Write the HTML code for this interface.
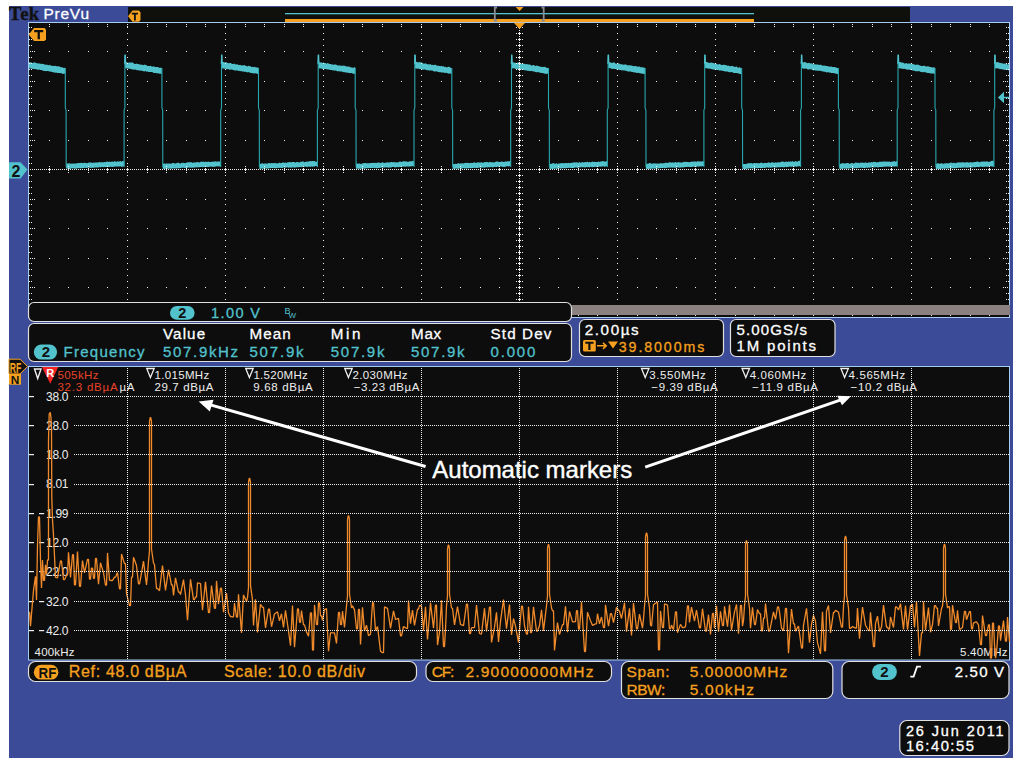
<!DOCTYPE html>
<html><head><meta charset="utf-8"><style>
html,body{margin:0;padding:0;background:#fff;width:1018px;height:763px;overflow:hidden}
svg{display:block}
text{font-family:"Liberation Sans",sans-serif}
</style></head><body>
<svg width="1018" height="763" viewBox="0 0 1018 763">
<rect x="0" y="0" width="1018" height="763" fill="#fff"/>
<rect x="9" y="6" width="1004" height="752" fill="#3c4b98"/>
<rect x="128" y="7" width="782" height="15" fill="#0f0f0b"/>
<rect x="285" y="13" width="469" height="1.3" fill="#52c3cd"/>
<rect x="285" y="19" width="469" height="3" fill="#f5a01e"/>
<path d="M497 7.5 h-2.2 v13 h2.2" fill="none" stroke="#8a8a90" stroke-width="1.8"/>
<path d="M541.5 7.5 h2.2 v13 h-2.2" fill="none" stroke="#8a8a90" stroke-width="1.8"/>
<path d="M515.7 7 L523.5 7 L519.6 11 Z" fill="#f5a01e"/>
<path d="M128 16.2 L132.5 10.6 L139 10.6 L140.5 12.5 L140.5 20 L139 21.8 L132.5 21.8 Z" fill="#f5a01e"/>
<path d="M131.8 12.8 h6.2 v1.8 h-2.2 v6 h-1.8 v-6 h-2.2 Z" fill="#111"/>
<text x="9.10" y="19.90" font-size="18.5" fill="#111" style="font-family:Liberation Serif" textLength="30.00" lengthAdjust="spacing" font-weight="bold" stroke="#111" stroke-width="0.4">Tek</text>
<text x="43.50" y="19.30" font-size="15.5" fill="#fff" textLength="45.50" lengthAdjust="spacing" stroke="#fff" stroke-width="0.3">PreVu</text>
<rect x="28.5" y="22.5" width="981" height="295" fill="#0d0d0d" stroke="#a6cdf0" stroke-width="1"/>
<path d="M29.0 62.3L30.0 62.3L31.0 62.2L32.0 63.0L33.0 62.9L34.0 62.3L35.0 62.6L36.1 63.0L37.1 63.2L38.1 63.4L39.1 63.4L40.1 63.5L41.1 64.1L42.1 63.7L43.1 64.0L44.1 64.2L45.1 64.7L46.1 64.8L47.1 64.5L48.1 65.4L49.1 64.8L50.2 65.3L51.2 65.5L52.2 65.9L53.2 65.8L54.2 65.9L55.2 65.8L56.2 66.2L57.2 66.2L58.2 66.3L59.2 66.6L60.2 66.7L61.2 67.4L62.2 67.0L63.2 67.9L64.3 67.7L65.3 68.0L65.3 74.2L64.3 73.6L63.2 73.9L62.2 73.8L61.2 73.1L60.2 73.2L59.2 72.9L58.2 72.9L57.2 73.0L56.2 72.4L55.2 72.7L54.2 72.5L53.2 72.3L52.2 72.0L51.2 71.7L50.2 71.5L49.1 71.4L48.1 71.1L47.1 70.9L46.1 71.2L45.1 71.0L44.1 70.9L43.1 70.7L42.1 70.3L41.1 69.9L40.1 70.0L39.1 69.6L38.1 69.8L37.1 69.7L36.1 69.1L35.0 69.2L34.0 69.0L33.0 68.7L32.0 68.9L31.0 68.3L30.0 68.4L29.0 68.2ZM66.1 163.4L67.1 163.6L68.1 163.5L69.1 163.3L70.1 163.6L71.1 163.7L72.1 163.4L73.1 163.8L74.1 163.3L75.1 163.8L76.1 163.5L77.1 162.9L78.1 163.3L79.1 163.0L80.1 163.1L81.1 162.7L82.1 163.1L83.1 163.3L84.1 162.5L85.1 162.9L86.1 163.0L87.1 163.3L88.2 162.7L89.2 162.6L90.2 162.5L91.2 162.5L92.2 163.1L93.2 162.4L94.2 162.8L95.2 162.4L96.2 162.6L97.2 162.5L98.2 162.5L99.2 162.0L100.2 162.2L101.2 162.4L102.2 161.9L103.2 162.4L104.2 161.9L105.2 162.2L106.2 161.7L107.2 161.6L108.2 162.1L109.2 161.5L110.2 162.1L111.2 161.7L112.3 161.4L113.3 162.0L114.3 161.3L115.3 161.3L116.3 161.9L117.3 161.2L118.3 161.6L119.3 161.5L120.3 161.0L121.3 161.8L122.3 160.9L123.3 161.3L124.3 160.8L124.3 166.1L123.3 166.6L122.3 166.7L121.3 166.7L120.3 166.3L119.3 166.5L118.3 166.5L117.3 166.5L116.3 166.5L115.3 166.6L114.3 166.8L113.3 166.7L112.3 167.0L111.2 166.7L110.2 166.7L109.2 166.9L108.2 167.1L107.2 166.9L106.2 167.1L105.2 167.0L104.2 166.9L103.2 167.2L102.2 167.1L101.2 167.1L100.2 167.5L99.2 167.1L98.2 167.4L97.2 167.6L96.2 167.4L95.2 167.5L94.2 167.6L93.2 167.9L92.2 167.5L91.2 167.9L90.2 167.7L89.2 167.8L88.2 167.6L87.1 168.0L86.1 168.0L85.1 167.7L84.1 168.1L83.1 168.0L82.1 168.3L81.1 168.2L80.1 168.3L79.1 168.3L78.1 168.3L77.1 168.3L76.1 168.7L75.1 168.7L74.1 168.3L73.1 168.5L72.1 168.3L71.1 168.4L70.1 169.0L69.1 169.0L68.1 168.7L67.1 168.5L66.1 168.6ZM125.1 61.7L126.1 61.9L127.1 62.5L128.2 62.7L129.2 62.5L130.2 62.4L131.2 62.5L132.3 62.6L133.3 62.8L134.3 63.9L135.3 63.9L136.3 63.6L137.4 64.0L138.4 63.9L139.4 64.5L140.4 64.4L141.5 64.7L142.5 64.7L143.5 65.2L144.5 64.6L145.5 64.9L146.6 65.2L147.6 66.0L148.6 65.9L149.6 65.9L150.7 65.7L151.7 66.6L152.7 66.7L153.7 66.0L154.7 67.1L155.8 67.0L156.8 67.1L157.8 67.1L158.8 67.6L159.9 67.9L160.9 67.4L161.9 68.2L161.9 73.8L160.9 73.8L159.9 73.7L158.8 73.4L157.8 73.3L156.8 73.3L155.8 72.9L154.7 72.9L153.7 72.9L152.7 72.3L151.7 72.1L150.7 71.9L149.6 72.0L148.6 71.9L147.6 71.6L146.6 71.8L145.5 71.1L144.5 71.4L143.5 71.2L142.5 71.1L141.5 70.6L140.4 70.7L139.4 70.6L138.4 70.2L137.4 70.3L136.3 69.9L135.3 69.6L134.3 69.7L133.3 69.5L132.3 69.5L131.2 69.2L130.2 68.7L129.2 68.7L128.2 68.4L127.1 68.4L126.1 68.3L125.1 68.3ZM162.7 163.9L163.7 163.4L164.7 163.4L165.7 163.7L166.7 163.6L167.7 163.6L168.7 163.5L169.7 163.4L170.7 163.8L171.7 163.4L172.7 162.9L173.7 162.9L174.7 163.5L175.8 163.6L176.8 163.0L177.8 162.8L178.8 162.8L179.8 163.4L180.8 163.5L181.8 162.6L182.8 163.3L183.8 162.5L184.8 163.3L185.8 163.1L186.8 162.5L187.8 162.2L188.8 162.3L189.8 162.3L190.8 162.3L191.8 162.2L192.8 162.9L193.8 162.3L194.8 162.6L195.8 162.6L196.8 162.0L197.8 162.3L198.8 162.3L199.9 162.5L200.9 161.6L201.9 161.8L202.9 161.8L203.9 161.8L204.9 161.9L205.9 161.5L206.9 162.2L207.9 161.4L208.9 161.8L209.9 162.0L210.9 161.9L211.9 161.8L212.9 161.4L213.9 161.7L214.9 161.6L215.9 161.3L216.9 161.7L217.9 161.4L218.9 161.6L219.9 161.4L220.9 161.6L220.9 166.6L219.9 166.5L218.9 166.3L217.9 166.4L216.9 166.2L215.9 166.4L214.9 166.8L213.9 166.7L212.9 166.9L211.9 166.5L210.9 166.8L209.9 166.6L208.9 167.0L207.9 166.9L206.9 167.1L205.9 166.8L204.9 167.1L203.9 167.1L202.9 167.2L201.9 166.9L200.9 167.1L199.9 167.2L198.8 167.2L197.8 167.3L196.8 167.3L195.8 167.5L194.8 167.3L193.8 167.7L192.8 167.4L191.8 167.8L190.8 167.4L189.8 167.7L188.8 167.4L187.8 167.8L186.8 168.0L185.8 168.1L184.8 168.1L183.8 167.7L182.8 167.7L181.8 167.8L180.8 167.9L179.8 168.2L178.8 168.2L177.8 168.3L176.8 168.5L175.8 168.5L174.7 168.3L173.7 168.6L172.7 168.3L171.7 168.7L170.7 168.5L169.7 168.7L168.7 168.4L167.7 168.8L166.7 168.8L165.7 168.7L164.7 168.9L163.7 168.7L162.7 168.9ZM221.7 61.9L222.8 62.1L223.8 61.9L224.8 62.4L225.8 62.2L226.9 62.5L227.9 62.9L228.9 63.3L229.9 63.1L230.9 63.0L232.0 63.9L233.0 64.0L234.0 63.5L235.0 64.3L236.1 64.4L237.1 64.1L238.1 64.9L239.1 64.9L240.1 64.8L241.2 65.5L242.2 65.3L243.2 65.6L244.2 65.1L245.3 65.6L246.3 66.1L247.3 66.4L248.3 65.8L249.3 65.9L250.4 66.2L251.4 66.9L252.4 66.7L253.4 67.2L254.5 66.7L255.5 67.3L256.5 67.5L257.5 67.4L258.5 67.7L258.5 73.8L257.5 73.9L256.5 73.6L255.5 73.3L254.5 73.5L253.4 73.3L252.4 73.2L251.4 73.0L250.4 72.8L249.3 72.5L248.3 72.1L247.3 72.4L246.3 72.1L245.3 71.7L244.2 71.7L243.2 71.6L242.2 71.4L241.2 71.1L240.1 71.2L239.1 70.8L238.1 70.9L237.1 70.3L236.1 70.4L235.0 70.5L234.0 70.3L233.0 70.0L232.0 69.6L230.9 69.4L229.9 69.7L228.9 69.4L227.9 68.9L226.9 69.2L225.8 68.7L224.8 68.7L223.8 68.5L222.8 68.5L221.7 68.2ZM259.3 163.6L260.3 164.0L261.3 163.5L262.4 163.2L263.4 163.8L264.4 163.4L265.4 163.4L266.4 163.6L267.4 163.8L268.4 163.1L269.4 163.1L270.4 163.5L271.4 162.9L272.4 163.2L273.4 162.9L274.4 163.3L275.4 163.0L276.4 163.2L277.4 163.4L278.4 163.3L279.4 162.6L280.4 163.2L281.4 162.9L282.4 162.4L283.4 162.6L284.4 162.8L285.4 162.6L286.5 162.9L287.5 162.2L288.5 162.2L289.5 162.0L290.5 162.3L291.5 162.2L292.5 162.1L293.5 161.9L294.5 162.1L295.5 162.7L296.5 162.0L297.5 162.1L298.5 162.3L299.5 162.5L300.5 161.8L301.5 161.8L302.5 161.5L303.5 161.5L304.5 162.2L305.5 162.0L306.5 161.6L307.5 161.8L308.5 161.4L309.5 161.2L310.6 161.1L311.6 161.2L312.6 161.1L313.6 161.0L314.6 161.1L315.6 161.7L316.6 161.7L317.6 161.5L317.6 166.3L316.6 166.2L315.6 166.1L314.6 166.4L313.6 166.4L312.6 166.8L311.6 166.5L310.6 166.7L309.5 166.7L308.5 166.5L307.5 167.0L306.5 167.0L305.5 166.6L304.5 166.8L303.5 167.0L302.5 166.7L301.5 167.3L300.5 167.0L299.5 167.1L298.5 167.2L297.5 167.2L296.5 167.2L295.5 167.4L294.5 167.5L293.5 167.4L292.5 167.3L291.5 167.7L290.5 167.5L289.5 167.5L288.5 167.8L287.5 167.3L286.5 167.5L285.4 167.8L284.4 167.6L283.4 167.6L282.4 168.0L281.4 168.0L280.4 167.7L279.4 168.1L278.4 167.8L277.4 167.9L276.4 168.3L275.4 168.3L274.4 168.1L273.4 168.2L272.4 168.1L271.4 168.1L270.4 168.3L269.4 168.3L268.4 168.5L267.4 168.6L266.4 168.4L265.4 168.6L264.4 168.7L263.4 168.8L262.4 168.5L261.3 168.6L260.3 169.1L259.3 168.9ZM318.4 61.7L319.4 62.2L320.4 62.4L321.4 62.2L322.5 62.9L323.5 62.5L324.5 63.0L325.5 63.0L326.6 63.7L327.6 63.1L328.6 63.6L329.6 64.0L330.6 64.0L331.7 64.5L332.7 64.5L333.7 64.8L334.7 64.6L335.8 64.5L336.8 65.0L337.8 65.5L338.8 65.5L339.8 65.4L340.9 65.4L341.9 66.1L342.9 65.6L343.9 65.7L345.0 65.7L346.0 66.6L347.0 66.2L348.0 66.8L349.0 66.6L350.1 66.9L351.1 67.6L352.1 67.6L353.1 67.9L354.2 67.2L355.2 67.3L355.2 74.0L354.2 73.7L353.1 73.8L352.1 73.2L351.1 73.1L350.1 72.9L349.0 73.3L348.0 72.6L347.0 72.8L346.0 72.4L345.0 72.2L343.9 72.2L342.9 71.9L341.9 71.6L340.9 71.6L339.8 71.4L338.8 71.1L337.8 71.5L336.8 71.0L335.8 70.6L334.7 70.7L333.7 70.3L332.7 70.4L331.7 70.0L330.6 69.9L329.6 69.7L328.6 69.6L327.6 69.4L326.6 69.3L325.5 69.1L324.5 69.1L323.5 68.9L322.5 69.0L321.4 68.6L320.4 68.4L319.4 68.4L318.4 68.2ZM356.0 163.5L357.0 163.3L358.0 163.9L359.0 163.2L360.0 163.8L361.0 163.9L362.0 163.7L363.0 163.0L364.0 163.2L365.0 163.0L366.0 162.9L367.0 163.4L368.0 163.0L369.0 163.4L370.0 162.9L371.0 162.9L372.0 163.1L373.1 162.8L374.1 163.0L375.1 162.7L376.1 163.1L377.1 162.7L378.1 162.4L379.1 162.4L380.1 162.9L381.1 163.1L382.1 162.2L383.1 162.5L384.1 162.9L385.1 162.7L386.1 162.8L387.1 162.3L388.1 162.6L389.1 162.6L390.1 162.3L391.1 162.1L392.1 162.1L393.1 162.4L394.1 161.8L395.1 162.5L396.1 162.3L397.1 162.4L398.2 162.2L399.2 161.7L400.2 161.6L401.2 161.9L402.2 161.8L403.2 161.3L404.2 161.3L405.2 161.6L406.2 161.3L407.2 161.7L408.2 161.9L409.2 161.2L410.2 161.2L411.2 161.6L412.2 160.8L413.2 161.3L414.2 161.5L414.2 166.1L413.2 166.1L412.2 166.3L411.2 166.3L410.2 166.5L409.2 166.5L408.2 166.6L407.2 166.6L406.2 166.4L405.2 166.7L404.2 166.6L403.2 166.8L402.2 166.6L401.2 166.9L400.2 167.1L399.2 167.0L398.2 167.2L397.1 167.0L396.1 167.3L395.1 167.4L394.1 167.0L393.1 167.0L392.1 167.1L391.1 167.5L390.1 167.5L389.1 167.4L388.1 167.7L387.1 167.2L386.1 167.6L385.1 167.3L384.1 167.7L383.1 167.4L382.1 167.5L381.1 167.7L380.1 167.7L379.1 168.0L378.1 167.9L377.1 168.2L376.1 168.2L375.1 167.8L374.1 168.2L373.1 167.8L372.0 167.9L371.0 168.1L370.0 168.3L369.0 168.1L368.0 168.3L367.0 168.2L366.0 168.3L365.0 168.5L364.0 168.7L363.0 168.4L362.0 168.7L361.0 168.6L360.0 168.9L359.0 168.5L358.0 168.8L357.0 168.5L356.0 169.1ZM415.0 61.5L416.0 61.7L417.1 62.1L418.1 62.4L419.1 62.1L420.1 62.3L421.2 62.6L422.2 62.6L423.2 63.4L424.2 63.7L425.2 63.3L426.3 63.7L427.3 64.3L428.3 64.3L429.3 64.4L430.4 64.1L431.4 64.9L432.4 64.8L433.4 65.2L434.4 64.8L435.5 64.7L436.5 65.5L437.5 65.7L438.5 65.7L439.6 66.0L440.6 66.2L441.6 65.8L442.6 66.5L443.6 66.2L444.7 67.0L445.7 66.8L446.7 67.4L447.7 66.9L448.8 66.8L449.8 67.0L450.8 68.0L451.8 67.9L451.8 73.9L450.8 73.5L449.8 73.4L448.8 73.7L447.7 73.3L446.7 73.0L445.7 72.8L444.7 72.9L443.6 72.4L442.6 72.4L441.6 72.6L440.6 72.2L439.6 72.3L438.5 71.9L437.5 71.7L436.5 71.3L435.5 71.6L434.4 71.5L433.4 71.2L432.4 70.6L431.4 70.6L430.4 70.4L429.3 70.6L428.3 70.2L427.3 70.2L426.3 70.0L425.2 69.6L424.2 69.4L423.2 69.7L422.2 69.5L421.2 69.1L420.1 68.9L419.1 69.0L418.1 68.6L417.1 68.7L416.0 68.6L415.0 68.3ZM452.6 164.2L453.6 164.1L454.6 163.9L455.6 163.7L456.6 164.0L457.6 163.4L458.6 163.1L459.6 163.7L460.7 163.2L461.7 163.4L462.7 163.3L463.7 163.6L464.7 163.1L465.7 162.8L466.7 163.0L467.7 162.8L468.7 163.1L469.7 163.3L470.7 162.8L471.7 162.9L472.7 163.0L473.7 162.5L474.7 162.3L475.7 162.9L476.7 162.8L477.7 162.3L478.7 162.5L479.7 162.5L480.7 162.5L481.7 162.3L482.7 162.8L483.7 162.5L484.8 162.0L485.8 162.2L486.8 161.8L487.8 162.3L488.8 162.4L489.8 161.7L490.8 162.3L491.8 162.3L492.8 162.2L493.8 162.4L494.8 162.2L495.8 161.8L496.8 161.5L497.8 161.5L498.8 161.9L499.8 162.1L500.8 161.7L501.8 161.6L502.8 161.8L503.8 161.9L504.8 161.8L505.8 161.2L506.8 161.7L507.8 161.1L508.9 161.6L509.9 160.9L510.9 160.7L510.9 166.3L509.9 166.1L508.9 166.6L507.8 166.2L506.8 166.2L505.8 166.6L504.8 166.9L503.8 166.9L502.8 166.9L501.8 166.4L500.8 166.6L499.8 166.6L498.8 167.1L497.8 166.6L496.8 167.0L495.8 167.1L494.8 166.8L493.8 166.9L492.8 167.4L491.8 166.9L490.8 167.1L489.8 167.5L488.8 167.1L487.8 167.5L486.8 167.2L485.8 167.2L484.8 167.7L483.7 167.5L482.7 167.6L481.7 167.8L480.7 167.5L479.7 167.7L478.7 167.4L477.7 168.0L476.7 168.0L475.7 167.9L474.7 167.7L473.7 167.9L472.7 168.0L471.7 168.0L470.7 168.4L469.7 167.9L468.7 168.2L467.7 168.3L466.7 168.5L465.7 168.3L464.7 168.6L463.7 168.1L462.7 168.3L461.7 168.7L460.7 168.7L459.6 168.3L458.6 168.8L457.6 168.7L456.6 168.6L455.6 168.6L454.6 169.0L453.6 168.7L452.6 168.9ZM511.7 62.0L512.7 62.2L513.7 62.5L514.7 62.8L515.7 62.7L516.8 63.2L517.8 62.5L518.8 62.6L519.8 63.4L520.9 63.4L521.9 63.7L522.9 63.9L523.9 63.6L524.9 64.1L526.0 64.3L527.0 64.0L528.0 64.4L529.0 64.4L530.1 64.4L531.1 65.4L532.1 65.5L533.1 64.9L534.1 65.1L535.2 66.2L536.2 65.5L537.2 65.8L538.2 65.9L539.3 66.3L540.3 66.8L541.3 66.8L542.3 66.9L543.3 67.1L544.4 66.7L545.4 66.9L546.4 67.7L547.4 67.9L548.5 67.8L548.5 74.1L547.4 73.6L546.4 74.0L545.4 73.7L544.4 73.6L543.3 73.2L542.3 72.9L541.3 72.9L540.3 72.8L539.3 72.5L538.2 72.1L537.2 72.2L536.2 72.3L535.2 72.1L534.1 71.5L533.1 71.5L532.1 71.1L531.1 71.1L530.1 71.3L529.0 70.7L528.0 71.0L527.0 70.4L526.0 70.4L524.9 70.3L523.9 70.1L522.9 70.1L521.9 69.5L520.9 69.7L519.8 69.7L518.8 69.1L517.8 69.4L516.8 68.8L515.7 69.0L514.7 68.4L513.7 68.2L512.7 68.6L511.7 67.9ZM549.3 163.9L550.3 163.9L551.3 163.7L552.3 163.6L553.3 163.1L554.3 163.6L555.3 163.9L556.3 163.1L557.3 163.9L558.3 163.5L559.3 163.5L560.3 163.2L561.3 163.3L562.3 163.0L563.3 163.3L564.3 163.2L565.3 162.9L566.3 162.9L567.3 163.2L568.3 162.8L569.3 163.3L570.3 163.1L571.4 162.8L572.4 162.7L573.4 162.4L574.4 162.2L575.4 162.4L576.4 162.2L577.4 162.6L578.4 162.7L579.4 162.1L580.4 162.8L581.4 162.5L582.4 162.0L583.4 162.5L584.4 162.2L585.4 162.0L586.4 162.2L587.4 161.6L588.4 162.5L589.4 161.7L590.4 162.4L591.4 161.9L592.4 161.5L593.4 162.0L594.4 161.7L595.5 162.0L596.5 162.1L597.5 162.1L598.5 161.6L599.5 162.0L600.5 161.5L601.5 161.4L602.5 160.9L603.5 161.3L604.5 161.5L605.5 161.7L606.5 161.1L607.5 160.9L607.5 166.5L606.5 166.3L605.5 166.4L604.5 166.7L603.5 166.3L602.5 166.6L601.5 166.4L600.5 166.8L599.5 166.5L598.5 166.7L597.5 167.0L596.5 166.9L595.5 166.8L594.4 167.1L593.4 166.9L592.4 167.2L591.4 167.0L590.4 166.8L589.4 167.4L588.4 167.1L587.4 167.3L586.4 167.0L585.4 167.4L584.4 167.3L583.4 167.3L582.4 167.2L581.4 167.2L580.4 167.2L579.4 167.6L578.4 167.4L577.4 167.9L576.4 167.6L575.4 167.5L574.4 167.7L573.4 168.0L572.4 168.0L571.4 168.1L570.3 167.7L569.3 167.9L568.3 167.8L567.3 168.0L566.3 167.9L565.3 168.4L564.3 168.1L563.3 168.2L562.3 168.2L561.3 168.6L560.3 168.6L559.3 168.3L558.3 168.8L557.3 168.7L556.3 168.7L555.3 168.6L554.3 168.7L553.3 168.7L552.3 169.0L551.3 168.8L550.3 169.1L549.3 169.0ZM608.3 61.6L609.3 62.4L610.3 62.3L611.4 62.7L612.4 62.9L613.4 62.3L614.4 62.5L615.5 63.4L616.5 63.7L617.5 63.5L618.5 63.2L619.5 63.8L620.6 64.2L621.6 64.3L622.6 64.4L623.6 64.7L624.7 64.5L625.7 64.5L626.7 64.7L627.7 65.4L628.7 65.3L629.8 65.3L630.8 65.6L631.8 65.4L632.8 65.9L633.9 66.2L634.9 66.0L635.9 66.0L636.9 66.6L637.9 66.7L639.0 66.6L640.0 66.8L641.0 67.5L642.0 67.0L643.1 67.4L644.1 67.7L645.1 67.7L645.1 74.2L644.1 73.8L643.1 73.9L642.0 73.5L641.0 73.4L640.0 73.2L639.0 72.9L637.9 72.7L636.9 73.0L635.9 72.8L634.9 72.2L633.9 72.4L632.8 72.1L631.8 72.1L630.8 71.4L629.8 71.6L628.7 71.4L627.7 71.4L626.7 71.1L625.7 70.7L624.7 70.6L623.6 70.5L622.6 70.2L621.6 70.4L620.6 69.9L619.5 69.9L618.5 69.5L617.5 69.8L616.5 69.4L615.5 69.1L614.4 69.0L613.4 68.7L612.4 69.0L611.4 68.8L610.3 68.3L609.3 68.0L608.3 68.3ZM645.9 164.1L646.9 163.5L647.9 163.9L648.9 163.2L649.9 163.1L650.9 163.3L651.9 164.0L652.9 163.2L653.9 163.4L654.9 163.6L655.9 163.3L656.9 163.7L657.9 163.4L659.0 163.5L660.0 163.4L661.0 163.0L662.0 163.5L663.0 163.3L664.0 163.3L665.0 162.9L666.0 162.5L667.0 162.9L668.0 163.0L669.0 162.3L670.0 162.3L671.0 162.7L672.0 162.2L673.0 162.5L674.0 162.8L675.0 162.0L676.0 162.2L677.0 162.8L678.0 162.1L679.0 162.3L680.0 162.4L681.0 162.6L682.0 162.4L683.1 162.3L684.1 161.8L685.1 161.9L686.1 161.7L687.1 161.9L688.1 162.0L689.1 162.2L690.1 162.1L691.1 161.8L692.1 161.4L693.1 161.8L694.1 161.6L695.1 161.2L696.1 161.9L697.1 161.3L698.1 161.2L699.1 161.4L700.1 161.3L701.1 161.7L702.1 160.9L703.1 161.7L704.1 160.9L704.1 166.2L703.1 166.1L702.1 166.2L701.1 166.5L700.1 166.3L699.1 166.6L698.1 166.4L697.1 166.6L696.1 166.9L695.1 166.5L694.1 166.9L693.1 166.5L692.1 167.0L691.1 167.1L690.1 167.1L689.1 167.0L688.1 166.7L687.1 167.1L686.1 166.9L685.1 167.1L684.1 167.2L683.1 167.4L682.0 167.3L681.0 167.4L680.0 167.5L679.0 167.7L678.0 167.3L677.0 167.6L676.0 167.8L675.0 167.8L674.0 167.5L673.0 167.7L672.0 167.5L671.0 167.6L670.0 167.8L669.0 167.6L668.0 167.8L667.0 167.7L666.0 168.0L665.0 168.3L664.0 167.8L663.0 168.1L662.0 168.1L661.0 168.0L660.0 168.2L659.0 168.2L657.9 168.5L656.9 168.4L655.9 168.4L654.9 168.6L653.9 168.6L652.9 168.5L651.9 168.7L650.9 168.5L649.9 168.9L648.9 168.8L647.9 169.0L646.9 168.9L645.9 168.6ZM704.9 62.0L706.0 62.0L707.0 62.1L708.0 62.6L709.0 62.9L710.1 62.7L711.1 62.4L712.1 62.8L713.1 62.9L714.1 63.2L715.2 63.8L716.2 63.4L717.2 64.2L718.2 64.5L719.3 64.1L720.3 64.3L721.3 65.0L722.3 64.9L723.3 64.8L724.4 64.8L725.4 65.0L726.4 65.3L727.4 65.7L728.5 65.4L729.5 66.2L730.5 65.9L731.5 66.2L732.5 65.8L733.6 66.6L734.6 67.0L735.6 66.8L736.6 66.6L737.7 67.6L738.7 67.8L739.7 67.1L740.7 68.1L741.7 68.0L741.7 74.0L740.7 73.9L739.7 73.9L738.7 73.6L737.7 73.3L736.6 73.1L735.6 72.9L734.6 72.9L733.6 73.0L732.5 72.3L731.5 72.1L730.5 72.3L729.5 72.3L728.5 71.9L727.4 71.5L726.4 71.5L725.4 71.5L724.4 71.3L723.3 70.9L722.3 70.7L721.3 70.5L720.3 70.4L719.3 70.4L718.2 70.1L717.2 70.0L716.2 69.8L715.2 69.7L714.1 69.5L713.1 69.4L712.1 69.2L711.1 68.9L710.1 68.8L709.0 68.5L708.0 68.7L707.0 68.2L706.0 68.1L704.9 68.4ZM742.5 164.0L743.5 164.1L744.5 164.1L745.6 164.1L746.6 163.9L747.6 163.3L748.6 163.2L749.6 163.3L750.6 163.2L751.6 162.9L752.6 163.8L753.6 162.9L754.6 163.0L755.6 163.3L756.6 163.0L757.6 163.3L758.6 163.3L759.6 163.3L760.6 162.8L761.6 162.5L762.6 163.2L763.6 163.3L764.6 162.7L765.6 163.0L766.6 163.1L767.6 162.7L768.6 162.2L769.7 162.7L770.7 163.0L771.7 162.2L772.7 162.2L773.7 162.7L774.7 162.7L775.7 162.2L776.7 162.7L777.7 162.2L778.7 162.2L779.7 162.4L780.7 161.9L781.7 161.6L782.7 161.6L783.7 161.7L784.7 162.3L785.7 161.5L786.7 161.7L787.7 162.0L788.7 161.3L789.7 162.0L790.7 161.3L791.7 161.8L792.7 161.1L793.8 162.0L794.8 161.6L795.8 160.9L796.8 161.8L797.8 161.6L798.8 160.8L799.8 160.8L800.8 161.4L800.8 166.1L799.8 166.2L798.8 166.2L797.8 166.3L796.8 166.7L795.8 166.4L794.8 166.5L793.8 166.9L792.7 166.5L791.7 166.7L790.7 166.7L789.7 166.6L788.7 166.8L787.7 167.1L786.7 167.2L785.7 166.7L784.7 167.2L783.7 167.3L782.7 167.3L781.7 167.0L780.7 167.3L779.7 167.2L778.7 167.2L777.7 167.2L776.7 167.5L775.7 167.5L774.7 167.5L773.7 167.3L772.7 167.4L771.7 167.5L770.7 167.8L769.7 167.6L768.6 167.8L767.6 167.6L766.6 167.6L765.6 167.7L764.6 168.0L763.6 167.8L762.6 167.9L761.6 168.0L760.6 168.2L759.6 168.0L758.6 168.1L757.6 168.3L756.6 168.0L755.6 168.3L754.6 168.4L753.6 168.3L752.6 168.5L751.6 168.2L750.6 168.5L749.6 168.3L748.6 168.6L747.6 168.7L746.6 168.4L745.6 169.0L744.5 169.1L743.5 168.9L742.5 168.7ZM801.6 61.9L802.6 62.2L803.6 62.5L804.6 62.0L805.7 62.3L806.7 63.0L807.7 63.3L808.7 62.7L809.8 63.2L810.8 63.5L811.8 63.2L812.8 63.9L813.8 64.2L814.9 64.2L815.9 64.6L816.9 64.5L817.9 64.4L819.0 64.9L820.0 64.8L821.0 64.7L822.0 65.5L823.0 65.7L824.1 65.5L825.1 65.8L826.1 65.9L827.1 66.1L828.2 66.2L829.2 66.7L830.2 66.5L831.2 66.6L832.2 66.9L833.3 67.1L834.3 67.1L835.3 67.3L836.3 67.5L837.4 68.0L838.4 68.2L838.4 74.2L837.4 74.1L836.3 73.8L835.3 73.5L834.3 73.3L833.3 72.9L832.2 72.9L831.2 73.1L830.2 72.6L829.2 72.7L828.2 72.1L827.1 72.4L826.1 72.2L825.1 71.8L824.1 71.7L823.0 71.4L822.0 71.3L821.0 71.1L820.0 70.8L819.0 70.7L817.9 70.8L816.9 70.5L815.9 70.7L814.9 70.3L813.8 70.3L812.8 70.2L811.8 69.6L810.8 69.3L809.8 69.2L808.7 69.5L807.7 69.4L806.7 68.8L805.7 68.5L804.6 68.8L803.6 68.7L802.6 68.3L801.6 68.2ZM839.2 164.1L840.2 164.0L841.2 163.6L842.2 163.3L843.2 163.1L844.2 163.7L845.2 163.2L846.2 163.2L847.2 162.9L848.2 163.0L849.2 163.7L850.2 163.7L851.2 162.9L852.2 163.0L853.2 163.4L854.2 163.6L855.2 162.6L856.3 162.8L857.3 162.8L858.3 162.7L859.3 163.2L860.3 162.4L861.3 162.7L862.3 162.4L863.3 162.7L864.3 163.0L865.3 162.3L866.3 162.8L867.3 162.9L868.3 162.5L869.3 162.4L870.3 162.6L871.3 162.1L872.3 162.5L873.3 161.8L874.3 162.1L875.3 161.7L876.3 162.4L877.3 162.2L878.3 162.2L879.3 161.8L880.3 161.8L881.4 161.8L882.4 161.8L883.4 161.5L884.4 161.5L885.4 161.4L886.4 161.7L887.4 161.4L888.4 161.8L889.4 161.5L890.4 162.0L891.4 161.8L892.4 161.5L893.4 161.6L894.4 161.0L895.4 161.8L896.4 161.3L897.4 160.9L897.4 166.2L896.4 166.1L895.4 166.4L894.4 166.5L893.4 166.6L892.4 166.6L891.4 166.8L890.4 166.4L889.4 166.7L888.4 166.5L887.4 166.6L886.4 166.8L885.4 166.6L884.4 166.8L883.4 166.7L882.4 167.0L881.4 167.0L880.3 167.1L879.3 167.1L878.3 167.4L877.3 167.2L876.3 167.0L875.3 167.2L874.3 167.3L873.3 167.5L872.3 167.1L871.3 167.6L870.3 167.4L869.3 167.7L868.3 167.5L867.3 167.9L866.3 167.5L865.3 167.9L864.3 167.9L863.3 167.9L862.3 167.8L861.3 167.7L860.3 167.8L859.3 168.0L858.3 167.7L857.3 168.2L856.3 168.3L855.2 168.0L854.2 168.2L853.2 168.4L852.2 168.0L851.2 168.2L850.2 168.1L849.2 168.7L848.2 168.5L847.2 168.6L846.2 168.7L845.2 168.6L844.2 168.4L843.2 168.4L842.2 169.0L841.2 169.0L840.2 168.6L839.2 169.0ZM898.2 62.1L899.2 62.0L900.3 61.9L901.3 62.6L902.3 62.5L903.3 62.7L904.4 63.4L905.4 63.4L906.4 62.9L907.4 63.7L908.4 63.4L909.5 63.5L910.5 63.4L911.5 64.3L912.5 63.8L913.6 64.3L914.6 64.6L915.6 65.1L916.6 64.5L917.6 64.8L918.7 64.7L919.7 65.5L920.7 65.8L921.7 66.1L922.8 65.9L923.8 65.7L924.8 65.8L925.8 66.6L926.8 66.6L927.9 66.3L928.9 66.4L929.9 67.1L930.9 66.9L932.0 67.4L933.0 67.4L934.0 67.3L935.0 67.7L935.0 74.0L934.0 73.5L933.0 73.5L932.0 73.4L930.9 73.5L929.9 73.2L928.9 73.1L927.9 73.0L926.8 72.8L925.8 72.5L924.8 72.1L923.8 72.3L922.8 72.3L921.7 72.0L920.7 71.9L919.7 71.3L918.7 71.3L917.6 71.3L916.6 71.3L915.6 71.2L914.6 70.9L913.6 70.4L912.5 70.6L911.5 70.1L910.5 69.9L909.5 69.8L908.4 69.5L907.4 69.7L906.4 69.5L905.4 69.0L904.4 68.8L903.3 68.9L902.3 68.7L901.3 68.4L900.3 68.5L899.2 68.3L898.2 68.2ZM935.8 164.1L936.8 163.7L937.8 163.3L938.8 163.3L939.8 163.9L940.8 163.2L941.8 163.2L942.8 163.7L943.9 163.7L944.9 163.3L945.9 163.5L946.9 162.9L947.9 163.4L948.9 163.3L949.9 163.1L950.9 162.6L951.9 162.8L952.9 163.3L953.9 162.6L954.9 163.2L955.9 162.9L956.9 162.7L957.9 162.6L958.9 162.3L959.9 162.6L960.9 162.5L961.9 162.3L962.9 162.3L963.9 162.4L964.9 162.4L965.9 162.4L966.9 162.0L968.0 162.4L969.0 162.4L970.0 162.6L971.0 162.0L972.0 162.6L973.0 162.6L974.0 162.1L975.0 162.1L976.0 161.9L977.0 161.6L978.0 161.5L979.0 162.3L980.0 162.2L981.0 161.5L982.0 161.7L983.0 161.6L984.0 161.4L985.0 161.5L986.0 161.7L987.0 161.0L988.0 162.0L989.0 161.7L990.0 161.7L991.0 161.1L992.1 160.8L993.1 160.8L994.1 161.5L994.1 166.5L993.1 166.5L992.1 166.4L991.0 166.2L990.0 166.3L989.0 166.7L988.0 166.4L987.0 166.9L986.0 166.6L985.0 166.8L984.0 166.9L983.0 166.7L982.0 167.0L981.0 166.6L980.0 166.8L979.0 167.2L978.0 166.9L977.0 167.0L976.0 167.0L975.0 167.4L974.0 166.9L973.0 167.3L972.0 167.5L971.0 167.5L970.0 167.6L969.0 167.4L968.0 167.6L966.9 167.7L965.9 167.4L964.9 167.4L963.9 167.5L962.9 167.7L961.9 167.4L960.9 167.8L959.9 168.1L958.9 167.6L957.9 168.0L956.9 167.9L955.9 167.9L954.9 168.2L953.9 168.2L952.9 168.3L951.9 168.0L950.9 168.4L949.9 168.1L948.9 168.4L947.9 168.4L946.9 168.5L945.9 168.3L944.9 168.7L943.9 168.7L942.8 168.6L941.8 168.5L940.8 168.9L939.8 168.9L938.8 169.0L937.8 168.8L936.8 169.1L935.8 168.9ZM994.9 62.0L995.9 62.5L996.9 62.2L997.9 62.1L998.9 62.6L999.9 62.9L1000.9 62.9L1001.9 63.3L1002.9 63.4L1003.9 63.8L1005.0 63.4L1006.0 63.8L1007.0 64.2L1008.0 64.5L1009.0 63.9L1009.0 70.6L1008.0 70.0L1007.0 70.1L1006.0 69.6L1005.0 69.9L1003.9 69.8L1002.9 69.6L1001.9 69.3L1000.9 68.9L999.9 69.2L998.9 68.5L997.9 68.4L996.9 68.3L995.9 68.4L994.9 68.0Z" fill="#52c3cd"/>
<path d="M65.3 68 L65.3 108 L66.1 110 L66.2 167 M124.1 167 L124.1 110 L124.9 108 L124.9 55 M161.9 68 L161.9 108 L162.7 110 L162.8 167 M220.7 167 L220.7 110 L221.5 108 L221.5 55 M258.5 68 L258.5 108 L259.3 110 L259.4 167 M317.4 167 L317.4 110 L318.2 108 L318.2 55 M355.2 68 L355.2 108 L356.0 110 L356.1 167 M414.0 167 L414.0 110 L414.8 108 L414.8 55 M451.8 68 L451.8 108 L452.6 110 L452.7 167 M510.7 167 L510.7 110 L511.5 108 L511.5 55 M548.5 68 L548.5 108 L549.3 110 L549.4 167 M607.3 167 L607.3 110 L608.1 108 L608.1 55 M645.1 68 L645.1 108 L645.9 110 L646.0 167 M703.9 167 L703.9 110 L704.7 108 L704.7 55 M741.7 68 L741.7 108 L742.5 110 L742.6 167 M800.6 167 L800.6 110 L801.4 108 L801.4 55 M838.4 68 L838.4 108 L839.2 110 L839.3 167 M897.2 167 L897.2 110 L898.0 108 L898.0 55 M935.0 68 L935.0 108 L935.8 110 L935.9 167 M993.9 167 L993.9 110 L994.7 108 L994.7 55" fill="none" stroke="#2aa6ae" stroke-width="1.1"/>
<path d="M124.1 64 L124.6 54.3 L125.9 54.8 L126.2 63 Z M220.7 64 L221.2 54.3 L222.5 54.8 L222.8 63 Z M317.4 64 L317.9 54.3 L319.2 54.8 L319.5 63 Z M414.0 64 L414.5 54.3 L415.8 54.8 L416.1 63 Z M510.7 64 L511.2 54.3 L512.5 54.8 L512.8 63 Z M607.3 64 L607.8 54.3 L609.1 54.8 L609.4 63 Z M703.9 64 L704.4 54.3 L705.7 54.8 L706.0 63 Z M800.6 64 L801.1 54.3 L802.4 54.8 L802.7 63 Z M897.2 64 L897.7 54.3 L899.0 54.8 L899.3 63 Z M993.9 64 L994.4 54.3 L995.7 54.8 L996.0 63 Z" fill="#52c3cd"/>
<path shape-rendering="crispEdges" d="M29 27h1v1h-1zM29 33h1v1h-1zM29 39h1v1h-1zM29 45h1v1h-1zM29 57h1v1h-1zM29 63h1v1h-1zM29 69h1v1h-1zM29 75h1v1h-1zM29 86h1v1h-1zM29 92h1v1h-1zM29 98h1v1h-1zM29 104h1v1h-1zM29 116h1v1h-1zM29 122h1v1h-1zM29 128h1v1h-1zM29 134h1v1h-1zM29 145h1v1h-1zM29 151h1v1h-1zM29 157h1v1h-1zM29 163h1v1h-1zM29 175h1v1h-1zM29 181h1v1h-1zM29 187h1v1h-1zM29 193h1v1h-1zM29 204h1v1h-1zM29 210h1v1h-1zM29 216h1v1h-1zM29 222h1v1h-1zM29 234h1v1h-1zM29 240h1v1h-1zM29 246h1v1h-1zM29 252h1v1h-1zM29 263h1v1h-1zM29 269h1v1h-1zM29 275h1v1h-1zM29 281h1v1h-1zM29 293h1v1h-1zM29 299h1v1h-1zM29 305h1v1h-1zM29 311h1v1h-1zM30 51h1v1h-1zM30 81h1v1h-1zM30 110h1v1h-1zM30 140h1v1h-1zM30 169h1v1h-1zM30 199h1v1h-1zM30 228h1v1h-1zM30 258h1v1h-1zM30 287h1v1h-1zM31 27h1v1h-1zM31 33h1v1h-1zM31 39h1v1h-1zM31 45h1v1h-1zM31 57h1v1h-1zM31 63h1v1h-1zM31 69h1v1h-1zM31 75h1v1h-1zM31 86h1v1h-1zM31 92h1v1h-1zM31 98h1v1h-1zM31 104h1v1h-1zM31 116h1v1h-1zM31 122h1v1h-1zM31 128h1v1h-1zM31 134h1v1h-1zM31 145h1v1h-1zM31 151h1v1h-1zM31 157h1v1h-1zM31 163h1v1h-1zM31 175h1v1h-1zM31 181h1v1h-1zM31 187h1v1h-1zM31 193h1v1h-1zM31 204h1v1h-1zM31 210h1v1h-1zM31 216h1v1h-1zM31 222h1v1h-1zM31 234h1v1h-1zM31 240h1v1h-1zM31 246h1v1h-1zM31 252h1v1h-1zM31 263h1v1h-1zM31 269h1v1h-1zM31 275h1v1h-1zM31 281h1v1h-1zM31 293h1v1h-1zM31 299h1v1h-1zM31 305h1v1h-1zM31 311h1v1h-1zM32 51h1v1h-1zM32 81h1v1h-1zM32 110h1v1h-1zM32 140h1v1h-1zM32 169h1v1h-1zM32 199h1v1h-1zM32 228h1v1h-1zM32 258h1v1h-1zM32 287h1v1h-1zM34 51h1v1h-1zM34 81h1v1h-1zM34 110h1v1h-1zM34 140h1v1h-1zM34 169h1v1h-1zM34 199h1v1h-1zM34 228h1v1h-1zM34 258h1v1h-1zM34 287h1v1h-1zM36 169h1v1h-1zM38 169h1v1h-1zM40 169h1v1h-1zM42 169h1v1h-1zM44 169h1v1h-1zM46 169h1v1h-1zM48 169h1v1h-1zM49 24h1v1h-1zM49 26h1v1h-1zM49 51h1v1h-1zM49 81h1v1h-1zM49 110h1v1h-1zM49 140h1v1h-1zM49 166h1v1h-1zM49 168h1v1h-1zM49 169h1v1h-1zM49 170h1v1h-1zM49 172h1v1h-1zM49 199h1v1h-1zM49 228h1v1h-1zM49 258h1v1h-1zM49 287h1v1h-1zM49 315h1v1h-1zM50 169h1v1h-1zM52 169h1v1h-1zM54 169h1v1h-1zM56 169h1v1h-1zM58 169h1v1h-1zM60 169h1v1h-1zM62 169h1v1h-1zM64 169h1v1h-1zM66 169h1v1h-1zM68 24h1v1h-1zM68 26h1v1h-1zM68 51h1v1h-1zM68 81h1v1h-1zM68 110h1v1h-1zM68 140h1v1h-1zM68 166h1v1h-1zM68 168h1v1h-1zM68 169h1v1h-1zM68 170h1v1h-1zM68 172h1v1h-1zM68 199h1v1h-1zM68 228h1v1h-1zM68 258h1v1h-1zM68 287h1v1h-1zM68 315h1v1h-1zM70 169h1v1h-1zM72 169h1v1h-1zM74 169h1v1h-1zM76 169h1v1h-1zM78 169h1v1h-1zM80 169h1v1h-1zM82 169h1v1h-1zM84 169h1v1h-1zM86 169h1v1h-1zM88 24h1v1h-1zM88 26h1v1h-1zM88 51h1v1h-1zM88 81h1v1h-1zM88 110h1v1h-1zM88 140h1v1h-1zM88 166h1v1h-1zM88 168h1v1h-1zM88 169h1v1h-1zM88 170h1v1h-1zM88 172h1v1h-1zM88 199h1v1h-1zM88 228h1v1h-1zM88 258h1v1h-1zM88 287h1v1h-1zM88 315h1v1h-1zM90 169h1v1h-1zM92 169h1v1h-1zM94 169h1v1h-1zM96 169h1v1h-1zM98 169h1v1h-1zM100 169h1v1h-1zM102 169h1v1h-1zM104 169h1v1h-1zM106 169h1v1h-1zM107 24h1v1h-1zM107 26h1v1h-1zM107 51h1v1h-1zM107 81h1v1h-1zM107 110h1v1h-1zM107 140h1v1h-1zM107 166h1v1h-1zM107 168h1v1h-1zM107 169h1v1h-1zM107 170h1v1h-1zM107 172h1v1h-1zM107 199h1v1h-1zM107 228h1v1h-1zM107 258h1v1h-1zM107 287h1v1h-1zM107 315h1v1h-1zM108 169h1v1h-1zM110 169h1v1h-1zM112 169h1v1h-1zM114 169h1v1h-1zM116 169h1v1h-1zM118 169h1v1h-1zM120 169h1v1h-1zM122 169h1v1h-1zM124 169h1v1h-1zM126 169h1v1h-1zM127 24h1v1h-1zM127 26h1v1h-1zM127 27h1v1h-1zM127 33h1v1h-1zM127 39h1v1h-1zM127 45h1v1h-1zM127 51h1v1h-1zM127 57h1v1h-1zM127 63h1v1h-1zM127 69h1v1h-1zM127 75h1v1h-1zM127 81h1v1h-1zM127 86h1v1h-1zM127 92h1v1h-1zM127 98h1v1h-1zM127 104h1v1h-1zM127 110h1v1h-1zM127 116h1v1h-1zM127 122h1v1h-1zM127 128h1v1h-1zM127 134h1v1h-1zM127 140h1v1h-1zM127 145h1v1h-1zM127 151h1v1h-1zM127 157h1v1h-1zM127 163h1v1h-1zM127 166h1v1h-1zM127 168h1v1h-1zM127 169h1v1h-1zM127 170h1v1h-1zM127 172h1v1h-1zM127 175h1v1h-1zM127 181h1v1h-1zM127 187h1v1h-1zM127 193h1v1h-1zM127 199h1v1h-1zM127 204h1v1h-1zM127 210h1v1h-1zM127 216h1v1h-1zM127 222h1v1h-1zM127 228h1v1h-1zM127 234h1v1h-1zM127 240h1v1h-1zM127 246h1v1h-1zM127 252h1v1h-1zM127 258h1v1h-1zM127 263h1v1h-1zM127 269h1v1h-1zM127 275h1v1h-1zM127 281h1v1h-1zM127 287h1v1h-1zM127 293h1v1h-1zM127 299h1v1h-1zM127 305h1v1h-1zM127 311h1v1h-1zM127 315h1v1h-1zM128 169h1v1h-1zM130 169h1v1h-1zM132 169h1v1h-1zM134 169h1v1h-1zM136 169h1v1h-1zM138 169h1v1h-1zM140 169h1v1h-1zM142 169h1v1h-1zM144 169h1v1h-1zM146 169h1v1h-1zM147 24h1v1h-1zM147 26h1v1h-1zM147 51h1v1h-1zM147 81h1v1h-1zM147 110h1v1h-1zM147 140h1v1h-1zM147 166h1v1h-1zM147 168h1v1h-1zM147 169h1v1h-1zM147 170h1v1h-1zM147 172h1v1h-1zM147 199h1v1h-1zM147 228h1v1h-1zM147 258h1v1h-1zM147 287h1v1h-1zM147 315h1v1h-1zM148 169h1v1h-1zM150 169h1v1h-1zM152 169h1v1h-1zM154 169h1v1h-1zM156 169h1v1h-1zM158 169h1v1h-1zM160 169h1v1h-1zM162 169h1v1h-1zM164 169h1v1h-1zM166 24h1v1h-1zM166 26h1v1h-1zM166 51h1v1h-1zM166 81h1v1h-1zM166 110h1v1h-1zM166 140h1v1h-1zM166 166h1v1h-1zM166 168h1v1h-1zM166 169h1v1h-1zM166 170h1v1h-1zM166 172h1v1h-1zM166 199h1v1h-1zM166 228h1v1h-1zM166 258h1v1h-1zM166 287h1v1h-1zM166 315h1v1h-1zM168 169h1v1h-1zM170 169h1v1h-1zM172 169h1v1h-1zM174 169h1v1h-1zM176 169h1v1h-1zM178 169h1v1h-1zM180 169h1v1h-1zM182 169h1v1h-1zM184 169h1v1h-1zM186 24h1v1h-1zM186 26h1v1h-1zM186 51h1v1h-1zM186 81h1v1h-1zM186 110h1v1h-1zM186 140h1v1h-1zM186 166h1v1h-1zM186 168h1v1h-1zM186 169h1v1h-1zM186 170h1v1h-1zM186 172h1v1h-1zM186 199h1v1h-1zM186 228h1v1h-1zM186 258h1v1h-1zM186 287h1v1h-1zM186 315h1v1h-1zM188 169h1v1h-1zM190 169h1v1h-1zM192 169h1v1h-1zM194 169h1v1h-1zM196 169h1v1h-1zM198 169h1v1h-1zM200 169h1v1h-1zM202 169h1v1h-1zM204 169h1v1h-1zM205 24h1v1h-1zM205 26h1v1h-1zM205 51h1v1h-1zM205 81h1v1h-1zM205 110h1v1h-1zM205 140h1v1h-1zM205 166h1v1h-1zM205 168h1v1h-1zM205 169h1v1h-1zM205 170h1v1h-1zM205 172h1v1h-1zM205 199h1v1h-1zM205 228h1v1h-1zM205 258h1v1h-1zM205 287h1v1h-1zM205 315h1v1h-1zM206 169h1v1h-1zM208 169h1v1h-1zM210 169h1v1h-1zM212 169h1v1h-1zM214 169h1v1h-1zM216 169h1v1h-1zM218 169h1v1h-1zM220 169h1v1h-1zM222 169h1v1h-1zM224 169h1v1h-1zM225 24h1v1h-1zM225 26h1v1h-1zM225 27h1v1h-1zM225 33h1v1h-1zM225 39h1v1h-1zM225 45h1v1h-1zM225 51h1v1h-1zM225 57h1v1h-1zM225 63h1v1h-1zM225 69h1v1h-1zM225 75h1v1h-1zM225 81h1v1h-1zM225 86h1v1h-1zM225 92h1v1h-1zM225 98h1v1h-1zM225 104h1v1h-1zM225 110h1v1h-1zM225 116h1v1h-1zM225 122h1v1h-1zM225 128h1v1h-1zM225 134h1v1h-1zM225 140h1v1h-1zM225 145h1v1h-1zM225 151h1v1h-1zM225 157h1v1h-1zM225 163h1v1h-1zM225 166h1v1h-1zM225 168h1v1h-1zM225 169h1v1h-1zM225 170h1v1h-1zM225 172h1v1h-1zM225 175h1v1h-1zM225 181h1v1h-1zM225 187h1v1h-1zM225 193h1v1h-1zM225 199h1v1h-1zM225 204h1v1h-1zM225 210h1v1h-1zM225 216h1v1h-1zM225 222h1v1h-1zM225 228h1v1h-1zM225 234h1v1h-1zM225 240h1v1h-1zM225 246h1v1h-1zM225 252h1v1h-1zM225 258h1v1h-1zM225 263h1v1h-1zM225 269h1v1h-1zM225 275h1v1h-1zM225 281h1v1h-1zM225 287h1v1h-1zM225 293h1v1h-1zM225 299h1v1h-1zM225 305h1v1h-1zM225 311h1v1h-1zM225 315h1v1h-1zM226 169h1v1h-1zM228 169h1v1h-1zM230 169h1v1h-1zM232 169h1v1h-1zM234 169h1v1h-1zM236 169h1v1h-1zM238 169h1v1h-1zM240 169h1v1h-1zM242 169h1v1h-1zM244 169h1v1h-1zM245 24h1v1h-1zM245 26h1v1h-1zM245 51h1v1h-1zM245 81h1v1h-1zM245 110h1v1h-1zM245 140h1v1h-1zM245 166h1v1h-1zM245 168h1v1h-1zM245 169h1v1h-1zM245 170h1v1h-1zM245 172h1v1h-1zM245 199h1v1h-1zM245 228h1v1h-1zM245 258h1v1h-1zM245 287h1v1h-1zM245 315h1v1h-1zM246 169h1v1h-1zM248 169h1v1h-1zM250 169h1v1h-1zM252 169h1v1h-1zM254 169h1v1h-1zM256 169h1v1h-1zM258 169h1v1h-1zM260 169h1v1h-1zM262 169h1v1h-1zM264 24h1v1h-1zM264 26h1v1h-1zM264 51h1v1h-1zM264 81h1v1h-1zM264 110h1v1h-1zM264 140h1v1h-1zM264 166h1v1h-1zM264 168h1v1h-1zM264 169h1v1h-1zM264 170h1v1h-1zM264 172h1v1h-1zM264 199h1v1h-1zM264 228h1v1h-1zM264 258h1v1h-1zM264 287h1v1h-1zM264 315h1v1h-1zM266 169h1v1h-1zM268 169h1v1h-1zM270 169h1v1h-1zM272 169h1v1h-1zM274 169h1v1h-1zM276 169h1v1h-1zM278 169h1v1h-1zM280 169h1v1h-1zM282 169h1v1h-1zM284 24h1v1h-1zM284 26h1v1h-1zM284 51h1v1h-1zM284 81h1v1h-1zM284 110h1v1h-1zM284 140h1v1h-1zM284 166h1v1h-1zM284 168h1v1h-1zM284 169h1v1h-1zM284 170h1v1h-1zM284 172h1v1h-1zM284 199h1v1h-1zM284 228h1v1h-1zM284 258h1v1h-1zM284 287h1v1h-1zM284 315h1v1h-1zM286 169h1v1h-1zM288 169h1v1h-1zM290 169h1v1h-1zM292 169h1v1h-1zM294 169h1v1h-1zM296 169h1v1h-1zM298 169h1v1h-1zM300 169h1v1h-1zM302 169h1v1h-1zM303 24h1v1h-1zM303 26h1v1h-1zM303 51h1v1h-1zM303 81h1v1h-1zM303 110h1v1h-1zM303 140h1v1h-1zM303 166h1v1h-1zM303 168h1v1h-1zM303 169h1v1h-1zM303 170h1v1h-1zM303 172h1v1h-1zM303 199h1v1h-1zM303 228h1v1h-1zM303 258h1v1h-1zM303 287h1v1h-1zM303 315h1v1h-1zM304 169h1v1h-1zM306 169h1v1h-1zM308 169h1v1h-1zM310 169h1v1h-1zM312 169h1v1h-1zM314 169h1v1h-1zM316 169h1v1h-1zM318 169h1v1h-1zM320 169h1v1h-1zM322 169h1v1h-1zM323 24h1v1h-1zM323 26h1v1h-1zM323 27h1v1h-1zM323 33h1v1h-1zM323 39h1v1h-1zM323 45h1v1h-1zM323 51h1v1h-1zM323 57h1v1h-1zM323 63h1v1h-1zM323 69h1v1h-1zM323 75h1v1h-1zM323 81h1v1h-1zM323 86h1v1h-1zM323 92h1v1h-1zM323 98h1v1h-1zM323 104h1v1h-1zM323 110h1v1h-1zM323 116h1v1h-1zM323 122h1v1h-1zM323 128h1v1h-1zM323 134h1v1h-1zM323 140h1v1h-1zM323 145h1v1h-1zM323 151h1v1h-1zM323 157h1v1h-1zM323 163h1v1h-1zM323 166h1v1h-1zM323 168h1v1h-1zM323 169h1v1h-1zM323 170h1v1h-1zM323 172h1v1h-1zM323 175h1v1h-1zM323 181h1v1h-1zM323 187h1v1h-1zM323 193h1v1h-1zM323 199h1v1h-1zM323 204h1v1h-1zM323 210h1v1h-1zM323 216h1v1h-1zM323 222h1v1h-1zM323 228h1v1h-1zM323 234h1v1h-1zM323 240h1v1h-1zM323 246h1v1h-1zM323 252h1v1h-1zM323 258h1v1h-1zM323 263h1v1h-1zM323 269h1v1h-1zM323 275h1v1h-1zM323 281h1v1h-1zM323 287h1v1h-1zM323 293h1v1h-1zM323 299h1v1h-1zM323 305h1v1h-1zM323 311h1v1h-1zM323 315h1v1h-1zM324 169h1v1h-1zM326 169h1v1h-1zM328 169h1v1h-1zM330 169h1v1h-1zM332 169h1v1h-1zM334 169h1v1h-1zM336 169h1v1h-1zM338 169h1v1h-1zM340 169h1v1h-1zM342 169h1v1h-1zM343 24h1v1h-1zM343 26h1v1h-1zM343 51h1v1h-1zM343 81h1v1h-1zM343 110h1v1h-1zM343 140h1v1h-1zM343 166h1v1h-1zM343 168h1v1h-1zM343 169h1v1h-1zM343 170h1v1h-1zM343 172h1v1h-1zM343 199h1v1h-1zM343 228h1v1h-1zM343 258h1v1h-1zM343 287h1v1h-1zM343 315h1v1h-1zM344 169h1v1h-1zM346 169h1v1h-1zM348 169h1v1h-1zM350 169h1v1h-1zM352 169h1v1h-1zM354 169h1v1h-1zM356 169h1v1h-1zM358 169h1v1h-1zM360 169h1v1h-1zM362 24h1v1h-1zM362 26h1v1h-1zM362 51h1v1h-1zM362 81h1v1h-1zM362 110h1v1h-1zM362 140h1v1h-1zM362 166h1v1h-1zM362 168h1v1h-1zM362 169h1v1h-1zM362 170h1v1h-1zM362 172h1v1h-1zM362 199h1v1h-1zM362 228h1v1h-1zM362 258h1v1h-1zM362 287h1v1h-1zM362 315h1v1h-1zM364 169h1v1h-1zM366 169h1v1h-1zM368 169h1v1h-1zM370 169h1v1h-1zM372 169h1v1h-1zM374 169h1v1h-1zM376 169h1v1h-1zM378 169h1v1h-1zM380 169h1v1h-1zM382 24h1v1h-1zM382 26h1v1h-1zM382 51h1v1h-1zM382 81h1v1h-1zM382 110h1v1h-1zM382 140h1v1h-1zM382 166h1v1h-1zM382 168h1v1h-1zM382 169h1v1h-1zM382 170h1v1h-1zM382 172h1v1h-1zM382 199h1v1h-1zM382 228h1v1h-1zM382 258h1v1h-1zM382 287h1v1h-1zM382 315h1v1h-1zM384 169h1v1h-1zM386 169h1v1h-1zM388 169h1v1h-1zM390 169h1v1h-1zM392 169h1v1h-1zM394 169h1v1h-1zM396 169h1v1h-1zM398 169h1v1h-1zM400 169h1v1h-1zM401 24h1v1h-1zM401 26h1v1h-1zM401 51h1v1h-1zM401 81h1v1h-1zM401 110h1v1h-1zM401 140h1v1h-1zM401 166h1v1h-1zM401 168h1v1h-1zM401 169h1v1h-1zM401 170h1v1h-1zM401 172h1v1h-1zM401 199h1v1h-1zM401 228h1v1h-1zM401 258h1v1h-1zM401 287h1v1h-1zM401 315h1v1h-1zM402 169h1v1h-1zM404 169h1v1h-1zM406 169h1v1h-1zM408 169h1v1h-1zM410 169h1v1h-1zM412 169h1v1h-1zM414 169h1v1h-1zM416 169h1v1h-1zM418 169h1v1h-1zM420 169h1v1h-1zM421 24h1v1h-1zM421 26h1v1h-1zM421 27h1v1h-1zM421 33h1v1h-1zM421 39h1v1h-1zM421 45h1v1h-1zM421 51h1v1h-1zM421 57h1v1h-1zM421 63h1v1h-1zM421 69h1v1h-1zM421 75h1v1h-1zM421 81h1v1h-1zM421 86h1v1h-1zM421 92h1v1h-1zM421 98h1v1h-1zM421 104h1v1h-1zM421 110h1v1h-1zM421 116h1v1h-1zM421 122h1v1h-1zM421 128h1v1h-1zM421 134h1v1h-1zM421 140h1v1h-1zM421 145h1v1h-1zM421 151h1v1h-1zM421 157h1v1h-1zM421 163h1v1h-1zM421 166h1v1h-1zM421 168h1v1h-1zM421 169h1v1h-1zM421 170h1v1h-1zM421 172h1v1h-1zM421 175h1v1h-1zM421 181h1v1h-1zM421 187h1v1h-1zM421 193h1v1h-1zM421 199h1v1h-1zM421 204h1v1h-1zM421 210h1v1h-1zM421 216h1v1h-1zM421 222h1v1h-1zM421 228h1v1h-1zM421 234h1v1h-1zM421 240h1v1h-1zM421 246h1v1h-1zM421 252h1v1h-1zM421 258h1v1h-1zM421 263h1v1h-1zM421 269h1v1h-1zM421 275h1v1h-1zM421 281h1v1h-1zM421 287h1v1h-1zM421 293h1v1h-1zM421 299h1v1h-1zM421 305h1v1h-1zM421 311h1v1h-1zM421 315h1v1h-1zM422 169h1v1h-1zM424 169h1v1h-1zM426 169h1v1h-1zM428 169h1v1h-1zM430 169h1v1h-1zM432 169h1v1h-1zM434 169h1v1h-1zM436 169h1v1h-1zM438 169h1v1h-1zM440 169h1v1h-1zM441 24h1v1h-1zM441 26h1v1h-1zM441 51h1v1h-1zM441 81h1v1h-1zM441 110h1v1h-1zM441 140h1v1h-1zM441 166h1v1h-1zM441 168h1v1h-1zM441 169h1v1h-1zM441 170h1v1h-1zM441 172h1v1h-1zM441 199h1v1h-1zM441 228h1v1h-1zM441 258h1v1h-1zM441 287h1v1h-1zM441 315h1v1h-1zM442 169h1v1h-1zM444 169h1v1h-1zM446 169h1v1h-1zM448 169h1v1h-1zM450 169h1v1h-1zM452 169h1v1h-1zM454 169h1v1h-1zM456 169h1v1h-1zM458 169h1v1h-1zM460 24h1v1h-1zM460 26h1v1h-1zM460 51h1v1h-1zM460 81h1v1h-1zM460 110h1v1h-1zM460 140h1v1h-1zM460 166h1v1h-1zM460 168h1v1h-1zM460 169h1v1h-1zM460 170h1v1h-1zM460 172h1v1h-1zM460 199h1v1h-1zM460 228h1v1h-1zM460 258h1v1h-1zM460 287h1v1h-1zM460 315h1v1h-1zM462 169h1v1h-1zM464 169h1v1h-1zM466 169h1v1h-1zM468 169h1v1h-1zM470 169h1v1h-1zM472 169h1v1h-1zM474 169h1v1h-1zM476 169h1v1h-1zM478 169h1v1h-1zM480 24h1v1h-1zM480 26h1v1h-1zM480 51h1v1h-1zM480 81h1v1h-1zM480 110h1v1h-1zM480 140h1v1h-1zM480 166h1v1h-1zM480 168h1v1h-1zM480 169h1v1h-1zM480 170h1v1h-1zM480 172h1v1h-1zM480 199h1v1h-1zM480 228h1v1h-1zM480 258h1v1h-1zM480 287h1v1h-1zM480 315h1v1h-1zM482 169h1v1h-1zM484 169h1v1h-1zM486 169h1v1h-1zM488 169h1v1h-1zM490 169h1v1h-1zM492 169h1v1h-1zM494 169h1v1h-1zM496 169h1v1h-1zM498 169h1v1h-1zM499 24h1v1h-1zM499 26h1v1h-1zM499 51h1v1h-1zM499 81h1v1h-1zM499 110h1v1h-1zM499 140h1v1h-1zM499 166h1v1h-1zM499 168h1v1h-1zM499 169h1v1h-1zM499 170h1v1h-1zM499 172h1v1h-1zM499 199h1v1h-1zM499 228h1v1h-1zM499 258h1v1h-1zM499 287h1v1h-1zM499 315h1v1h-1zM500 169h1v1h-1zM502 169h1v1h-1zM504 169h1v1h-1zM506 169h1v1h-1zM508 169h1v1h-1zM510 169h1v1h-1zM512 169h1v1h-1zM514 169h1v1h-1zM516 27h1v1h-1zM516 33h1v1h-1zM516 39h1v1h-1zM516 45h1v1h-1zM516 51h1v1h-1zM516 57h1v1h-1zM516 63h1v1h-1zM516 69h1v1h-1zM516 75h1v1h-1zM516 81h1v1h-1zM516 86h1v1h-1zM516 92h1v1h-1zM516 98h1v1h-1zM516 104h1v1h-1zM516 110h1v1h-1zM516 116h1v1h-1zM516 122h1v1h-1zM516 128h1v1h-1zM516 134h1v1h-1zM516 140h1v1h-1zM516 145h1v1h-1zM516 151h1v1h-1zM516 157h1v1h-1zM516 163h1v1h-1zM516 169h1v1h-1zM516 175h1v1h-1zM516 181h1v1h-1zM516 187h1v1h-1zM516 193h1v1h-1zM516 199h1v1h-1zM516 204h1v1h-1zM516 210h1v1h-1zM516 216h1v1h-1zM516 222h1v1h-1zM516 228h1v1h-1zM516 234h1v1h-1zM516 240h1v1h-1zM516 246h1v1h-1zM516 252h1v1h-1zM516 258h1v1h-1zM516 263h1v1h-1zM516 269h1v1h-1zM516 275h1v1h-1zM516 281h1v1h-1zM516 287h1v1h-1zM516 293h1v1h-1zM516 299h1v1h-1zM516 305h1v1h-1zM516 311h1v1h-1zM518 27h1v1h-1zM518 33h1v1h-1zM518 39h1v1h-1zM518 45h1v1h-1zM518 51h1v1h-1zM518 57h1v1h-1zM518 63h1v1h-1zM518 69h1v1h-1zM518 75h1v1h-1zM518 81h1v1h-1zM518 86h1v1h-1zM518 92h1v1h-1zM518 98h1v1h-1zM518 104h1v1h-1zM518 110h1v1h-1zM518 116h1v1h-1zM518 122h1v1h-1zM518 128h1v1h-1zM518 134h1v1h-1zM518 140h1v1h-1zM518 145h1v1h-1zM518 151h1v1h-1zM518 157h1v1h-1zM518 163h1v1h-1zM518 169h1v1h-1zM518 175h1v1h-1zM518 181h1v1h-1zM518 187h1v1h-1zM518 193h1v1h-1zM518 199h1v1h-1zM518 204h1v1h-1zM518 210h1v1h-1zM518 216h1v1h-1zM518 222h1v1h-1zM518 228h1v1h-1zM518 234h1v1h-1zM518 240h1v1h-1zM518 246h1v1h-1zM518 252h1v1h-1zM518 258h1v1h-1zM518 263h1v1h-1zM518 269h1v1h-1zM518 275h1v1h-1zM518 281h1v1h-1zM518 287h1v1h-1zM518 293h1v1h-1zM518 299h1v1h-1zM518 305h1v1h-1zM518 311h1v1h-1zM519 24h1v1h-1zM519 26h1v1h-1zM519 27h1v1h-1zM519 28h1v1h-1zM519 30h1v1h-1zM519 32h1v1h-1zM519 33h1v1h-1zM519 34h1v1h-1zM519 36h1v1h-1zM519 38h1v1h-1zM519 39h1v1h-1zM519 40h1v1h-1zM519 42h1v1h-1zM519 44h1v1h-1zM519 45h1v1h-1zM519 46h1v1h-1zM519 48h1v1h-1zM519 50h1v1h-1zM519 51h1v1h-1zM519 52h1v1h-1zM519 54h1v1h-1zM519 56h1v1h-1zM519 57h1v1h-1zM519 58h1v1h-1zM519 60h1v1h-1zM519 62h1v1h-1zM519 63h1v1h-1zM519 64h1v1h-1zM519 66h1v1h-1zM519 68h1v1h-1zM519 69h1v1h-1zM519 70h1v1h-1zM519 72h1v1h-1zM519 74h1v1h-1zM519 75h1v1h-1zM519 76h1v1h-1zM519 78h1v1h-1zM519 80h1v1h-1zM519 81h1v1h-1zM519 82h1v1h-1zM519 84h1v1h-1zM519 85h1v1h-1zM519 86h1v1h-1zM519 87h1v1h-1zM519 88h1v1h-1zM519 90h1v1h-1zM519 91h1v1h-1zM519 92h1v1h-1zM519 93h1v1h-1zM519 94h1v1h-1zM519 96h1v1h-1zM519 97h1v1h-1zM519 98h1v1h-1zM519 99h1v1h-1zM519 100h1v1h-1zM519 102h1v1h-1zM519 103h1v1h-1zM519 104h1v1h-1zM519 105h1v1h-1zM519 106h1v1h-1zM519 108h1v1h-1zM519 109h1v1h-1zM519 110h1v1h-1zM519 111h1v1h-1zM519 112h1v1h-1zM519 114h1v1h-1zM519 115h1v1h-1zM519 116h1v1h-1zM519 117h1v1h-1zM519 118h1v1h-1zM519 120h1v1h-1zM519 121h1v1h-1zM519 122h1v1h-1zM519 123h1v1h-1zM519 124h1v1h-1zM519 126h1v1h-1zM519 127h1v1h-1zM519 128h1v1h-1zM519 129h1v1h-1zM519 130h1v1h-1zM519 132h1v1h-1zM519 133h1v1h-1zM519 134h1v1h-1zM519 135h1v1h-1zM519 136h1v1h-1zM519 138h1v1h-1zM519 139h1v1h-1zM519 140h1v1h-1zM519 141h1v1h-1zM519 142h1v1h-1zM519 144h1v1h-1zM519 145h1v1h-1zM519 146h1v1h-1zM519 148h1v1h-1zM519 150h1v1h-1zM519 151h1v1h-1zM519 152h1v1h-1zM519 154h1v1h-1zM519 156h1v1h-1zM519 157h1v1h-1zM519 158h1v1h-1zM519 160h1v1h-1zM519 162h1v1h-1zM519 163h1v1h-1zM519 164h1v1h-1zM519 166h1v1h-1zM519 168h1v1h-1zM519 169h1v1h-1zM519 170h1v1h-1zM519 172h1v1h-1zM519 174h1v1h-1zM519 175h1v1h-1zM519 176h1v1h-1zM519 178h1v1h-1zM519 180h1v1h-1zM519 181h1v1h-1zM519 182h1v1h-1zM519 184h1v1h-1zM519 186h1v1h-1zM519 187h1v1h-1zM519 188h1v1h-1zM519 190h1v1h-1zM519 192h1v1h-1zM519 193h1v1h-1zM519 194h1v1h-1zM519 196h1v1h-1zM519 198h1v1h-1zM519 199h1v1h-1zM519 200h1v1h-1zM519 202h1v1h-1zM519 203h1v1h-1zM519 204h1v1h-1zM519 205h1v1h-1zM519 206h1v1h-1zM519 208h1v1h-1zM519 209h1v1h-1zM519 210h1v1h-1zM519 211h1v1h-1zM519 212h1v1h-1zM519 214h1v1h-1zM519 215h1v1h-1zM519 216h1v1h-1zM519 217h1v1h-1zM519 218h1v1h-1zM519 220h1v1h-1zM519 221h1v1h-1zM519 222h1v1h-1zM519 223h1v1h-1zM519 224h1v1h-1zM519 226h1v1h-1zM519 227h1v1h-1zM519 228h1v1h-1zM519 229h1v1h-1zM519 230h1v1h-1zM519 232h1v1h-1zM519 233h1v1h-1zM519 234h1v1h-1zM519 235h1v1h-1zM519 236h1v1h-1zM519 238h1v1h-1zM519 239h1v1h-1zM519 240h1v1h-1zM519 241h1v1h-1zM519 242h1v1h-1zM519 244h1v1h-1zM519 245h1v1h-1zM519 246h1v1h-1zM519 247h1v1h-1zM519 248h1v1h-1zM519 250h1v1h-1zM519 251h1v1h-1zM519 252h1v1h-1zM519 253h1v1h-1zM519 254h1v1h-1zM519 256h1v1h-1zM519 257h1v1h-1zM519 258h1v1h-1zM519 259h1v1h-1zM519 260h1v1h-1zM519 262h1v1h-1zM519 263h1v1h-1zM519 264h1v1h-1zM519 266h1v1h-1zM519 268h1v1h-1zM519 269h1v1h-1zM519 270h1v1h-1zM519 272h1v1h-1zM519 274h1v1h-1zM519 275h1v1h-1zM519 276h1v1h-1zM519 278h1v1h-1zM519 280h1v1h-1zM519 281h1v1h-1zM519 282h1v1h-1zM519 284h1v1h-1zM519 286h1v1h-1zM519 287h1v1h-1zM519 288h1v1h-1zM519 290h1v1h-1zM519 292h1v1h-1zM519 293h1v1h-1zM519 294h1v1h-1zM519 296h1v1h-1zM519 298h1v1h-1zM519 299h1v1h-1zM519 300h1v1h-1zM519 302h1v1h-1zM519 304h1v1h-1zM519 305h1v1h-1zM519 306h1v1h-1zM519 308h1v1h-1zM519 310h1v1h-1zM519 311h1v1h-1zM519 312h1v1h-1zM519 314h1v1h-1zM519 316h1v1h-1zM520 27h1v1h-1zM520 33h1v1h-1zM520 39h1v1h-1zM520 45h1v1h-1zM520 51h1v1h-1zM520 57h1v1h-1zM520 63h1v1h-1zM520 69h1v1h-1zM520 75h1v1h-1zM520 81h1v1h-1zM520 86h1v1h-1zM520 92h1v1h-1zM520 98h1v1h-1zM520 104h1v1h-1zM520 110h1v1h-1zM520 116h1v1h-1zM520 122h1v1h-1zM520 128h1v1h-1zM520 134h1v1h-1zM520 140h1v1h-1zM520 145h1v1h-1zM520 151h1v1h-1zM520 157h1v1h-1zM520 163h1v1h-1zM520 169h1v1h-1zM520 175h1v1h-1zM520 181h1v1h-1zM520 187h1v1h-1zM520 193h1v1h-1zM520 199h1v1h-1zM520 204h1v1h-1zM520 210h1v1h-1zM520 216h1v1h-1zM520 222h1v1h-1zM520 228h1v1h-1zM520 234h1v1h-1zM520 240h1v1h-1zM520 246h1v1h-1zM520 252h1v1h-1zM520 258h1v1h-1zM520 263h1v1h-1zM520 269h1v1h-1zM520 275h1v1h-1zM520 281h1v1h-1zM520 287h1v1h-1zM520 293h1v1h-1zM520 299h1v1h-1zM520 305h1v1h-1zM520 311h1v1h-1zM522 27h1v1h-1zM522 33h1v1h-1zM522 39h1v1h-1zM522 45h1v1h-1zM522 51h1v1h-1zM522 57h1v1h-1zM522 63h1v1h-1zM522 69h1v1h-1zM522 75h1v1h-1zM522 81h1v1h-1zM522 86h1v1h-1zM522 92h1v1h-1zM522 98h1v1h-1zM522 104h1v1h-1zM522 110h1v1h-1zM522 116h1v1h-1zM522 122h1v1h-1zM522 128h1v1h-1zM522 134h1v1h-1zM522 140h1v1h-1zM522 145h1v1h-1zM522 151h1v1h-1zM522 157h1v1h-1zM522 163h1v1h-1zM522 169h1v1h-1zM522 175h1v1h-1zM522 181h1v1h-1zM522 187h1v1h-1zM522 193h1v1h-1zM522 199h1v1h-1zM522 204h1v1h-1zM522 210h1v1h-1zM522 216h1v1h-1zM522 222h1v1h-1zM522 228h1v1h-1zM522 234h1v1h-1zM522 240h1v1h-1zM522 246h1v1h-1zM522 252h1v1h-1zM522 258h1v1h-1zM522 263h1v1h-1zM522 269h1v1h-1zM522 275h1v1h-1zM522 281h1v1h-1zM522 287h1v1h-1zM522 293h1v1h-1zM522 299h1v1h-1zM522 305h1v1h-1zM522 311h1v1h-1zM524 169h1v1h-1zM526 169h1v1h-1zM528 169h1v1h-1zM530 169h1v1h-1zM532 169h1v1h-1zM534 169h1v1h-1zM536 169h1v1h-1zM538 169h1v1h-1zM539 24h1v1h-1zM539 26h1v1h-1zM539 51h1v1h-1zM539 81h1v1h-1zM539 110h1v1h-1zM539 140h1v1h-1zM539 166h1v1h-1zM539 168h1v1h-1zM539 169h1v1h-1zM539 170h1v1h-1zM539 172h1v1h-1zM539 199h1v1h-1zM539 228h1v1h-1zM539 258h1v1h-1zM539 287h1v1h-1zM539 315h1v1h-1zM540 169h1v1h-1zM542 169h1v1h-1zM544 169h1v1h-1zM546 169h1v1h-1zM548 169h1v1h-1zM550 169h1v1h-1zM552 169h1v1h-1zM554 169h1v1h-1zM556 169h1v1h-1zM558 24h1v1h-1zM558 26h1v1h-1zM558 51h1v1h-1zM558 81h1v1h-1zM558 110h1v1h-1zM558 140h1v1h-1zM558 166h1v1h-1zM558 168h1v1h-1zM558 169h1v1h-1zM558 170h1v1h-1zM558 172h1v1h-1zM558 199h1v1h-1zM558 228h1v1h-1zM558 258h1v1h-1zM558 287h1v1h-1zM558 315h1v1h-1zM560 169h1v1h-1zM562 169h1v1h-1zM564 169h1v1h-1zM566 169h1v1h-1zM568 169h1v1h-1zM570 169h1v1h-1zM572 169h1v1h-1zM574 169h1v1h-1zM576 169h1v1h-1zM578 24h1v1h-1zM578 26h1v1h-1zM578 51h1v1h-1zM578 81h1v1h-1zM578 110h1v1h-1zM578 140h1v1h-1zM578 166h1v1h-1zM578 168h1v1h-1zM578 169h1v1h-1zM578 170h1v1h-1zM578 172h1v1h-1zM578 199h1v1h-1zM578 228h1v1h-1zM578 258h1v1h-1zM578 287h1v1h-1zM578 315h1v1h-1zM580 169h1v1h-1zM582 169h1v1h-1zM584 169h1v1h-1zM586 169h1v1h-1zM588 169h1v1h-1zM590 169h1v1h-1zM592 169h1v1h-1zM594 169h1v1h-1zM596 169h1v1h-1zM597 24h1v1h-1zM597 26h1v1h-1zM597 51h1v1h-1zM597 81h1v1h-1zM597 110h1v1h-1zM597 140h1v1h-1zM597 166h1v1h-1zM597 168h1v1h-1zM597 169h1v1h-1zM597 170h1v1h-1zM597 172h1v1h-1zM597 199h1v1h-1zM597 228h1v1h-1zM597 258h1v1h-1zM597 287h1v1h-1zM597 315h1v1h-1zM598 169h1v1h-1zM600 169h1v1h-1zM602 169h1v1h-1zM604 169h1v1h-1zM606 169h1v1h-1zM608 169h1v1h-1zM610 169h1v1h-1zM612 169h1v1h-1zM614 169h1v1h-1zM616 169h1v1h-1zM617 24h1v1h-1zM617 26h1v1h-1zM617 27h1v1h-1zM617 33h1v1h-1zM617 39h1v1h-1zM617 45h1v1h-1zM617 51h1v1h-1zM617 57h1v1h-1zM617 63h1v1h-1zM617 69h1v1h-1zM617 75h1v1h-1zM617 81h1v1h-1zM617 86h1v1h-1zM617 92h1v1h-1zM617 98h1v1h-1zM617 104h1v1h-1zM617 110h1v1h-1zM617 116h1v1h-1zM617 122h1v1h-1zM617 128h1v1h-1zM617 134h1v1h-1zM617 140h1v1h-1zM617 145h1v1h-1zM617 151h1v1h-1zM617 157h1v1h-1zM617 163h1v1h-1zM617 166h1v1h-1zM617 168h1v1h-1zM617 169h1v1h-1zM617 170h1v1h-1zM617 172h1v1h-1zM617 175h1v1h-1zM617 181h1v1h-1zM617 187h1v1h-1zM617 193h1v1h-1zM617 199h1v1h-1zM617 204h1v1h-1zM617 210h1v1h-1zM617 216h1v1h-1zM617 222h1v1h-1zM617 228h1v1h-1zM617 234h1v1h-1zM617 240h1v1h-1zM617 246h1v1h-1zM617 252h1v1h-1zM617 258h1v1h-1zM617 263h1v1h-1zM617 269h1v1h-1zM617 275h1v1h-1zM617 281h1v1h-1zM617 287h1v1h-1zM617 293h1v1h-1zM617 299h1v1h-1zM617 305h1v1h-1zM617 311h1v1h-1zM617 315h1v1h-1zM618 169h1v1h-1zM620 169h1v1h-1zM622 169h1v1h-1zM624 169h1v1h-1zM626 169h1v1h-1zM628 169h1v1h-1zM630 169h1v1h-1zM632 169h1v1h-1zM634 169h1v1h-1zM636 169h1v1h-1zM637 24h1v1h-1zM637 26h1v1h-1zM637 51h1v1h-1zM637 81h1v1h-1zM637 110h1v1h-1zM637 140h1v1h-1zM637 166h1v1h-1zM637 168h1v1h-1zM637 169h1v1h-1zM637 170h1v1h-1zM637 172h1v1h-1zM637 199h1v1h-1zM637 228h1v1h-1zM637 258h1v1h-1zM637 287h1v1h-1zM637 315h1v1h-1zM638 169h1v1h-1zM640 169h1v1h-1zM642 169h1v1h-1zM644 169h1v1h-1zM646 169h1v1h-1zM648 169h1v1h-1zM650 169h1v1h-1zM652 169h1v1h-1zM654 169h1v1h-1zM656 24h1v1h-1zM656 26h1v1h-1zM656 51h1v1h-1zM656 81h1v1h-1zM656 110h1v1h-1zM656 140h1v1h-1zM656 166h1v1h-1zM656 168h1v1h-1zM656 169h1v1h-1zM656 170h1v1h-1zM656 172h1v1h-1zM656 199h1v1h-1zM656 228h1v1h-1zM656 258h1v1h-1zM656 287h1v1h-1zM656 315h1v1h-1zM658 169h1v1h-1zM660 169h1v1h-1zM662 169h1v1h-1zM664 169h1v1h-1zM666 169h1v1h-1zM668 169h1v1h-1zM670 169h1v1h-1zM672 169h1v1h-1zM674 169h1v1h-1zM676 24h1v1h-1zM676 26h1v1h-1zM676 51h1v1h-1zM676 81h1v1h-1zM676 110h1v1h-1zM676 140h1v1h-1zM676 166h1v1h-1zM676 168h1v1h-1zM676 169h1v1h-1zM676 170h1v1h-1zM676 172h1v1h-1zM676 199h1v1h-1zM676 228h1v1h-1zM676 258h1v1h-1zM676 287h1v1h-1zM676 315h1v1h-1zM678 169h1v1h-1zM680 169h1v1h-1zM682 169h1v1h-1zM684 169h1v1h-1zM686 169h1v1h-1zM688 169h1v1h-1zM690 169h1v1h-1zM692 169h1v1h-1zM694 169h1v1h-1zM695 24h1v1h-1zM695 26h1v1h-1zM695 51h1v1h-1zM695 81h1v1h-1zM695 110h1v1h-1zM695 140h1v1h-1zM695 166h1v1h-1zM695 168h1v1h-1zM695 169h1v1h-1zM695 170h1v1h-1zM695 172h1v1h-1zM695 199h1v1h-1zM695 228h1v1h-1zM695 258h1v1h-1zM695 287h1v1h-1zM695 315h1v1h-1zM696 169h1v1h-1zM698 169h1v1h-1zM700 169h1v1h-1zM702 169h1v1h-1zM704 169h1v1h-1zM706 169h1v1h-1zM708 169h1v1h-1zM710 169h1v1h-1zM712 169h1v1h-1zM714 169h1v1h-1zM715 24h1v1h-1zM715 26h1v1h-1zM715 27h1v1h-1zM715 33h1v1h-1zM715 39h1v1h-1zM715 45h1v1h-1zM715 51h1v1h-1zM715 57h1v1h-1zM715 63h1v1h-1zM715 69h1v1h-1zM715 75h1v1h-1zM715 81h1v1h-1zM715 86h1v1h-1zM715 92h1v1h-1zM715 98h1v1h-1zM715 104h1v1h-1zM715 110h1v1h-1zM715 116h1v1h-1zM715 122h1v1h-1zM715 128h1v1h-1zM715 134h1v1h-1zM715 140h1v1h-1zM715 145h1v1h-1zM715 151h1v1h-1zM715 157h1v1h-1zM715 163h1v1h-1zM715 166h1v1h-1zM715 168h1v1h-1zM715 169h1v1h-1zM715 170h1v1h-1zM715 172h1v1h-1zM715 175h1v1h-1zM715 181h1v1h-1zM715 187h1v1h-1zM715 193h1v1h-1zM715 199h1v1h-1zM715 204h1v1h-1zM715 210h1v1h-1zM715 216h1v1h-1zM715 222h1v1h-1zM715 228h1v1h-1zM715 234h1v1h-1zM715 240h1v1h-1zM715 246h1v1h-1zM715 252h1v1h-1zM715 258h1v1h-1zM715 263h1v1h-1zM715 269h1v1h-1zM715 275h1v1h-1zM715 281h1v1h-1zM715 287h1v1h-1zM715 293h1v1h-1zM715 299h1v1h-1zM715 305h1v1h-1zM715 311h1v1h-1zM715 315h1v1h-1zM716 169h1v1h-1zM718 169h1v1h-1zM720 169h1v1h-1zM722 169h1v1h-1zM724 169h1v1h-1zM726 169h1v1h-1zM728 169h1v1h-1zM730 169h1v1h-1zM732 169h1v1h-1zM734 169h1v1h-1zM735 24h1v1h-1zM735 26h1v1h-1zM735 51h1v1h-1zM735 81h1v1h-1zM735 110h1v1h-1zM735 140h1v1h-1zM735 166h1v1h-1zM735 168h1v1h-1zM735 169h1v1h-1zM735 170h1v1h-1zM735 172h1v1h-1zM735 199h1v1h-1zM735 228h1v1h-1zM735 258h1v1h-1zM735 287h1v1h-1zM735 315h1v1h-1zM736 169h1v1h-1zM738 169h1v1h-1zM740 169h1v1h-1zM742 169h1v1h-1zM744 169h1v1h-1zM746 169h1v1h-1zM748 169h1v1h-1zM750 169h1v1h-1zM752 169h1v1h-1zM754 24h1v1h-1zM754 26h1v1h-1zM754 51h1v1h-1zM754 81h1v1h-1zM754 110h1v1h-1zM754 140h1v1h-1zM754 166h1v1h-1zM754 168h1v1h-1zM754 169h1v1h-1zM754 170h1v1h-1zM754 172h1v1h-1zM754 199h1v1h-1zM754 228h1v1h-1zM754 258h1v1h-1zM754 287h1v1h-1zM754 315h1v1h-1zM756 169h1v1h-1zM758 169h1v1h-1zM760 169h1v1h-1zM762 169h1v1h-1zM764 169h1v1h-1zM766 169h1v1h-1zM768 169h1v1h-1zM770 169h1v1h-1zM772 169h1v1h-1zM774 24h1v1h-1zM774 26h1v1h-1zM774 51h1v1h-1zM774 81h1v1h-1zM774 110h1v1h-1zM774 140h1v1h-1zM774 166h1v1h-1zM774 168h1v1h-1zM774 169h1v1h-1zM774 170h1v1h-1zM774 172h1v1h-1zM774 199h1v1h-1zM774 228h1v1h-1zM774 258h1v1h-1zM774 287h1v1h-1zM774 315h1v1h-1zM776 169h1v1h-1zM778 169h1v1h-1zM780 169h1v1h-1zM782 169h1v1h-1zM784 169h1v1h-1zM786 169h1v1h-1zM788 169h1v1h-1zM790 169h1v1h-1zM792 169h1v1h-1zM793 24h1v1h-1zM793 26h1v1h-1zM793 51h1v1h-1zM793 81h1v1h-1zM793 110h1v1h-1zM793 140h1v1h-1zM793 166h1v1h-1zM793 168h1v1h-1zM793 169h1v1h-1zM793 170h1v1h-1zM793 172h1v1h-1zM793 199h1v1h-1zM793 228h1v1h-1zM793 258h1v1h-1zM793 287h1v1h-1zM793 315h1v1h-1zM794 169h1v1h-1zM796 169h1v1h-1zM798 169h1v1h-1zM800 169h1v1h-1zM802 169h1v1h-1zM804 169h1v1h-1zM806 169h1v1h-1zM808 169h1v1h-1zM810 169h1v1h-1zM812 169h1v1h-1zM813 24h1v1h-1zM813 26h1v1h-1zM813 27h1v1h-1zM813 33h1v1h-1zM813 39h1v1h-1zM813 45h1v1h-1zM813 51h1v1h-1zM813 57h1v1h-1zM813 63h1v1h-1zM813 69h1v1h-1zM813 75h1v1h-1zM813 81h1v1h-1zM813 86h1v1h-1zM813 92h1v1h-1zM813 98h1v1h-1zM813 104h1v1h-1zM813 110h1v1h-1zM813 116h1v1h-1zM813 122h1v1h-1zM813 128h1v1h-1zM813 134h1v1h-1zM813 140h1v1h-1zM813 145h1v1h-1zM813 151h1v1h-1zM813 157h1v1h-1zM813 163h1v1h-1zM813 166h1v1h-1zM813 168h1v1h-1zM813 169h1v1h-1zM813 170h1v1h-1zM813 172h1v1h-1zM813 175h1v1h-1zM813 181h1v1h-1zM813 187h1v1h-1zM813 193h1v1h-1zM813 199h1v1h-1zM813 204h1v1h-1zM813 210h1v1h-1zM813 216h1v1h-1zM813 222h1v1h-1zM813 228h1v1h-1zM813 234h1v1h-1zM813 240h1v1h-1zM813 246h1v1h-1zM813 252h1v1h-1zM813 258h1v1h-1zM813 263h1v1h-1zM813 269h1v1h-1zM813 275h1v1h-1zM813 281h1v1h-1zM813 287h1v1h-1zM813 293h1v1h-1zM813 299h1v1h-1zM813 305h1v1h-1zM813 311h1v1h-1zM813 315h1v1h-1zM814 169h1v1h-1zM816 169h1v1h-1zM818 169h1v1h-1zM820 169h1v1h-1zM822 169h1v1h-1zM824 169h1v1h-1zM826 169h1v1h-1zM828 169h1v1h-1zM830 169h1v1h-1zM832 169h1v1h-1zM833 24h1v1h-1zM833 26h1v1h-1zM833 51h1v1h-1zM833 81h1v1h-1zM833 110h1v1h-1zM833 140h1v1h-1zM833 166h1v1h-1zM833 168h1v1h-1zM833 169h1v1h-1zM833 170h1v1h-1zM833 172h1v1h-1zM833 199h1v1h-1zM833 228h1v1h-1zM833 258h1v1h-1zM833 287h1v1h-1zM833 315h1v1h-1zM834 169h1v1h-1zM836 169h1v1h-1zM838 169h1v1h-1zM840 169h1v1h-1zM842 169h1v1h-1zM844 169h1v1h-1zM846 169h1v1h-1zM848 169h1v1h-1zM850 169h1v1h-1zM852 24h1v1h-1zM852 26h1v1h-1zM852 51h1v1h-1zM852 81h1v1h-1zM852 110h1v1h-1zM852 140h1v1h-1zM852 166h1v1h-1zM852 168h1v1h-1zM852 169h1v1h-1zM852 170h1v1h-1zM852 172h1v1h-1zM852 199h1v1h-1zM852 228h1v1h-1zM852 258h1v1h-1zM852 287h1v1h-1zM852 315h1v1h-1zM854 169h1v1h-1zM856 169h1v1h-1zM858 169h1v1h-1zM860 169h1v1h-1zM862 169h1v1h-1zM864 169h1v1h-1zM866 169h1v1h-1zM868 169h1v1h-1zM870 169h1v1h-1zM872 24h1v1h-1zM872 26h1v1h-1zM872 51h1v1h-1zM872 81h1v1h-1zM872 110h1v1h-1zM872 140h1v1h-1zM872 166h1v1h-1zM872 168h1v1h-1zM872 169h1v1h-1zM872 170h1v1h-1zM872 172h1v1h-1zM872 199h1v1h-1zM872 228h1v1h-1zM872 258h1v1h-1zM872 287h1v1h-1zM872 315h1v1h-1zM874 169h1v1h-1zM876 169h1v1h-1zM878 169h1v1h-1zM880 169h1v1h-1zM882 169h1v1h-1zM884 169h1v1h-1zM886 169h1v1h-1zM888 169h1v1h-1zM890 169h1v1h-1zM891 24h1v1h-1zM891 26h1v1h-1zM891 51h1v1h-1zM891 81h1v1h-1zM891 110h1v1h-1zM891 140h1v1h-1zM891 166h1v1h-1zM891 168h1v1h-1zM891 169h1v1h-1zM891 170h1v1h-1zM891 172h1v1h-1zM891 199h1v1h-1zM891 228h1v1h-1zM891 258h1v1h-1zM891 287h1v1h-1zM891 315h1v1h-1zM892 169h1v1h-1zM894 169h1v1h-1zM896 169h1v1h-1zM898 169h1v1h-1zM900 169h1v1h-1zM902 169h1v1h-1zM904 169h1v1h-1zM906 169h1v1h-1zM908 169h1v1h-1zM910 169h1v1h-1zM911 24h1v1h-1zM911 26h1v1h-1zM911 27h1v1h-1zM911 33h1v1h-1zM911 39h1v1h-1zM911 45h1v1h-1zM911 51h1v1h-1zM911 57h1v1h-1zM911 63h1v1h-1zM911 69h1v1h-1zM911 75h1v1h-1zM911 81h1v1h-1zM911 86h1v1h-1zM911 92h1v1h-1zM911 98h1v1h-1zM911 104h1v1h-1zM911 110h1v1h-1zM911 116h1v1h-1zM911 122h1v1h-1zM911 128h1v1h-1zM911 134h1v1h-1zM911 140h1v1h-1zM911 145h1v1h-1zM911 151h1v1h-1zM911 157h1v1h-1zM911 163h1v1h-1zM911 166h1v1h-1zM911 168h1v1h-1zM911 169h1v1h-1zM911 170h1v1h-1zM911 172h1v1h-1zM911 175h1v1h-1zM911 181h1v1h-1zM911 187h1v1h-1zM911 193h1v1h-1zM911 199h1v1h-1zM911 204h1v1h-1zM911 210h1v1h-1zM911 216h1v1h-1zM911 222h1v1h-1zM911 228h1v1h-1zM911 234h1v1h-1zM911 240h1v1h-1zM911 246h1v1h-1zM911 252h1v1h-1zM911 258h1v1h-1zM911 263h1v1h-1zM911 269h1v1h-1zM911 275h1v1h-1zM911 281h1v1h-1zM911 287h1v1h-1zM911 293h1v1h-1zM911 299h1v1h-1zM911 305h1v1h-1zM911 311h1v1h-1zM911 315h1v1h-1zM912 169h1v1h-1zM914 169h1v1h-1zM916 169h1v1h-1zM918 169h1v1h-1zM920 169h1v1h-1zM922 169h1v1h-1zM924 169h1v1h-1zM926 169h1v1h-1zM928 169h1v1h-1zM930 169h1v1h-1zM931 24h1v1h-1zM931 26h1v1h-1zM931 51h1v1h-1zM931 81h1v1h-1zM931 110h1v1h-1zM931 140h1v1h-1zM931 166h1v1h-1zM931 168h1v1h-1zM931 169h1v1h-1zM931 170h1v1h-1zM931 172h1v1h-1zM931 199h1v1h-1zM931 228h1v1h-1zM931 258h1v1h-1zM931 287h1v1h-1zM931 315h1v1h-1zM932 169h1v1h-1zM934 169h1v1h-1zM936 169h1v1h-1zM938 169h1v1h-1zM940 169h1v1h-1zM942 169h1v1h-1zM944 169h1v1h-1zM946 169h1v1h-1zM948 169h1v1h-1zM950 24h1v1h-1zM950 26h1v1h-1zM950 51h1v1h-1zM950 81h1v1h-1zM950 110h1v1h-1zM950 140h1v1h-1zM950 166h1v1h-1zM950 168h1v1h-1zM950 169h1v1h-1zM950 170h1v1h-1zM950 172h1v1h-1zM950 199h1v1h-1zM950 228h1v1h-1zM950 258h1v1h-1zM950 287h1v1h-1zM950 315h1v1h-1zM952 169h1v1h-1zM954 169h1v1h-1zM956 169h1v1h-1zM958 169h1v1h-1zM960 169h1v1h-1zM962 169h1v1h-1zM964 169h1v1h-1zM966 169h1v1h-1zM968 169h1v1h-1zM970 24h1v1h-1zM970 26h1v1h-1zM970 51h1v1h-1zM970 81h1v1h-1zM970 110h1v1h-1zM970 140h1v1h-1zM970 166h1v1h-1zM970 168h1v1h-1zM970 169h1v1h-1zM970 170h1v1h-1zM970 172h1v1h-1zM970 199h1v1h-1zM970 228h1v1h-1zM970 258h1v1h-1zM970 287h1v1h-1zM970 315h1v1h-1zM972 169h1v1h-1zM974 169h1v1h-1zM976 169h1v1h-1zM978 169h1v1h-1zM980 169h1v1h-1zM982 169h1v1h-1zM984 169h1v1h-1zM986 169h1v1h-1zM988 169h1v1h-1zM989 24h1v1h-1zM989 26h1v1h-1zM989 51h1v1h-1zM989 81h1v1h-1zM989 110h1v1h-1zM989 140h1v1h-1zM989 166h1v1h-1zM989 168h1v1h-1zM989 169h1v1h-1zM989 170h1v1h-1zM989 172h1v1h-1zM989 199h1v1h-1zM989 228h1v1h-1zM989 258h1v1h-1zM989 287h1v1h-1zM989 315h1v1h-1zM990 169h1v1h-1zM992 169h1v1h-1zM994 169h1v1h-1zM996 169h1v1h-1zM998 169h1v1h-1zM1000 169h1v1h-1zM1002 169h1v1h-1zM1003 51h1v1h-1zM1003 81h1v1h-1zM1003 110h1v1h-1zM1003 140h1v1h-1zM1003 199h1v1h-1zM1003 228h1v1h-1zM1003 258h1v1h-1zM1003 287h1v1h-1zM1004 169h1v1h-1zM1005 51h1v1h-1zM1005 81h1v1h-1zM1005 110h1v1h-1zM1005 140h1v1h-1zM1005 199h1v1h-1zM1005 228h1v1h-1zM1005 258h1v1h-1zM1005 287h1v1h-1zM1006 27h1v1h-1zM1006 33h1v1h-1zM1006 39h1v1h-1zM1006 45h1v1h-1zM1006 57h1v1h-1zM1006 63h1v1h-1zM1006 69h1v1h-1zM1006 75h1v1h-1zM1006 86h1v1h-1zM1006 92h1v1h-1zM1006 98h1v1h-1zM1006 104h1v1h-1zM1006 116h1v1h-1zM1006 122h1v1h-1zM1006 128h1v1h-1zM1006 134h1v1h-1zM1006 145h1v1h-1zM1006 151h1v1h-1zM1006 157h1v1h-1zM1006 163h1v1h-1zM1006 169h1v1h-1zM1006 175h1v1h-1zM1006 181h1v1h-1zM1006 187h1v1h-1zM1006 193h1v1h-1zM1006 204h1v1h-1zM1006 210h1v1h-1zM1006 216h1v1h-1zM1006 222h1v1h-1zM1006 234h1v1h-1zM1006 240h1v1h-1zM1006 246h1v1h-1zM1006 252h1v1h-1zM1006 263h1v1h-1zM1006 269h1v1h-1zM1006 275h1v1h-1zM1006 281h1v1h-1zM1006 293h1v1h-1zM1006 299h1v1h-1zM1006 305h1v1h-1zM1006 311h1v1h-1zM1007 51h1v1h-1zM1007 81h1v1h-1zM1007 110h1v1h-1zM1007 140h1v1h-1zM1007 199h1v1h-1zM1007 228h1v1h-1zM1007 258h1v1h-1zM1007 287h1v1h-1zM1008 27h1v1h-1zM1008 33h1v1h-1zM1008 39h1v1h-1zM1008 45h1v1h-1zM1008 57h1v1h-1zM1008 63h1v1h-1zM1008 69h1v1h-1zM1008 75h1v1h-1zM1008 86h1v1h-1zM1008 92h1v1h-1zM1008 98h1v1h-1zM1008 104h1v1h-1zM1008 116h1v1h-1zM1008 122h1v1h-1zM1008 128h1v1h-1zM1008 134h1v1h-1zM1008 145h1v1h-1zM1008 151h1v1h-1zM1008 157h1v1h-1zM1008 163h1v1h-1zM1008 169h1v1h-1zM1008 175h1v1h-1zM1008 181h1v1h-1zM1008 187h1v1h-1zM1008 193h1v1h-1zM1008 204h1v1h-1zM1008 210h1v1h-1zM1008 216h1v1h-1zM1008 222h1v1h-1zM1008 234h1v1h-1zM1008 240h1v1h-1zM1008 246h1v1h-1zM1008 252h1v1h-1zM1008 263h1v1h-1zM1008 269h1v1h-1zM1008 275h1v1h-1zM1008 281h1v1h-1zM1008 293h1v1h-1zM1008 299h1v1h-1zM1008 305h1v1h-1zM1008 311h1v1h-1z" fill="#f0f0f0"/>
<path d="M28.7 34.4 L34 27.9 L44.5 27.9 L46 29.5 L46 39.3 L44.5 40.9 L34 40.9 Z" fill="#f5a01e"/>
<path d="M34.2 30 h9 v2.2 h-3.3 v7 h-2.3 v-7 h-3.4 Z" fill="#111"/>
<path d="M513.7 22.8 L525.3 22.8 L519.5 28.8 Z" fill="#f5a01e"/>
<path d="M997.9 97.5 L1004 91.8 L1004 103.2 Z" fill="#52c3cd"/><rect x="1003" y="96.8" width="6" height="1.4" fill="#52c3cd"/>
<path d="M9 162.3 L20.5 162.3 L27.5 169.4 L20.5 178.5 L9 178.5 Z" fill="#52c3cd"/>
<text x="11.50" y="176.50" font-size="16" fill="#111" font-weight="bold">2</text>
<rect x="571.5" y="305" width="438.5" height="10" fill="#8b8181"/>
<rect x="28.50" y="302.50" width="543.00" height="19.00" rx="5.5" ry="5.5" fill="#0d0d0d" stroke="#e0e0e0" stroke-width="1.2"/>
<rect x="170" y="306" width="24.6" height="13.8" rx="6.9" fill="#52c3cd"/>
<text x="182.30" y="318.00" font-size="14.5" fill="#111" text-anchor="middle" font-weight="bold">2</text>
<text x="211.00" y="317.50" font-size="14.5" fill="#52c3cd" textLength="49.00" lengthAdjust="spacing" stroke="#52c3cd" stroke-width="0.3">1.00 V</text>
<text x="284.50" y="314.00" font-size="9" fill="#52c3cd">B</text>
<text x="288.50" y="318.30" font-size="8" fill="#52c3cd">W</text>
<rect x="28.50" y="323.50" width="543.00" height="38.00" rx="5.5" ry="5.5" fill="#0d0d0d" stroke="#e0e0e0" stroke-width="1.2"/>
<text x="163.00" y="338.90" font-size="15.2" fill="#fff" textLength="42.10" lengthAdjust="spacing" stroke="#fff" stroke-width="0.3">Value</text>
<text x="249.40" y="338.90" font-size="15.2" fill="#fff" textLength="41.40" lengthAdjust="spacing" stroke="#fff" stroke-width="0.3">Mean</text>
<text x="330.80" y="338.90" font-size="15.2" fill="#fff" textLength="29.60" lengthAdjust="spacing" stroke="#fff" stroke-width="0.3">Min</text>
<text x="411.00" y="338.90" font-size="15.2" fill="#fff" textLength="30.20" lengthAdjust="spacing" stroke="#fff" stroke-width="0.3">Max</text>
<text x="490.50" y="338.90" font-size="15.2" fill="#fff" textLength="60.90" lengthAdjust="spacing" stroke="#fff" stroke-width="0.3">Std Dev</text>
<rect x="33.8" y="344.5" width="23.3" height="15.1" rx="7.5" fill="#52c3cd"/>
<text x="45.90" y="357.20" font-size="15" fill="#111" text-anchor="middle" font-weight="bold">2</text>
<text x="63.50" y="356.50" font-size="15" fill="#52c3cd" textLength="81.10" lengthAdjust="spacing" stroke="#52c3cd" stroke-width="0.3">Frequency</text>
<text x="163.00" y="356.50" font-size="15" fill="#52c3cd" textLength="75.10" lengthAdjust="spacing" stroke="#52c3cd" stroke-width="0.3">507.9kHz</text>
<text x="249.40" y="356.50" font-size="15" fill="#52c3cd" textLength="54.20" lengthAdjust="spacing" stroke="#52c3cd" stroke-width="0.3">507.9k</text>
<text x="330.80" y="356.50" font-size="15" fill="#52c3cd" textLength="53.60" lengthAdjust="spacing" stroke="#52c3cd" stroke-width="0.3">507.9k</text>
<text x="411.00" y="356.50" font-size="15" fill="#52c3cd" textLength="53.60" lengthAdjust="spacing" stroke="#52c3cd" stroke-width="0.3">507.9k</text>
<text x="490.50" y="356.50" font-size="15" fill="#52c3cd" textLength="44.90" lengthAdjust="spacing" stroke="#52c3cd" stroke-width="0.3">0.000</text>
<rect x="579.50" y="319.50" width="144.00" height="37.00" rx="5.5" ry="5.5" fill="#0d0d0d" stroke="#e0e0e0" stroke-width="1.2"/>
<text x="584.70" y="334.80" font-size="15.2" fill="#fff" textLength="54.00" lengthAdjust="spacing" stroke="#fff" stroke-width="0.3">2.00µs</text>
<rect x="583" y="340" width="12.8" height="11.5" rx="1.5" fill="#f5a01e"/>
<path d="M585.3 341.8 h8.2 v2 h-3 v6.2 h-2.2 v-6.2 h-3 Z" fill="#111"/>
<path d="M597 345.8 h9 M603 342.8 l3.2 3 l-3.2 3" fill="none" stroke="#f5a01e" stroke-width="1.6"/>
<path d="M608 341.5 h10 l-5 7 Z" fill="#f5a01e"/>
<text x="618.80" y="351.90" font-size="14.2" fill="#f5a01e" textLength="85.50" lengthAdjust="spacing" stroke="#f5a01e" stroke-width="0.3">39.8000ms</text>
<rect x="730.50" y="319.50" width="104.50" height="37.00" rx="5.5" ry="5.5" fill="#0d0d0d" stroke="#e0e0e0" stroke-width="1.2"/>
<text x="736.50" y="334.60" font-size="15" fill="#fff" textLength="70.50" lengthAdjust="spacing" stroke="#fff" stroke-width="0.3">5.00GS/s</text>
<text x="736.50" y="351.30" font-size="15" fill="#fff" textLength="79.60" lengthAdjust="spacing" stroke="#fff" stroke-width="0.3">1M points</text>
<rect x="28.5" y="366.5" width="981" height="293.5" fill="#0d0d0d" stroke="#a6cdf0" stroke-width="1"/>
<rect x="29" y="396" width="5" height="1.2" fill="#f0f0f0"/>
<text x="68.40" y="400.57" font-size="12" fill="#eee" textLength="22.30" lengthAdjust="spacing" text-anchor="end">38.0</text>
<rect x="29" y="425" width="5" height="1.2" fill="#f0f0f0"/>
<text x="68.40" y="429.85" font-size="12" fill="#eee" textLength="22.30" lengthAdjust="spacing" text-anchor="end">28.0</text>
<rect x="29" y="454" width="5" height="1.2" fill="#f0f0f0"/>
<text x="68.40" y="459.12" font-size="12" fill="#eee" textLength="22.30" lengthAdjust="spacing" text-anchor="end">18.0</text>
<rect x="29" y="484" width="5" height="1.2" fill="#f0f0f0"/>
<text x="68.40" y="488.40" font-size="12" fill="#eee" textLength="22.30" lengthAdjust="spacing" text-anchor="end">8.01</text>
<rect x="29" y="513" width="5" height="1.2" fill="#f0f0f0"/>
<text x="68.40" y="517.67" font-size="12" fill="#eee" textLength="22.30" lengthAdjust="spacing" text-anchor="end">1.99</text>
<rect x="39" y="513" width="5.2" height="1.2" fill="#eee"/>
<rect x="29" y="542" width="5" height="1.2" fill="#f0f0f0"/>
<text x="68.40" y="546.95" font-size="12" fill="#eee" textLength="22.30" lengthAdjust="spacing" text-anchor="end">12.0</text>
<rect x="39" y="542" width="5.2" height="1.2" fill="#eee"/>
<rect x="29" y="571" width="5" height="1.2" fill="#f0f0f0"/>
<text x="68.40" y="576.22" font-size="12" fill="#eee" textLength="22.30" lengthAdjust="spacing" text-anchor="end">22.0</text>
<rect x="39" y="571" width="5.2" height="1.2" fill="#eee"/>
<rect x="29" y="601" width="5" height="1.2" fill="#f0f0f0"/>
<text x="68.40" y="605.50" font-size="12" fill="#eee" textLength="22.30" lengthAdjust="spacing" text-anchor="end">32.0</text>
<rect x="39" y="601" width="5.2" height="1.2" fill="#eee"/>
<rect x="29" y="630" width="5" height="1.2" fill="#f0f0f0"/>
<text x="68.40" y="634.77" font-size="12" fill="#eee" textLength="22.30" lengthAdjust="spacing" text-anchor="end">42.0</text>
<rect x="39" y="630" width="5.2" height="1.2" fill="#eee"/>
<text x="34.60" y="656.00" font-size="11.5" fill="#eee" textLength="39.80" lengthAdjust="spacing">400kHz</text>
<text x="960.00" y="656.00" font-size="11.5" fill="#eee" textLength="47.50" lengthAdjust="spacing">5.40MHz</text>
<path d="M29.5 611.7L30.5 626.1L31.5 614.2L32.5 602.3L33.5 590.4L34.5 583.4L35.5 576.3L36.5 600.0L37.5 545.0L38.5 517.0L39.5 517.0L40.5 560.0L41.5 588.0L42.5 560.0L43.5 580.4L44.5 580.4L45.5 564.7L46.5 575.0L47.5 560.0L48.5 560.0L48.5 440.0L49.2 414.0L50.3 412.4L51.0 418.0L51.5 430.0L51.8 497.0L52.5 520.0L53.5 535.0L54.5 556.0L55.5 577.4L56.5 577.6L57.5 577.8L58.5 572.2L59.5 566.6L60.5 561.0L61.5 561.0L62.5 570.4L63.5 579.7L64.5 579.7L65.5 577.5L66.5 575.2L67.5 575.2L68.5 552.3L69.5 564.9L70.5 577.5L71.5 566.1L72.5 554.7L73.5 554.7L74.5 584.9L75.5 584.9L76.5 568.3L77.5 551.6L78.5 569.0L79.5 586.4L80.5 586.4L81.5 573.5L82.5 560.6L83.5 566.7L84.5 572.8L85.5 568.3L86.5 563.8L87.5 559.3L88.5 559.3L89.5 579.2L90.5 579.2L91.5 568.1L92.5 568.1L93.5 578.3L94.5 578.3L95.5 558.5L96.5 558.5L97.5 571.4L98.5 584.3L99.5 573.5L100.5 562.8L101.5 566.1L102.5 569.4L103.5 572.7L104.5 579.0L105.5 585.2L106.5 585.2L107.5 552.9L108.5 566.6L109.5 580.3L110.5 580.4L111.5 580.5L112.5 580.5L113.5 578.8L114.5 577.2L115.5 577.2L116.5 574.8L117.5 572.4L118.5 580.7L119.5 588.9L120.5 588.9L121.5 553.9L122.5 557.2L123.5 560.5L124.5 563.7L125.5 563.7L126.5 593.6L127.5 597.6L128.5 601.6L129.5 605.7L130.5 605.7L131.5 577.1L132.5 577.1L133.5 557.3L134.5 560.0L135.5 562.7L136.5 565.5L137.5 574.7L138.5 583.9L139.5 583.9L140.5 578.6L141.5 572.8L142.5 567.0L143.5 561.2L144.5 569.1L145.5 577.1L146.5 585.0L147.5 573.9L148.5 561.0L149.5 551.0L149.5 421.7L150.2 417.7L150.8 417.7L151.5 421.7L151.5 549.0L153.5 563.0L154.5 564.6L155.5 576.6L156.5 588.5L157.5 588.5L158.5 589.6L159.5 590.7L160.5 582.3L161.5 574.0L162.5 565.6L163.5 573.9L164.5 582.2L165.5 590.5L166.5 583.6L167.5 576.7L168.5 569.8L169.5 574.9L170.5 579.9L171.5 585.0L172.5 585.0L173.5 595.4L174.5 586.6L175.5 577.9L176.5 582.6L177.5 587.3L178.5 592.1L179.5 592.1L180.5 594.5L181.5 589.6L182.5 584.7L183.5 579.7L184.5 587.3L185.5 594.9L186.5 607.6L187.5 620.3L188.5 606.6L189.5 593.0L190.5 579.3L191.5 586.1L192.5 592.8L193.5 599.6L194.5 599.6L195.5 597.1L196.5 597.1L197.5 583.0L198.5 583.0L199.5 583.3L200.5 583.6L201.5 596.9L202.5 610.3L203.5 600.8L204.5 591.3L205.5 581.9L206.5 592.1L207.5 602.4L208.5 612.7L209.5 612.7L210.5 599.1L211.5 585.6L212.5 593.2L213.5 600.8L214.5 608.3L215.5 608.3L216.5 580.9L217.5 592.5L218.5 604.2L219.5 596.2L220.5 588.2L221.5 588.2L222.5 600.3L223.5 612.3L224.5 605.9L225.5 599.5L226.5 593.1L227.5 603.0L228.5 612.9L229.5 614.8L230.5 616.6L231.5 616.6L232.5 616.9L233.5 616.9L234.5 603.1L235.5 610.1L236.5 617.1L237.5 617.1L238.5 594.2L239.5 607.1L240.5 620.0L241.5 632.9L242.5 613.9L243.5 594.9L244.5 597.1L245.5 599.2L246.5 601.4L247.5 597.6L248.5 587.6L248.5 482.3L249.2 478.3L249.8 478.3L250.5 482.3L250.5 585.6L252.5 599.6L253.5 625.4L254.5 612.3L255.5 599.2L256.5 615.8L257.5 632.5L258.5 623.1L259.5 613.8L260.5 604.4L261.5 605.9L262.5 607.4L263.5 607.4L264.5 617.6L265.5 627.9L266.5 621.6L267.5 615.3L268.5 609.1L269.5 609.1L270.5 617.9L271.5 626.8L272.5 622.6L273.5 618.3L274.5 614.0L275.5 613.3L276.5 612.5L277.5 611.8L278.5 616.3L279.5 620.8L280.5 617.3L281.5 613.8L282.5 620.7L283.5 627.5L284.5 618.9L285.5 610.4L286.5 617.2L287.5 624.0L288.5 630.8L289.5 638.2L290.5 645.7L291.5 625.6L292.5 605.6L293.5 626.4L294.5 647.3L295.5 634.5L296.5 621.8L297.5 609.0L298.5 609.0L299.5 622.3L300.5 622.3L301.5 610.6L302.5 617.7L303.5 624.9L304.5 624.9L305.5 628.4L306.5 632.0L307.5 634.1L308.5 636.3L309.5 624.6L310.5 612.9L311.5 612.9L312.5 650.1L313.5 650.1L314.5 604.9L315.5 614.8L316.5 624.7L317.5 624.7L318.5 602.8L319.5 602.8L320.5 615.9L321.5 615.9L322.5 620.4L323.5 614.9L324.5 609.3L325.5 609.3L326.5 608.5L327.5 629.9L328.5 651.3L329.5 642.0L330.5 632.7L331.5 632.8L332.5 632.8L333.5 632.9L334.5 632.9L335.5 638.2L336.5 643.5L337.5 628.0L338.5 612.5L339.5 612.5L340.5 624.6L341.5 624.6L342.5 611.2L343.5 619.3L344.5 627.4L345.5 616.8L346.5 606.0L347.5 596.0L347.5 519.8L348.2 515.8L348.8 515.8L349.5 519.8L349.5 594.0L351.5 608.0L352.5 605.9L353.5 607.9L354.5 609.9L355.5 619.3L356.5 628.8L357.5 628.8L358.5 609.4L359.5 609.4L360.5 644.4L361.5 625.8L362.5 607.2L363.5 619.1L364.5 631.0L365.5 628.0L366.5 625.1L367.5 630.4L368.5 635.7L369.5 635.0L370.5 634.3L371.5 618.5L372.5 602.7L373.5 602.7L374.5 616.5L375.5 630.4L376.5 628.4L377.5 626.5L378.5 634.7L379.5 643.0L380.5 651.2L381.5 651.9L382.5 652.7L383.5 652.7L384.5 606.7L385.5 607.3L386.5 607.8L387.5 608.3L388.5 615.0L389.5 621.7L390.5 628.4L391.5 622.6L392.5 616.7L393.5 610.8L394.5 615.2L395.5 619.5L396.5 619.1L397.5 618.7L398.5 618.3L399.5 627.1L400.5 635.9L401.5 635.9L402.5 631.2L403.5 626.5L404.5 627.1L405.5 627.8L406.5 628.4L407.5 628.4L408.5 600.6L409.5 612.1L410.5 623.7L411.5 616.8L412.5 610.0L413.5 617.8L414.5 625.5L415.5 620.0L416.5 614.6L417.5 609.1L418.5 609.1L419.5 605.3L420.5 605.7L421.5 606.1L422.5 618.5L423.5 630.8L424.5 618.9L425.5 606.9L426.5 623.2L427.5 639.5L428.5 627.3L429.5 615.1L430.5 602.9L431.5 611.4L432.5 619.8L433.5 628.2L434.5 616.7L435.5 605.1L436.5 605.1L437.5 645.1L438.5 638.7L439.5 632.3L440.5 616.3L441.5 600.3L442.5 623.4L443.5 646.5L444.5 646.5L445.5 628.9L446.5 606.0L447.5 596.0L447.5 549.1L448.2 545.1L448.8 545.1L449.5 549.1L449.5 594.0L451.5 608.0L452.5 608.4L453.5 616.6L454.5 624.8L455.5 618.8L456.5 612.7L457.5 606.6L458.5 612.5L459.5 618.5L460.5 624.4L461.5 624.8L462.5 625.2L463.5 625.6L464.5 618.5L465.5 611.3L466.5 604.2L467.5 604.2L468.5 618.8L469.5 633.5L470.5 633.5L471.5 627.8L472.5 627.7L473.5 627.6L474.5 627.5L475.5 616.3L476.5 605.1L477.5 614.6L478.5 624.0L479.5 633.5L480.5 633.8L481.5 634.0L482.5 625.4L483.5 616.8L484.5 608.2L485.5 619.8L486.5 631.4L487.5 623.3L488.5 615.2L489.5 607.1L490.5 607.1L491.5 642.4L492.5 637.4L493.5 632.4L494.5 627.4L495.5 619.9L496.5 612.4L497.5 627.2L498.5 642.0L499.5 631.7L500.5 621.4L501.5 614.1L502.5 606.9L503.5 599.6L504.5 609.3L505.5 619.0L506.5 628.6L507.5 620.6L508.5 612.6L509.5 604.5L510.5 619.8L511.5 635.0L512.5 626.8L513.5 618.6L514.5 622.4L515.5 626.1L516.5 631.6L517.5 637.0L518.5 642.4L519.5 630.4L520.5 618.3L521.5 606.2L522.5 606.2L523.5 616.0L524.5 625.7L525.5 629.8L526.5 634.0L527.5 634.0L528.5 606.7L529.5 619.7L530.5 632.7L531.5 632.7L532.5 619.8L533.5 606.9L534.5 615.0L535.5 623.0L536.5 631.0L537.5 631.1L538.5 628.3L539.5 625.6L540.5 617.8L541.5 609.9L542.5 620.4L543.5 631.0L544.5 622.6L545.5 614.1L546.5 606.0L547.5 596.0L547.5 548.7L548.2 544.7L548.8 544.7L549.5 548.7L549.5 594.0L551.5 608.0L552.5 610.8L553.5 610.8L554.5 650.5L555.5 641.1L556.5 631.8L557.5 622.5L558.5 628.5L559.5 634.6L560.5 631.2L561.5 627.9L562.5 624.6L563.5 624.6L564.5 615.5L565.5 606.4L566.5 619.4L567.5 632.3L568.5 621.9L569.5 611.5L570.5 614.9L571.5 618.4L572.5 621.9L573.5 621.9L574.5 621.6L575.5 621.6L576.5 610.6L577.5 610.6L578.5 629.2L579.5 629.2L580.5 615.6L581.5 602.1L582.5 618.6L583.5 635.1L584.5 651.5L585.5 651.5L586.5 631.9L587.5 612.2L588.5 615.1L589.5 617.9L590.5 620.8L591.5 623.1L592.5 625.5L593.5 624.9L594.5 624.4L595.5 623.8L596.5 623.8L597.5 613.7L598.5 618.8L599.5 623.9L600.5 620.5L601.5 617.0L602.5 622.4L603.5 627.7L604.5 627.7L605.5 604.8L606.5 611.9L607.5 619.1L608.5 626.2L609.5 619.9L610.5 613.6L611.5 613.6L612.5 618.0L613.5 622.5L614.5 617.5L615.5 612.5L616.5 607.5L617.5 608.8L618.5 610.1L619.5 611.4L620.5 615.0L621.5 618.5L622.5 613.3L623.5 608.0L624.5 602.7L625.5 617.2L626.5 631.7L627.5 623.9L628.5 616.1L629.5 608.3L630.5 621.9L631.5 635.4L632.5 619.2L633.5 603.0L634.5 611.6L635.5 620.2L636.5 628.8L637.5 628.8L638.5 621.5L639.5 614.2L640.5 618.9L641.5 623.5L642.5 628.1L643.5 618.9L644.5 606.0L645.5 596.0L645.5 537.2L646.2 533.2L646.8 533.2L647.5 537.2L647.5 594.0L649.5 608.0L650.5 625.0L651.5 626.1L652.5 615.5L653.5 604.8L654.5 604.0L655.5 603.2L656.5 602.4L657.5 602.4L658.5 649.9L659.5 649.9L660.5 610.9L661.5 619.3L662.5 627.6L663.5 627.6L664.5 604.2L665.5 604.1L666.5 604.6L667.5 605.0L668.5 616.9L669.5 628.8L670.5 628.8L671.5 625.1L672.5 627.4L673.5 629.7L674.5 620.8L675.5 611.8L676.5 611.8L677.5 632.7L678.5 629.9L679.5 627.1L680.5 624.4L681.5 626.0L682.5 627.6L683.5 627.6L684.5 627.1L685.5 626.6L686.5 616.2L687.5 605.8L688.5 605.8L689.5 622.4L690.5 614.7L691.5 607.1L692.5 611.7L693.5 616.4L694.5 621.0L695.5 615.6L696.5 610.2L697.5 616.1L698.5 621.9L699.5 627.8L700.5 627.8L701.5 618.2L702.5 608.7L703.5 616.1L704.5 623.6L705.5 631.0L706.5 631.0L707.5 622.8L708.5 614.7L709.5 624.6L710.5 634.5L711.5 623.9L712.5 613.3L713.5 613.3L714.5 628.1L715.5 617.0L716.5 605.9L717.5 618.8L718.5 631.8L719.5 621.5L720.5 611.3L721.5 618.4L722.5 625.6L723.5 625.6L724.5 606.3L725.5 613.0L726.5 619.8L727.5 626.6L728.5 615.6L729.5 604.5L730.5 617.4L731.5 630.2L732.5 624.1L733.5 618.0L734.5 611.9L735.5 608.2L736.5 604.5L737.5 619.1L738.5 633.8L739.5 619.6L740.5 605.4L741.5 605.4L742.5 626.2L743.5 620.7L744.5 606.0L745.5 596.0L745.5 544.9L746.2 540.9L746.8 540.9L747.5 544.9L747.5 594.0L749.5 608.0L750.5 628.3L751.5 617.9L752.5 607.4L753.5 616.0L754.5 624.5L755.5 624.5L756.5 617.0L757.5 609.5L758.5 611.6L759.5 613.7L760.5 613.7L761.5 630.8L762.5 630.8L763.5 618.2L764.5 618.2L765.5 603.6L766.5 612.7L767.5 621.9L768.5 631.0L769.5 631.0L770.5 626.8L771.5 621.8L772.5 616.9L773.5 612.0L774.5 615.6L775.5 619.3L776.5 613.2L777.5 607.0L778.5 607.0L779.5 611.9L780.5 619.9L781.5 628.0L782.5 629.4L783.5 630.8L784.5 619.6L785.5 608.4L786.5 608.4L787.5 630.8L788.5 653.2L789.5 638.5L790.5 623.8L791.5 609.1L792.5 616.5L793.5 623.9L794.5 623.9L795.5 631.2L796.5 629.4L797.5 627.7L798.5 626.0L799.5 633.3L800.5 640.7L801.5 648.0L802.5 648.0L803.5 625.3L804.5 619.6L805.5 614.0L806.5 608.4L807.5 619.8L808.5 631.2L809.5 642.6L810.5 633.4L811.5 624.3L812.5 619.8L813.5 615.4L814.5 618.2L815.5 621.1L816.5 631.9L817.5 642.6L818.5 646.4L819.5 650.1L820.5 653.9L821.5 632.8L822.5 611.8L823.5 631.3L824.5 650.8L825.5 650.8L826.5 610.9L827.5 608.3L828.5 605.6L829.5 619.3L830.5 633.0L831.5 626.1L832.5 619.2L833.5 612.3L834.5 612.3L835.5 610.2L836.5 610.9L837.5 611.5L838.5 612.2L839.5 617.1L840.5 622.1L841.5 627.1L842.5 627.1L843.5 606.0L844.5 596.0L844.5 540.5L845.2 536.5L845.8 536.5L846.5 540.5L846.5 594.0L848.5 608.0L849.5 628.3L850.5 628.3L851.5 627.4L852.5 626.5L853.5 627.1L854.5 627.6L855.5 628.1L856.5 628.1L857.5 608.0L858.5 623.4L859.5 638.8L860.5 628.2L861.5 617.6L862.5 607.0L863.5 613.0L864.5 619.1L865.5 625.2L866.5 627.0L867.5 628.8L868.5 630.6L869.5 630.6L870.5 612.3L871.5 623.7L872.5 635.2L873.5 646.6L874.5 646.6L875.5 623.6L876.5 619.9L877.5 616.1L878.5 623.8L879.5 631.5L880.5 629.3L881.5 627.1L882.5 616.1L883.5 605.1L884.5 612.4L885.5 619.8L886.5 627.1L887.5 627.1L888.5 629.1L889.5 629.1L890.5 616.9L891.5 620.4L892.5 624.0L893.5 627.5L894.5 617.1L895.5 606.8L896.5 606.8L897.5 608.4L898.5 610.0L899.5 606.9L900.5 603.7L901.5 612.3L902.5 620.9L903.5 629.5L904.5 617.6L905.5 605.6L906.5 617.6L907.5 629.6L908.5 621.6L909.5 613.6L910.5 605.6L911.5 605.6L912.5 604.1L913.5 615.8L914.5 627.4L915.5 614.4L916.5 601.4L917.5 619.6L918.5 637.8L919.5 656.0L920.5 644.5L921.5 632.9L922.5 632.9L923.5 601.5L924.5 615.9L925.5 630.2L926.5 622.7L927.5 615.1L928.5 607.6L929.5 619.9L930.5 632.3L931.5 628.4L932.5 624.5L933.5 615.1L934.5 605.6L935.5 605.6L936.5 608.2L937.5 608.2L938.5 626.0L939.5 620.2L940.5 614.4L941.5 608.6L942.5 606.0L943.5 596.0L943.5 548.3L944.2 544.3L944.8 544.3L945.5 548.3L945.5 594.0L947.5 608.0L948.5 606.7L949.5 606.7L950.5 629.3L951.5 629.3L952.5 605.2L953.5 610.9L954.5 616.7L955.5 622.5L956.5 622.5L957.5 610.3L958.5 619.9L959.5 629.5L960.5 628.9L961.5 628.2L962.5 627.5L963.5 619.4L964.5 611.3L965.5 611.3L966.5 619.7L967.5 617.0L968.5 614.3L969.5 611.6L970.5 611.6L971.5 628.8L972.5 628.8L973.5 622.8L974.5 622.8L975.5 621.9L976.5 621.9L977.5 623.4L978.5 624.9L979.5 634.8L980.5 644.7L981.5 644.7L982.5 615.6L983.5 622.2L984.5 628.9L985.5 635.6L986.5 635.6L987.5 630.2L988.5 624.8L989.5 624.8L990.5 658.0L991.5 658.0L992.5 623.1L993.5 623.1L994.5 644.7L995.5 658.0L996.5 652.9L997.5 639.5L998.5 626.0L999.5 626.0L1000.5 640.6L1001.5 633.9L1002.5 627.2L1003.5 620.5L1004.5 630.9L1005.5 641.2L1006.5 641.2L1007.5 617.1L1008.5 629.4L1009.5 641.7" fill="none" stroke="#f08a2a" stroke-width="1.3" stroke-linejoin="bevel"/>
<path shape-rendering="crispEdges" d="M74 396h1v1h-1zM74 425h1v1h-1zM74 454h1v1h-1zM74 484h1v1h-1zM74 513h1v1h-1zM74 542h1v1h-1zM74 571h1v1h-1zM74 601h1v1h-1zM74 630h1v1h-1zM76 396h1v1h-1zM76 425h1v1h-1zM76 454h1v1h-1zM76 484h1v1h-1zM76 513h1v1h-1zM76 542h1v1h-1zM76 571h1v1h-1zM76 601h1v1h-1zM76 630h1v1h-1zM78 396h1v1h-1zM78 425h1v1h-1zM78 454h1v1h-1zM78 484h1v1h-1zM78 513h1v1h-1zM78 542h1v1h-1zM78 571h1v1h-1zM78 601h1v1h-1zM78 630h1v1h-1zM80 396h1v1h-1zM80 425h1v1h-1zM80 454h1v1h-1zM80 484h1v1h-1zM80 513h1v1h-1zM80 542h1v1h-1zM80 571h1v1h-1zM80 601h1v1h-1zM80 630h1v1h-1zM82 396h1v1h-1zM82 425h1v1h-1zM82 454h1v1h-1zM82 484h1v1h-1zM82 513h1v1h-1zM82 542h1v1h-1zM82 571h1v1h-1zM82 601h1v1h-1zM82 630h1v1h-1zM84 396h1v1h-1zM84 425h1v1h-1zM84 454h1v1h-1zM84 484h1v1h-1zM84 513h1v1h-1zM84 542h1v1h-1zM84 571h1v1h-1zM84 601h1v1h-1zM84 630h1v1h-1zM86 396h1v1h-1zM86 425h1v1h-1zM86 454h1v1h-1zM86 484h1v1h-1zM86 513h1v1h-1zM86 542h1v1h-1zM86 571h1v1h-1zM86 601h1v1h-1zM86 630h1v1h-1zM88 396h1v1h-1zM88 425h1v1h-1zM88 454h1v1h-1zM88 484h1v1h-1zM88 513h1v1h-1zM88 542h1v1h-1zM88 571h1v1h-1zM88 601h1v1h-1zM88 630h1v1h-1zM90 396h1v1h-1zM90 425h1v1h-1zM90 454h1v1h-1zM90 484h1v1h-1zM90 513h1v1h-1zM90 542h1v1h-1zM90 571h1v1h-1zM90 601h1v1h-1zM90 630h1v1h-1zM92 396h1v1h-1zM92 425h1v1h-1zM92 454h1v1h-1zM92 484h1v1h-1zM92 513h1v1h-1zM92 542h1v1h-1zM92 571h1v1h-1zM92 601h1v1h-1zM92 630h1v1h-1zM94 396h1v1h-1zM94 425h1v1h-1zM94 454h1v1h-1zM94 484h1v1h-1zM94 513h1v1h-1zM94 542h1v1h-1zM94 571h1v1h-1zM94 601h1v1h-1zM94 630h1v1h-1zM96 396h1v1h-1zM96 425h1v1h-1zM96 454h1v1h-1zM96 484h1v1h-1zM96 513h1v1h-1zM96 542h1v1h-1zM96 571h1v1h-1zM96 601h1v1h-1zM96 630h1v1h-1zM98 396h1v1h-1zM98 425h1v1h-1zM98 454h1v1h-1zM98 484h1v1h-1zM98 513h1v1h-1zM98 542h1v1h-1zM98 571h1v1h-1zM98 601h1v1h-1zM98 630h1v1h-1zM100 396h1v1h-1zM100 425h1v1h-1zM100 454h1v1h-1zM100 484h1v1h-1zM100 513h1v1h-1zM100 542h1v1h-1zM100 571h1v1h-1zM100 601h1v1h-1zM100 630h1v1h-1zM102 396h1v1h-1zM102 425h1v1h-1zM102 454h1v1h-1zM102 484h1v1h-1zM102 513h1v1h-1zM102 542h1v1h-1zM102 571h1v1h-1zM102 601h1v1h-1zM102 630h1v1h-1zM104 396h1v1h-1zM104 425h1v1h-1zM104 454h1v1h-1zM104 484h1v1h-1zM104 513h1v1h-1zM104 542h1v1h-1zM104 571h1v1h-1zM104 601h1v1h-1zM104 630h1v1h-1zM106 396h1v1h-1zM106 425h1v1h-1zM106 454h1v1h-1zM106 484h1v1h-1zM106 513h1v1h-1zM106 542h1v1h-1zM106 571h1v1h-1zM106 601h1v1h-1zM106 630h1v1h-1zM108 396h1v1h-1zM108 425h1v1h-1zM108 454h1v1h-1zM108 484h1v1h-1zM108 513h1v1h-1zM108 542h1v1h-1zM108 571h1v1h-1zM108 601h1v1h-1zM108 630h1v1h-1zM110 396h1v1h-1zM110 425h1v1h-1zM110 454h1v1h-1zM110 484h1v1h-1zM110 513h1v1h-1zM110 542h1v1h-1zM110 571h1v1h-1zM110 601h1v1h-1zM110 630h1v1h-1zM112 396h1v1h-1zM112 425h1v1h-1zM112 454h1v1h-1zM112 484h1v1h-1zM112 513h1v1h-1zM112 542h1v1h-1zM112 571h1v1h-1zM112 601h1v1h-1zM112 630h1v1h-1zM114 396h1v1h-1zM114 425h1v1h-1zM114 454h1v1h-1zM114 484h1v1h-1zM114 513h1v1h-1zM114 542h1v1h-1zM114 571h1v1h-1zM114 601h1v1h-1zM114 630h1v1h-1zM116 396h1v1h-1zM116 425h1v1h-1zM116 454h1v1h-1zM116 484h1v1h-1zM116 513h1v1h-1zM116 542h1v1h-1zM116 571h1v1h-1zM116 601h1v1h-1zM116 630h1v1h-1zM118 396h1v1h-1zM118 425h1v1h-1zM118 454h1v1h-1zM118 484h1v1h-1zM118 513h1v1h-1zM118 542h1v1h-1zM118 571h1v1h-1zM118 601h1v1h-1zM118 630h1v1h-1zM120 396h1v1h-1zM120 425h1v1h-1zM120 454h1v1h-1zM120 484h1v1h-1zM120 513h1v1h-1zM120 542h1v1h-1zM120 571h1v1h-1zM120 601h1v1h-1zM120 630h1v1h-1zM122 396h1v1h-1zM122 425h1v1h-1zM122 454h1v1h-1zM122 484h1v1h-1zM122 513h1v1h-1zM122 542h1v1h-1zM122 571h1v1h-1zM122 601h1v1h-1zM122 630h1v1h-1zM124 396h1v1h-1zM124 425h1v1h-1zM124 454h1v1h-1zM124 484h1v1h-1zM124 513h1v1h-1zM124 542h1v1h-1zM124 571h1v1h-1zM124 601h1v1h-1zM124 630h1v1h-1zM126 396h1v1h-1zM126 425h1v1h-1zM126 454h1v1h-1zM126 484h1v1h-1zM126 513h1v1h-1zM126 542h1v1h-1zM126 571h1v1h-1zM126 601h1v1h-1zM126 630h1v1h-1zM127 368h1v1h-1zM127 370h1v1h-1zM127 372h1v1h-1zM127 374h1v1h-1zM127 376h1v1h-1zM127 378h1v1h-1zM127 380h1v1h-1zM127 382h1v1h-1zM127 384h1v1h-1zM127 386h1v1h-1zM127 388h1v1h-1zM127 390h1v1h-1zM127 392h1v1h-1zM127 394h1v1h-1zM127 396h1v1h-1zM127 398h1v1h-1zM127 400h1v1h-1zM127 402h1v1h-1zM127 404h1v1h-1zM127 406h1v1h-1zM127 408h1v1h-1zM127 410h1v1h-1zM127 412h1v1h-1zM127 414h1v1h-1zM127 416h1v1h-1zM127 418h1v1h-1zM127 420h1v1h-1zM127 422h1v1h-1zM127 424h1v1h-1zM127 426h1v1h-1zM127 428h1v1h-1zM127 430h1v1h-1zM127 432h1v1h-1zM127 434h1v1h-1zM127 436h1v1h-1zM127 438h1v1h-1zM127 440h1v1h-1zM127 442h1v1h-1zM127 444h1v1h-1zM127 446h1v1h-1zM127 448h1v1h-1zM127 450h1v1h-1zM127 452h1v1h-1zM127 454h1v1h-1zM127 456h1v1h-1zM127 458h1v1h-1zM127 460h1v1h-1zM127 462h1v1h-1zM127 464h1v1h-1zM127 466h1v1h-1zM127 468h1v1h-1zM127 470h1v1h-1zM127 472h1v1h-1zM127 474h1v1h-1zM127 476h1v1h-1zM127 478h1v1h-1zM127 480h1v1h-1zM127 482h1v1h-1zM127 484h1v1h-1zM127 486h1v1h-1zM127 488h1v1h-1zM127 490h1v1h-1zM127 492h1v1h-1zM127 494h1v1h-1zM127 496h1v1h-1zM127 498h1v1h-1zM127 500h1v1h-1zM127 502h1v1h-1zM127 504h1v1h-1zM127 506h1v1h-1zM127 508h1v1h-1zM127 510h1v1h-1zM127 512h1v1h-1zM127 514h1v1h-1zM127 516h1v1h-1zM127 518h1v1h-1zM127 520h1v1h-1zM127 522h1v1h-1zM127 524h1v1h-1zM127 526h1v1h-1zM127 528h1v1h-1zM127 530h1v1h-1zM127 532h1v1h-1zM127 534h1v1h-1zM127 536h1v1h-1zM127 538h1v1h-1zM127 540h1v1h-1zM127 542h1v1h-1zM127 544h1v1h-1zM127 546h1v1h-1zM127 548h1v1h-1zM127 550h1v1h-1zM127 552h1v1h-1zM127 554h1v1h-1zM127 556h1v1h-1zM127 558h1v1h-1zM127 560h1v1h-1zM127 562h1v1h-1zM127 564h1v1h-1zM127 566h1v1h-1zM127 568h1v1h-1zM127 570h1v1h-1zM127 572h1v1h-1zM127 574h1v1h-1zM127 576h1v1h-1zM127 578h1v1h-1zM127 580h1v1h-1zM127 582h1v1h-1zM127 584h1v1h-1zM127 586h1v1h-1zM127 588h1v1h-1zM127 590h1v1h-1zM127 592h1v1h-1zM127 594h1v1h-1zM127 596h1v1h-1zM127 598h1v1h-1zM127 600h1v1h-1zM127 602h1v1h-1zM127 604h1v1h-1zM127 606h1v1h-1zM127 608h1v1h-1zM127 610h1v1h-1zM127 612h1v1h-1zM127 614h1v1h-1zM127 616h1v1h-1zM127 618h1v1h-1zM127 620h1v1h-1zM127 622h1v1h-1zM127 624h1v1h-1zM127 626h1v1h-1zM127 628h1v1h-1zM127 630h1v1h-1zM127 632h1v1h-1zM127 634h1v1h-1zM127 636h1v1h-1zM127 638h1v1h-1zM127 640h1v1h-1zM127 642h1v1h-1zM127 644h1v1h-1zM127 646h1v1h-1zM127 648h1v1h-1zM127 650h1v1h-1zM127 652h1v1h-1zM127 654h1v1h-1zM127 656h1v1h-1zM127 658h1v1h-1zM128 396h1v1h-1zM128 425h1v1h-1zM128 454h1v1h-1zM128 484h1v1h-1zM128 513h1v1h-1zM128 542h1v1h-1zM128 571h1v1h-1zM128 601h1v1h-1zM128 630h1v1h-1zM130 396h1v1h-1zM130 425h1v1h-1zM130 454h1v1h-1zM130 484h1v1h-1zM130 513h1v1h-1zM130 542h1v1h-1zM130 571h1v1h-1zM130 601h1v1h-1zM130 630h1v1h-1zM132 396h1v1h-1zM132 425h1v1h-1zM132 454h1v1h-1zM132 484h1v1h-1zM132 513h1v1h-1zM132 542h1v1h-1zM132 571h1v1h-1zM132 601h1v1h-1zM132 630h1v1h-1zM134 396h1v1h-1zM134 425h1v1h-1zM134 454h1v1h-1zM134 484h1v1h-1zM134 513h1v1h-1zM134 542h1v1h-1zM134 571h1v1h-1zM134 601h1v1h-1zM134 630h1v1h-1zM136 396h1v1h-1zM136 425h1v1h-1zM136 454h1v1h-1zM136 484h1v1h-1zM136 513h1v1h-1zM136 542h1v1h-1zM136 571h1v1h-1zM136 601h1v1h-1zM136 630h1v1h-1zM138 396h1v1h-1zM138 425h1v1h-1zM138 454h1v1h-1zM138 484h1v1h-1zM138 513h1v1h-1zM138 542h1v1h-1zM138 571h1v1h-1zM138 601h1v1h-1zM138 630h1v1h-1zM140 396h1v1h-1zM140 425h1v1h-1zM140 454h1v1h-1zM140 484h1v1h-1zM140 513h1v1h-1zM140 542h1v1h-1zM140 571h1v1h-1zM140 601h1v1h-1zM140 630h1v1h-1zM142 396h1v1h-1zM142 425h1v1h-1zM142 454h1v1h-1zM142 484h1v1h-1zM142 513h1v1h-1zM142 542h1v1h-1zM142 571h1v1h-1zM142 601h1v1h-1zM142 630h1v1h-1zM144 396h1v1h-1zM144 425h1v1h-1zM144 454h1v1h-1zM144 484h1v1h-1zM144 513h1v1h-1zM144 542h1v1h-1zM144 571h1v1h-1zM144 601h1v1h-1zM144 630h1v1h-1zM146 396h1v1h-1zM146 425h1v1h-1zM146 454h1v1h-1zM146 484h1v1h-1zM146 513h1v1h-1zM146 542h1v1h-1zM146 571h1v1h-1zM146 601h1v1h-1zM146 630h1v1h-1zM148 396h1v1h-1zM148 425h1v1h-1zM148 454h1v1h-1zM148 484h1v1h-1zM148 513h1v1h-1zM148 542h1v1h-1zM148 571h1v1h-1zM148 601h1v1h-1zM148 630h1v1h-1zM150 396h1v1h-1zM150 425h1v1h-1zM150 454h1v1h-1zM150 484h1v1h-1zM150 513h1v1h-1zM150 542h1v1h-1zM150 571h1v1h-1zM150 601h1v1h-1zM150 630h1v1h-1zM152 396h1v1h-1zM152 425h1v1h-1zM152 454h1v1h-1zM152 484h1v1h-1zM152 513h1v1h-1zM152 542h1v1h-1zM152 571h1v1h-1zM152 601h1v1h-1zM152 630h1v1h-1zM154 396h1v1h-1zM154 425h1v1h-1zM154 454h1v1h-1zM154 484h1v1h-1zM154 513h1v1h-1zM154 542h1v1h-1zM154 571h1v1h-1zM154 601h1v1h-1zM154 630h1v1h-1zM156 396h1v1h-1zM156 425h1v1h-1zM156 454h1v1h-1zM156 484h1v1h-1zM156 513h1v1h-1zM156 542h1v1h-1zM156 571h1v1h-1zM156 601h1v1h-1zM156 630h1v1h-1zM158 396h1v1h-1zM158 425h1v1h-1zM158 454h1v1h-1zM158 484h1v1h-1zM158 513h1v1h-1zM158 542h1v1h-1zM158 571h1v1h-1zM158 601h1v1h-1zM158 630h1v1h-1zM160 396h1v1h-1zM160 425h1v1h-1zM160 454h1v1h-1zM160 484h1v1h-1zM160 513h1v1h-1zM160 542h1v1h-1zM160 571h1v1h-1zM160 601h1v1h-1zM160 630h1v1h-1zM162 396h1v1h-1zM162 425h1v1h-1zM162 454h1v1h-1zM162 484h1v1h-1zM162 513h1v1h-1zM162 542h1v1h-1zM162 571h1v1h-1zM162 601h1v1h-1zM162 630h1v1h-1zM164 396h1v1h-1zM164 425h1v1h-1zM164 454h1v1h-1zM164 484h1v1h-1zM164 513h1v1h-1zM164 542h1v1h-1zM164 571h1v1h-1zM164 601h1v1h-1zM164 630h1v1h-1zM166 396h1v1h-1zM166 425h1v1h-1zM166 454h1v1h-1zM166 484h1v1h-1zM166 513h1v1h-1zM166 542h1v1h-1zM166 571h1v1h-1zM166 601h1v1h-1zM166 630h1v1h-1zM168 396h1v1h-1zM168 425h1v1h-1zM168 454h1v1h-1zM168 484h1v1h-1zM168 513h1v1h-1zM168 542h1v1h-1zM168 571h1v1h-1zM168 601h1v1h-1zM168 630h1v1h-1zM170 396h1v1h-1zM170 425h1v1h-1zM170 454h1v1h-1zM170 484h1v1h-1zM170 513h1v1h-1zM170 542h1v1h-1zM170 571h1v1h-1zM170 601h1v1h-1zM170 630h1v1h-1zM172 396h1v1h-1zM172 425h1v1h-1zM172 454h1v1h-1zM172 484h1v1h-1zM172 513h1v1h-1zM172 542h1v1h-1zM172 571h1v1h-1zM172 601h1v1h-1zM172 630h1v1h-1zM174 396h1v1h-1zM174 425h1v1h-1zM174 454h1v1h-1zM174 484h1v1h-1zM174 513h1v1h-1zM174 542h1v1h-1zM174 571h1v1h-1zM174 601h1v1h-1zM174 630h1v1h-1zM176 396h1v1h-1zM176 425h1v1h-1zM176 454h1v1h-1zM176 484h1v1h-1zM176 513h1v1h-1zM176 542h1v1h-1zM176 571h1v1h-1zM176 601h1v1h-1zM176 630h1v1h-1zM178 396h1v1h-1zM178 425h1v1h-1zM178 454h1v1h-1zM178 484h1v1h-1zM178 513h1v1h-1zM178 542h1v1h-1zM178 571h1v1h-1zM178 601h1v1h-1zM178 630h1v1h-1zM180 396h1v1h-1zM180 425h1v1h-1zM180 454h1v1h-1zM180 484h1v1h-1zM180 513h1v1h-1zM180 542h1v1h-1zM180 571h1v1h-1zM180 601h1v1h-1zM180 630h1v1h-1zM182 396h1v1h-1zM182 425h1v1h-1zM182 454h1v1h-1zM182 484h1v1h-1zM182 513h1v1h-1zM182 542h1v1h-1zM182 571h1v1h-1zM182 601h1v1h-1zM182 630h1v1h-1zM184 396h1v1h-1zM184 425h1v1h-1zM184 454h1v1h-1zM184 484h1v1h-1zM184 513h1v1h-1zM184 542h1v1h-1zM184 571h1v1h-1zM184 601h1v1h-1zM184 630h1v1h-1zM186 396h1v1h-1zM186 425h1v1h-1zM186 454h1v1h-1zM186 484h1v1h-1zM186 513h1v1h-1zM186 542h1v1h-1zM186 571h1v1h-1zM186 601h1v1h-1zM186 630h1v1h-1zM188 396h1v1h-1zM188 425h1v1h-1zM188 454h1v1h-1zM188 484h1v1h-1zM188 513h1v1h-1zM188 542h1v1h-1zM188 571h1v1h-1zM188 601h1v1h-1zM188 630h1v1h-1zM190 396h1v1h-1zM190 425h1v1h-1zM190 454h1v1h-1zM190 484h1v1h-1zM190 513h1v1h-1zM190 542h1v1h-1zM190 571h1v1h-1zM190 601h1v1h-1zM190 630h1v1h-1zM192 396h1v1h-1zM192 425h1v1h-1zM192 454h1v1h-1zM192 484h1v1h-1zM192 513h1v1h-1zM192 542h1v1h-1zM192 571h1v1h-1zM192 601h1v1h-1zM192 630h1v1h-1zM194 396h1v1h-1zM194 425h1v1h-1zM194 454h1v1h-1zM194 484h1v1h-1zM194 513h1v1h-1zM194 542h1v1h-1zM194 571h1v1h-1zM194 601h1v1h-1zM194 630h1v1h-1zM196 396h1v1h-1zM196 425h1v1h-1zM196 454h1v1h-1zM196 484h1v1h-1zM196 513h1v1h-1zM196 542h1v1h-1zM196 571h1v1h-1zM196 601h1v1h-1zM196 630h1v1h-1zM198 396h1v1h-1zM198 425h1v1h-1zM198 454h1v1h-1zM198 484h1v1h-1zM198 513h1v1h-1zM198 542h1v1h-1zM198 571h1v1h-1zM198 601h1v1h-1zM198 630h1v1h-1zM200 396h1v1h-1zM200 425h1v1h-1zM200 454h1v1h-1zM200 484h1v1h-1zM200 513h1v1h-1zM200 542h1v1h-1zM200 571h1v1h-1zM200 601h1v1h-1zM200 630h1v1h-1zM202 396h1v1h-1zM202 425h1v1h-1zM202 454h1v1h-1zM202 484h1v1h-1zM202 513h1v1h-1zM202 542h1v1h-1zM202 571h1v1h-1zM202 601h1v1h-1zM202 630h1v1h-1zM204 396h1v1h-1zM204 425h1v1h-1zM204 454h1v1h-1zM204 484h1v1h-1zM204 513h1v1h-1zM204 542h1v1h-1zM204 571h1v1h-1zM204 601h1v1h-1zM204 630h1v1h-1zM206 396h1v1h-1zM206 425h1v1h-1zM206 454h1v1h-1zM206 484h1v1h-1zM206 513h1v1h-1zM206 542h1v1h-1zM206 571h1v1h-1zM206 601h1v1h-1zM206 630h1v1h-1zM208 396h1v1h-1zM208 425h1v1h-1zM208 454h1v1h-1zM208 484h1v1h-1zM208 513h1v1h-1zM208 542h1v1h-1zM208 571h1v1h-1zM208 601h1v1h-1zM208 630h1v1h-1zM210 396h1v1h-1zM210 425h1v1h-1zM210 454h1v1h-1zM210 484h1v1h-1zM210 513h1v1h-1zM210 542h1v1h-1zM210 571h1v1h-1zM210 601h1v1h-1zM210 630h1v1h-1zM212 396h1v1h-1zM212 425h1v1h-1zM212 454h1v1h-1zM212 484h1v1h-1zM212 513h1v1h-1zM212 542h1v1h-1zM212 571h1v1h-1zM212 601h1v1h-1zM212 630h1v1h-1zM214 396h1v1h-1zM214 425h1v1h-1zM214 454h1v1h-1zM214 484h1v1h-1zM214 513h1v1h-1zM214 542h1v1h-1zM214 571h1v1h-1zM214 601h1v1h-1zM214 630h1v1h-1zM216 396h1v1h-1zM216 425h1v1h-1zM216 454h1v1h-1zM216 484h1v1h-1zM216 513h1v1h-1zM216 542h1v1h-1zM216 571h1v1h-1zM216 601h1v1h-1zM216 630h1v1h-1zM218 396h1v1h-1zM218 425h1v1h-1zM218 454h1v1h-1zM218 484h1v1h-1zM218 513h1v1h-1zM218 542h1v1h-1zM218 571h1v1h-1zM218 601h1v1h-1zM218 630h1v1h-1zM220 396h1v1h-1zM220 425h1v1h-1zM220 454h1v1h-1zM220 484h1v1h-1zM220 513h1v1h-1zM220 542h1v1h-1zM220 571h1v1h-1zM220 601h1v1h-1zM220 630h1v1h-1zM222 396h1v1h-1zM222 425h1v1h-1zM222 454h1v1h-1zM222 484h1v1h-1zM222 513h1v1h-1zM222 542h1v1h-1zM222 571h1v1h-1zM222 601h1v1h-1zM222 630h1v1h-1zM224 396h1v1h-1zM224 425h1v1h-1zM224 454h1v1h-1zM224 484h1v1h-1zM224 513h1v1h-1zM224 542h1v1h-1zM224 571h1v1h-1zM224 601h1v1h-1zM224 630h1v1h-1zM225 368h1v1h-1zM225 370h1v1h-1zM225 372h1v1h-1zM225 374h1v1h-1zM225 376h1v1h-1zM225 378h1v1h-1zM225 380h1v1h-1zM225 382h1v1h-1zM225 384h1v1h-1zM225 386h1v1h-1zM225 388h1v1h-1zM225 390h1v1h-1zM225 392h1v1h-1zM225 394h1v1h-1zM225 396h1v1h-1zM225 398h1v1h-1zM225 400h1v1h-1zM225 402h1v1h-1zM225 404h1v1h-1zM225 406h1v1h-1zM225 408h1v1h-1zM225 410h1v1h-1zM225 412h1v1h-1zM225 414h1v1h-1zM225 416h1v1h-1zM225 418h1v1h-1zM225 420h1v1h-1zM225 422h1v1h-1zM225 424h1v1h-1zM225 426h1v1h-1zM225 428h1v1h-1zM225 430h1v1h-1zM225 432h1v1h-1zM225 434h1v1h-1zM225 436h1v1h-1zM225 438h1v1h-1zM225 440h1v1h-1zM225 442h1v1h-1zM225 444h1v1h-1zM225 446h1v1h-1zM225 448h1v1h-1zM225 450h1v1h-1zM225 452h1v1h-1zM225 454h1v1h-1zM225 456h1v1h-1zM225 458h1v1h-1zM225 460h1v1h-1zM225 462h1v1h-1zM225 464h1v1h-1zM225 466h1v1h-1zM225 468h1v1h-1zM225 470h1v1h-1zM225 472h1v1h-1zM225 474h1v1h-1zM225 476h1v1h-1zM225 478h1v1h-1zM225 480h1v1h-1zM225 482h1v1h-1zM225 484h1v1h-1zM225 486h1v1h-1zM225 488h1v1h-1zM225 490h1v1h-1zM225 492h1v1h-1zM225 494h1v1h-1zM225 496h1v1h-1zM225 498h1v1h-1zM225 500h1v1h-1zM225 502h1v1h-1zM225 504h1v1h-1zM225 506h1v1h-1zM225 508h1v1h-1zM225 510h1v1h-1zM225 512h1v1h-1zM225 514h1v1h-1zM225 516h1v1h-1zM225 518h1v1h-1zM225 520h1v1h-1zM225 522h1v1h-1zM225 524h1v1h-1zM225 526h1v1h-1zM225 528h1v1h-1zM225 530h1v1h-1zM225 532h1v1h-1zM225 534h1v1h-1zM225 536h1v1h-1zM225 538h1v1h-1zM225 540h1v1h-1zM225 542h1v1h-1zM225 544h1v1h-1zM225 546h1v1h-1zM225 548h1v1h-1zM225 550h1v1h-1zM225 552h1v1h-1zM225 554h1v1h-1zM225 556h1v1h-1zM225 558h1v1h-1zM225 560h1v1h-1zM225 562h1v1h-1zM225 564h1v1h-1zM225 566h1v1h-1zM225 568h1v1h-1zM225 570h1v1h-1zM225 572h1v1h-1zM225 574h1v1h-1zM225 576h1v1h-1zM225 578h1v1h-1zM225 580h1v1h-1zM225 582h1v1h-1zM225 584h1v1h-1zM225 586h1v1h-1zM225 588h1v1h-1zM225 590h1v1h-1zM225 592h1v1h-1zM225 594h1v1h-1zM225 596h1v1h-1zM225 598h1v1h-1zM225 600h1v1h-1zM225 602h1v1h-1zM225 604h1v1h-1zM225 606h1v1h-1zM225 608h1v1h-1zM225 610h1v1h-1zM225 612h1v1h-1zM225 614h1v1h-1zM225 616h1v1h-1zM225 618h1v1h-1zM225 620h1v1h-1zM225 622h1v1h-1zM225 624h1v1h-1zM225 626h1v1h-1zM225 628h1v1h-1zM225 630h1v1h-1zM225 632h1v1h-1zM225 634h1v1h-1zM225 636h1v1h-1zM225 638h1v1h-1zM225 640h1v1h-1zM225 642h1v1h-1zM225 644h1v1h-1zM225 646h1v1h-1zM225 648h1v1h-1zM225 650h1v1h-1zM225 652h1v1h-1zM225 654h1v1h-1zM225 656h1v1h-1zM225 658h1v1h-1zM226 396h1v1h-1zM226 425h1v1h-1zM226 454h1v1h-1zM226 484h1v1h-1zM226 513h1v1h-1zM226 542h1v1h-1zM226 571h1v1h-1zM226 601h1v1h-1zM226 630h1v1h-1zM228 396h1v1h-1zM228 425h1v1h-1zM228 454h1v1h-1zM228 484h1v1h-1zM228 513h1v1h-1zM228 542h1v1h-1zM228 571h1v1h-1zM228 601h1v1h-1zM228 630h1v1h-1zM230 396h1v1h-1zM230 425h1v1h-1zM230 454h1v1h-1zM230 484h1v1h-1zM230 513h1v1h-1zM230 542h1v1h-1zM230 571h1v1h-1zM230 601h1v1h-1zM230 630h1v1h-1zM232 396h1v1h-1zM232 425h1v1h-1zM232 454h1v1h-1zM232 484h1v1h-1zM232 513h1v1h-1zM232 542h1v1h-1zM232 571h1v1h-1zM232 601h1v1h-1zM232 630h1v1h-1zM234 396h1v1h-1zM234 425h1v1h-1zM234 454h1v1h-1zM234 484h1v1h-1zM234 513h1v1h-1zM234 542h1v1h-1zM234 571h1v1h-1zM234 601h1v1h-1zM234 630h1v1h-1zM236 396h1v1h-1zM236 425h1v1h-1zM236 454h1v1h-1zM236 484h1v1h-1zM236 513h1v1h-1zM236 542h1v1h-1zM236 571h1v1h-1zM236 601h1v1h-1zM236 630h1v1h-1zM238 396h1v1h-1zM238 425h1v1h-1zM238 454h1v1h-1zM238 484h1v1h-1zM238 513h1v1h-1zM238 542h1v1h-1zM238 571h1v1h-1zM238 601h1v1h-1zM238 630h1v1h-1zM240 396h1v1h-1zM240 425h1v1h-1zM240 454h1v1h-1zM240 484h1v1h-1zM240 513h1v1h-1zM240 542h1v1h-1zM240 571h1v1h-1zM240 601h1v1h-1zM240 630h1v1h-1zM242 396h1v1h-1zM242 425h1v1h-1zM242 454h1v1h-1zM242 484h1v1h-1zM242 513h1v1h-1zM242 542h1v1h-1zM242 571h1v1h-1zM242 601h1v1h-1zM242 630h1v1h-1zM244 396h1v1h-1zM244 425h1v1h-1zM244 454h1v1h-1zM244 484h1v1h-1zM244 513h1v1h-1zM244 542h1v1h-1zM244 571h1v1h-1zM244 601h1v1h-1zM244 630h1v1h-1zM246 396h1v1h-1zM246 425h1v1h-1zM246 454h1v1h-1zM246 484h1v1h-1zM246 513h1v1h-1zM246 542h1v1h-1zM246 571h1v1h-1zM246 601h1v1h-1zM246 630h1v1h-1zM248 396h1v1h-1zM248 425h1v1h-1zM248 454h1v1h-1zM248 484h1v1h-1zM248 513h1v1h-1zM248 542h1v1h-1zM248 571h1v1h-1zM248 601h1v1h-1zM248 630h1v1h-1zM250 396h1v1h-1zM250 425h1v1h-1zM250 454h1v1h-1zM250 484h1v1h-1zM250 513h1v1h-1zM250 542h1v1h-1zM250 571h1v1h-1zM250 601h1v1h-1zM250 630h1v1h-1zM252 396h1v1h-1zM252 425h1v1h-1zM252 454h1v1h-1zM252 484h1v1h-1zM252 513h1v1h-1zM252 542h1v1h-1zM252 571h1v1h-1zM252 601h1v1h-1zM252 630h1v1h-1zM254 396h1v1h-1zM254 425h1v1h-1zM254 454h1v1h-1zM254 484h1v1h-1zM254 513h1v1h-1zM254 542h1v1h-1zM254 571h1v1h-1zM254 601h1v1h-1zM254 630h1v1h-1zM256 396h1v1h-1zM256 425h1v1h-1zM256 454h1v1h-1zM256 484h1v1h-1zM256 513h1v1h-1zM256 542h1v1h-1zM256 571h1v1h-1zM256 601h1v1h-1zM256 630h1v1h-1zM258 396h1v1h-1zM258 425h1v1h-1zM258 454h1v1h-1zM258 484h1v1h-1zM258 513h1v1h-1zM258 542h1v1h-1zM258 571h1v1h-1zM258 601h1v1h-1zM258 630h1v1h-1zM260 396h1v1h-1zM260 425h1v1h-1zM260 454h1v1h-1zM260 484h1v1h-1zM260 513h1v1h-1zM260 542h1v1h-1zM260 571h1v1h-1zM260 601h1v1h-1zM260 630h1v1h-1zM262 396h1v1h-1zM262 425h1v1h-1zM262 454h1v1h-1zM262 484h1v1h-1zM262 513h1v1h-1zM262 542h1v1h-1zM262 571h1v1h-1zM262 601h1v1h-1zM262 630h1v1h-1zM264 396h1v1h-1zM264 425h1v1h-1zM264 454h1v1h-1zM264 484h1v1h-1zM264 513h1v1h-1zM264 542h1v1h-1zM264 571h1v1h-1zM264 601h1v1h-1zM264 630h1v1h-1zM266 396h1v1h-1zM266 425h1v1h-1zM266 454h1v1h-1zM266 484h1v1h-1zM266 513h1v1h-1zM266 542h1v1h-1zM266 571h1v1h-1zM266 601h1v1h-1zM266 630h1v1h-1zM268 396h1v1h-1zM268 425h1v1h-1zM268 454h1v1h-1zM268 484h1v1h-1zM268 513h1v1h-1zM268 542h1v1h-1zM268 571h1v1h-1zM268 601h1v1h-1zM268 630h1v1h-1zM270 396h1v1h-1zM270 425h1v1h-1zM270 454h1v1h-1zM270 484h1v1h-1zM270 513h1v1h-1zM270 542h1v1h-1zM270 571h1v1h-1zM270 601h1v1h-1zM270 630h1v1h-1zM272 396h1v1h-1zM272 425h1v1h-1zM272 454h1v1h-1zM272 484h1v1h-1zM272 513h1v1h-1zM272 542h1v1h-1zM272 571h1v1h-1zM272 601h1v1h-1zM272 630h1v1h-1zM274 396h1v1h-1zM274 425h1v1h-1zM274 454h1v1h-1zM274 484h1v1h-1zM274 513h1v1h-1zM274 542h1v1h-1zM274 571h1v1h-1zM274 601h1v1h-1zM274 630h1v1h-1zM276 396h1v1h-1zM276 425h1v1h-1zM276 454h1v1h-1zM276 484h1v1h-1zM276 513h1v1h-1zM276 542h1v1h-1zM276 571h1v1h-1zM276 601h1v1h-1zM276 630h1v1h-1zM278 396h1v1h-1zM278 425h1v1h-1zM278 454h1v1h-1zM278 484h1v1h-1zM278 513h1v1h-1zM278 542h1v1h-1zM278 571h1v1h-1zM278 601h1v1h-1zM278 630h1v1h-1zM280 396h1v1h-1zM280 425h1v1h-1zM280 454h1v1h-1zM280 484h1v1h-1zM280 513h1v1h-1zM280 542h1v1h-1zM280 571h1v1h-1zM280 601h1v1h-1zM280 630h1v1h-1zM282 396h1v1h-1zM282 425h1v1h-1zM282 454h1v1h-1zM282 484h1v1h-1zM282 513h1v1h-1zM282 542h1v1h-1zM282 571h1v1h-1zM282 601h1v1h-1zM282 630h1v1h-1zM284 396h1v1h-1zM284 425h1v1h-1zM284 454h1v1h-1zM284 484h1v1h-1zM284 513h1v1h-1zM284 542h1v1h-1zM284 571h1v1h-1zM284 601h1v1h-1zM284 630h1v1h-1zM286 396h1v1h-1zM286 425h1v1h-1zM286 454h1v1h-1zM286 484h1v1h-1zM286 513h1v1h-1zM286 542h1v1h-1zM286 571h1v1h-1zM286 601h1v1h-1zM286 630h1v1h-1zM288 396h1v1h-1zM288 425h1v1h-1zM288 454h1v1h-1zM288 484h1v1h-1zM288 513h1v1h-1zM288 542h1v1h-1zM288 571h1v1h-1zM288 601h1v1h-1zM288 630h1v1h-1zM290 396h1v1h-1zM290 425h1v1h-1zM290 454h1v1h-1zM290 484h1v1h-1zM290 513h1v1h-1zM290 542h1v1h-1zM290 571h1v1h-1zM290 601h1v1h-1zM290 630h1v1h-1zM292 396h1v1h-1zM292 425h1v1h-1zM292 454h1v1h-1zM292 484h1v1h-1zM292 513h1v1h-1zM292 542h1v1h-1zM292 571h1v1h-1zM292 601h1v1h-1zM292 630h1v1h-1zM294 396h1v1h-1zM294 425h1v1h-1zM294 454h1v1h-1zM294 484h1v1h-1zM294 513h1v1h-1zM294 542h1v1h-1zM294 571h1v1h-1zM294 601h1v1h-1zM294 630h1v1h-1zM296 396h1v1h-1zM296 425h1v1h-1zM296 454h1v1h-1zM296 484h1v1h-1zM296 513h1v1h-1zM296 542h1v1h-1zM296 571h1v1h-1zM296 601h1v1h-1zM296 630h1v1h-1zM298 396h1v1h-1zM298 425h1v1h-1zM298 454h1v1h-1zM298 484h1v1h-1zM298 513h1v1h-1zM298 542h1v1h-1zM298 571h1v1h-1zM298 601h1v1h-1zM298 630h1v1h-1zM300 396h1v1h-1zM300 425h1v1h-1zM300 454h1v1h-1zM300 484h1v1h-1zM300 513h1v1h-1zM300 542h1v1h-1zM300 571h1v1h-1zM300 601h1v1h-1zM300 630h1v1h-1zM302 396h1v1h-1zM302 425h1v1h-1zM302 454h1v1h-1zM302 484h1v1h-1zM302 513h1v1h-1zM302 542h1v1h-1zM302 571h1v1h-1zM302 601h1v1h-1zM302 630h1v1h-1zM304 396h1v1h-1zM304 425h1v1h-1zM304 454h1v1h-1zM304 484h1v1h-1zM304 513h1v1h-1zM304 542h1v1h-1zM304 571h1v1h-1zM304 601h1v1h-1zM304 630h1v1h-1zM306 396h1v1h-1zM306 425h1v1h-1zM306 454h1v1h-1zM306 484h1v1h-1zM306 513h1v1h-1zM306 542h1v1h-1zM306 571h1v1h-1zM306 601h1v1h-1zM306 630h1v1h-1zM308 396h1v1h-1zM308 425h1v1h-1zM308 454h1v1h-1zM308 484h1v1h-1zM308 513h1v1h-1zM308 542h1v1h-1zM308 571h1v1h-1zM308 601h1v1h-1zM308 630h1v1h-1zM310 396h1v1h-1zM310 425h1v1h-1zM310 454h1v1h-1zM310 484h1v1h-1zM310 513h1v1h-1zM310 542h1v1h-1zM310 571h1v1h-1zM310 601h1v1h-1zM310 630h1v1h-1zM312 396h1v1h-1zM312 425h1v1h-1zM312 454h1v1h-1zM312 484h1v1h-1zM312 513h1v1h-1zM312 542h1v1h-1zM312 571h1v1h-1zM312 601h1v1h-1zM312 630h1v1h-1zM314 396h1v1h-1zM314 425h1v1h-1zM314 454h1v1h-1zM314 484h1v1h-1zM314 513h1v1h-1zM314 542h1v1h-1zM314 571h1v1h-1zM314 601h1v1h-1zM314 630h1v1h-1zM316 396h1v1h-1zM316 425h1v1h-1zM316 454h1v1h-1zM316 484h1v1h-1zM316 513h1v1h-1zM316 542h1v1h-1zM316 571h1v1h-1zM316 601h1v1h-1zM316 630h1v1h-1zM318 396h1v1h-1zM318 425h1v1h-1zM318 454h1v1h-1zM318 484h1v1h-1zM318 513h1v1h-1zM318 542h1v1h-1zM318 571h1v1h-1zM318 601h1v1h-1zM318 630h1v1h-1zM320 396h1v1h-1zM320 425h1v1h-1zM320 454h1v1h-1zM320 484h1v1h-1zM320 513h1v1h-1zM320 542h1v1h-1zM320 571h1v1h-1zM320 601h1v1h-1zM320 630h1v1h-1zM322 396h1v1h-1zM322 425h1v1h-1zM322 454h1v1h-1zM322 484h1v1h-1zM322 513h1v1h-1zM322 542h1v1h-1zM322 571h1v1h-1zM322 601h1v1h-1zM322 630h1v1h-1zM323 368h1v1h-1zM323 370h1v1h-1zM323 372h1v1h-1zM323 374h1v1h-1zM323 376h1v1h-1zM323 378h1v1h-1zM323 380h1v1h-1zM323 382h1v1h-1zM323 384h1v1h-1zM323 386h1v1h-1zM323 388h1v1h-1zM323 390h1v1h-1zM323 392h1v1h-1zM323 394h1v1h-1zM323 396h1v1h-1zM323 398h1v1h-1zM323 400h1v1h-1zM323 402h1v1h-1zM323 404h1v1h-1zM323 406h1v1h-1zM323 408h1v1h-1zM323 410h1v1h-1zM323 412h1v1h-1zM323 414h1v1h-1zM323 416h1v1h-1zM323 418h1v1h-1zM323 420h1v1h-1zM323 422h1v1h-1zM323 424h1v1h-1zM323 426h1v1h-1zM323 428h1v1h-1zM323 430h1v1h-1zM323 432h1v1h-1zM323 434h1v1h-1zM323 436h1v1h-1zM323 438h1v1h-1zM323 440h1v1h-1zM323 442h1v1h-1zM323 444h1v1h-1zM323 446h1v1h-1zM323 448h1v1h-1zM323 450h1v1h-1zM323 452h1v1h-1zM323 454h1v1h-1zM323 456h1v1h-1zM323 458h1v1h-1zM323 460h1v1h-1zM323 462h1v1h-1zM323 464h1v1h-1zM323 466h1v1h-1zM323 468h1v1h-1zM323 470h1v1h-1zM323 472h1v1h-1zM323 474h1v1h-1zM323 476h1v1h-1zM323 478h1v1h-1zM323 480h1v1h-1zM323 482h1v1h-1zM323 484h1v1h-1zM323 486h1v1h-1zM323 488h1v1h-1zM323 490h1v1h-1zM323 492h1v1h-1zM323 494h1v1h-1zM323 496h1v1h-1zM323 498h1v1h-1zM323 500h1v1h-1zM323 502h1v1h-1zM323 504h1v1h-1zM323 506h1v1h-1zM323 508h1v1h-1zM323 510h1v1h-1zM323 512h1v1h-1zM323 514h1v1h-1zM323 516h1v1h-1zM323 518h1v1h-1zM323 520h1v1h-1zM323 522h1v1h-1zM323 524h1v1h-1zM323 526h1v1h-1zM323 528h1v1h-1zM323 530h1v1h-1zM323 532h1v1h-1zM323 534h1v1h-1zM323 536h1v1h-1zM323 538h1v1h-1zM323 540h1v1h-1zM323 542h1v1h-1zM323 544h1v1h-1zM323 546h1v1h-1zM323 548h1v1h-1zM323 550h1v1h-1zM323 552h1v1h-1zM323 554h1v1h-1zM323 556h1v1h-1zM323 558h1v1h-1zM323 560h1v1h-1zM323 562h1v1h-1zM323 564h1v1h-1zM323 566h1v1h-1zM323 568h1v1h-1zM323 570h1v1h-1zM323 572h1v1h-1zM323 574h1v1h-1zM323 576h1v1h-1zM323 578h1v1h-1zM323 580h1v1h-1zM323 582h1v1h-1zM323 584h1v1h-1zM323 586h1v1h-1zM323 588h1v1h-1zM323 590h1v1h-1zM323 592h1v1h-1zM323 594h1v1h-1zM323 596h1v1h-1zM323 598h1v1h-1zM323 600h1v1h-1zM323 602h1v1h-1zM323 604h1v1h-1zM323 606h1v1h-1zM323 608h1v1h-1zM323 610h1v1h-1zM323 612h1v1h-1zM323 614h1v1h-1zM323 616h1v1h-1zM323 618h1v1h-1zM323 620h1v1h-1zM323 622h1v1h-1zM323 624h1v1h-1zM323 626h1v1h-1zM323 628h1v1h-1zM323 630h1v1h-1zM323 632h1v1h-1zM323 634h1v1h-1zM323 636h1v1h-1zM323 638h1v1h-1zM323 640h1v1h-1zM323 642h1v1h-1zM323 644h1v1h-1zM323 646h1v1h-1zM323 648h1v1h-1zM323 650h1v1h-1zM323 652h1v1h-1zM323 654h1v1h-1zM323 656h1v1h-1zM323 658h1v1h-1zM324 396h1v1h-1zM324 425h1v1h-1zM324 454h1v1h-1zM324 484h1v1h-1zM324 513h1v1h-1zM324 542h1v1h-1zM324 571h1v1h-1zM324 601h1v1h-1zM324 630h1v1h-1zM326 396h1v1h-1zM326 425h1v1h-1zM326 454h1v1h-1zM326 484h1v1h-1zM326 513h1v1h-1zM326 542h1v1h-1zM326 571h1v1h-1zM326 601h1v1h-1zM326 630h1v1h-1zM328 396h1v1h-1zM328 425h1v1h-1zM328 454h1v1h-1zM328 484h1v1h-1zM328 513h1v1h-1zM328 542h1v1h-1zM328 571h1v1h-1zM328 601h1v1h-1zM328 630h1v1h-1zM330 396h1v1h-1zM330 425h1v1h-1zM330 454h1v1h-1zM330 484h1v1h-1zM330 513h1v1h-1zM330 542h1v1h-1zM330 571h1v1h-1zM330 601h1v1h-1zM330 630h1v1h-1zM332 396h1v1h-1zM332 425h1v1h-1zM332 454h1v1h-1zM332 484h1v1h-1zM332 513h1v1h-1zM332 542h1v1h-1zM332 571h1v1h-1zM332 601h1v1h-1zM332 630h1v1h-1zM334 396h1v1h-1zM334 425h1v1h-1zM334 454h1v1h-1zM334 484h1v1h-1zM334 513h1v1h-1zM334 542h1v1h-1zM334 571h1v1h-1zM334 601h1v1h-1zM334 630h1v1h-1zM336 396h1v1h-1zM336 425h1v1h-1zM336 454h1v1h-1zM336 484h1v1h-1zM336 513h1v1h-1zM336 542h1v1h-1zM336 571h1v1h-1zM336 601h1v1h-1zM336 630h1v1h-1zM338 396h1v1h-1zM338 425h1v1h-1zM338 454h1v1h-1zM338 484h1v1h-1zM338 513h1v1h-1zM338 542h1v1h-1zM338 571h1v1h-1zM338 601h1v1h-1zM338 630h1v1h-1zM340 396h1v1h-1zM340 425h1v1h-1zM340 454h1v1h-1zM340 484h1v1h-1zM340 513h1v1h-1zM340 542h1v1h-1zM340 571h1v1h-1zM340 601h1v1h-1zM340 630h1v1h-1zM342 396h1v1h-1zM342 425h1v1h-1zM342 454h1v1h-1zM342 484h1v1h-1zM342 513h1v1h-1zM342 542h1v1h-1zM342 571h1v1h-1zM342 601h1v1h-1zM342 630h1v1h-1zM344 396h1v1h-1zM344 425h1v1h-1zM344 454h1v1h-1zM344 484h1v1h-1zM344 513h1v1h-1zM344 542h1v1h-1zM344 571h1v1h-1zM344 601h1v1h-1zM344 630h1v1h-1zM346 396h1v1h-1zM346 425h1v1h-1zM346 454h1v1h-1zM346 484h1v1h-1zM346 513h1v1h-1zM346 542h1v1h-1zM346 571h1v1h-1zM346 601h1v1h-1zM346 630h1v1h-1zM348 396h1v1h-1zM348 425h1v1h-1zM348 454h1v1h-1zM348 484h1v1h-1zM348 513h1v1h-1zM348 542h1v1h-1zM348 571h1v1h-1zM348 601h1v1h-1zM348 630h1v1h-1zM350 396h1v1h-1zM350 425h1v1h-1zM350 454h1v1h-1zM350 484h1v1h-1zM350 513h1v1h-1zM350 542h1v1h-1zM350 571h1v1h-1zM350 601h1v1h-1zM350 630h1v1h-1zM352 396h1v1h-1zM352 425h1v1h-1zM352 454h1v1h-1zM352 484h1v1h-1zM352 513h1v1h-1zM352 542h1v1h-1zM352 571h1v1h-1zM352 601h1v1h-1zM352 630h1v1h-1zM354 396h1v1h-1zM354 425h1v1h-1zM354 454h1v1h-1zM354 484h1v1h-1zM354 513h1v1h-1zM354 542h1v1h-1zM354 571h1v1h-1zM354 601h1v1h-1zM354 630h1v1h-1zM356 396h1v1h-1zM356 425h1v1h-1zM356 454h1v1h-1zM356 484h1v1h-1zM356 513h1v1h-1zM356 542h1v1h-1zM356 571h1v1h-1zM356 601h1v1h-1zM356 630h1v1h-1zM358 396h1v1h-1zM358 425h1v1h-1zM358 454h1v1h-1zM358 484h1v1h-1zM358 513h1v1h-1zM358 542h1v1h-1zM358 571h1v1h-1zM358 601h1v1h-1zM358 630h1v1h-1zM360 396h1v1h-1zM360 425h1v1h-1zM360 454h1v1h-1zM360 484h1v1h-1zM360 513h1v1h-1zM360 542h1v1h-1zM360 571h1v1h-1zM360 601h1v1h-1zM360 630h1v1h-1zM362 396h1v1h-1zM362 425h1v1h-1zM362 454h1v1h-1zM362 484h1v1h-1zM362 513h1v1h-1zM362 542h1v1h-1zM362 571h1v1h-1zM362 601h1v1h-1zM362 630h1v1h-1zM364 396h1v1h-1zM364 425h1v1h-1zM364 454h1v1h-1zM364 484h1v1h-1zM364 513h1v1h-1zM364 542h1v1h-1zM364 571h1v1h-1zM364 601h1v1h-1zM364 630h1v1h-1zM366 396h1v1h-1zM366 425h1v1h-1zM366 454h1v1h-1zM366 484h1v1h-1zM366 513h1v1h-1zM366 542h1v1h-1zM366 571h1v1h-1zM366 601h1v1h-1zM366 630h1v1h-1zM368 396h1v1h-1zM368 425h1v1h-1zM368 454h1v1h-1zM368 484h1v1h-1zM368 513h1v1h-1zM368 542h1v1h-1zM368 571h1v1h-1zM368 601h1v1h-1zM368 630h1v1h-1zM370 396h1v1h-1zM370 425h1v1h-1zM370 454h1v1h-1zM370 484h1v1h-1zM370 513h1v1h-1zM370 542h1v1h-1zM370 571h1v1h-1zM370 601h1v1h-1zM370 630h1v1h-1zM372 396h1v1h-1zM372 425h1v1h-1zM372 454h1v1h-1zM372 484h1v1h-1zM372 513h1v1h-1zM372 542h1v1h-1zM372 571h1v1h-1zM372 601h1v1h-1zM372 630h1v1h-1zM374 396h1v1h-1zM374 425h1v1h-1zM374 454h1v1h-1zM374 484h1v1h-1zM374 513h1v1h-1zM374 542h1v1h-1zM374 571h1v1h-1zM374 601h1v1h-1zM374 630h1v1h-1zM376 396h1v1h-1zM376 425h1v1h-1zM376 454h1v1h-1zM376 484h1v1h-1zM376 513h1v1h-1zM376 542h1v1h-1zM376 571h1v1h-1zM376 601h1v1h-1zM376 630h1v1h-1zM378 396h1v1h-1zM378 425h1v1h-1zM378 454h1v1h-1zM378 484h1v1h-1zM378 513h1v1h-1zM378 542h1v1h-1zM378 571h1v1h-1zM378 601h1v1h-1zM378 630h1v1h-1zM380 396h1v1h-1zM380 425h1v1h-1zM380 454h1v1h-1zM380 484h1v1h-1zM380 513h1v1h-1zM380 542h1v1h-1zM380 571h1v1h-1zM380 601h1v1h-1zM380 630h1v1h-1zM382 396h1v1h-1zM382 425h1v1h-1zM382 454h1v1h-1zM382 484h1v1h-1zM382 513h1v1h-1zM382 542h1v1h-1zM382 571h1v1h-1zM382 601h1v1h-1zM382 630h1v1h-1zM384 396h1v1h-1zM384 425h1v1h-1zM384 454h1v1h-1zM384 484h1v1h-1zM384 513h1v1h-1zM384 542h1v1h-1zM384 571h1v1h-1zM384 601h1v1h-1zM384 630h1v1h-1zM386 396h1v1h-1zM386 425h1v1h-1zM386 454h1v1h-1zM386 484h1v1h-1zM386 513h1v1h-1zM386 542h1v1h-1zM386 571h1v1h-1zM386 601h1v1h-1zM386 630h1v1h-1zM388 396h1v1h-1zM388 425h1v1h-1zM388 454h1v1h-1zM388 484h1v1h-1zM388 513h1v1h-1zM388 542h1v1h-1zM388 571h1v1h-1zM388 601h1v1h-1zM388 630h1v1h-1zM390 396h1v1h-1zM390 425h1v1h-1zM390 454h1v1h-1zM390 484h1v1h-1zM390 513h1v1h-1zM390 542h1v1h-1zM390 571h1v1h-1zM390 601h1v1h-1zM390 630h1v1h-1zM392 396h1v1h-1zM392 425h1v1h-1zM392 454h1v1h-1zM392 484h1v1h-1zM392 513h1v1h-1zM392 542h1v1h-1zM392 571h1v1h-1zM392 601h1v1h-1zM392 630h1v1h-1zM394 396h1v1h-1zM394 425h1v1h-1zM394 454h1v1h-1zM394 484h1v1h-1zM394 513h1v1h-1zM394 542h1v1h-1zM394 571h1v1h-1zM394 601h1v1h-1zM394 630h1v1h-1zM396 396h1v1h-1zM396 425h1v1h-1zM396 454h1v1h-1zM396 484h1v1h-1zM396 513h1v1h-1zM396 542h1v1h-1zM396 571h1v1h-1zM396 601h1v1h-1zM396 630h1v1h-1zM398 396h1v1h-1zM398 425h1v1h-1zM398 454h1v1h-1zM398 484h1v1h-1zM398 513h1v1h-1zM398 542h1v1h-1zM398 571h1v1h-1zM398 601h1v1h-1zM398 630h1v1h-1zM400 396h1v1h-1zM400 425h1v1h-1zM400 454h1v1h-1zM400 484h1v1h-1zM400 513h1v1h-1zM400 542h1v1h-1zM400 571h1v1h-1zM400 601h1v1h-1zM400 630h1v1h-1zM402 396h1v1h-1zM402 425h1v1h-1zM402 454h1v1h-1zM402 484h1v1h-1zM402 513h1v1h-1zM402 542h1v1h-1zM402 571h1v1h-1zM402 601h1v1h-1zM402 630h1v1h-1zM404 396h1v1h-1zM404 425h1v1h-1zM404 454h1v1h-1zM404 484h1v1h-1zM404 513h1v1h-1zM404 542h1v1h-1zM404 571h1v1h-1zM404 601h1v1h-1zM404 630h1v1h-1zM406 396h1v1h-1zM406 425h1v1h-1zM406 454h1v1h-1zM406 484h1v1h-1zM406 513h1v1h-1zM406 542h1v1h-1zM406 571h1v1h-1zM406 601h1v1h-1zM406 630h1v1h-1zM408 396h1v1h-1zM408 425h1v1h-1zM408 454h1v1h-1zM408 484h1v1h-1zM408 513h1v1h-1zM408 542h1v1h-1zM408 571h1v1h-1zM408 601h1v1h-1zM408 630h1v1h-1zM410 396h1v1h-1zM410 425h1v1h-1zM410 454h1v1h-1zM410 484h1v1h-1zM410 513h1v1h-1zM410 542h1v1h-1zM410 571h1v1h-1zM410 601h1v1h-1zM410 630h1v1h-1zM412 396h1v1h-1zM412 425h1v1h-1zM412 454h1v1h-1zM412 484h1v1h-1zM412 513h1v1h-1zM412 542h1v1h-1zM412 571h1v1h-1zM412 601h1v1h-1zM412 630h1v1h-1zM414 396h1v1h-1zM414 425h1v1h-1zM414 454h1v1h-1zM414 484h1v1h-1zM414 513h1v1h-1zM414 542h1v1h-1zM414 571h1v1h-1zM414 601h1v1h-1zM414 630h1v1h-1zM416 396h1v1h-1zM416 425h1v1h-1zM416 454h1v1h-1zM416 484h1v1h-1zM416 513h1v1h-1zM416 542h1v1h-1zM416 571h1v1h-1zM416 601h1v1h-1zM416 630h1v1h-1zM418 396h1v1h-1zM418 425h1v1h-1zM418 454h1v1h-1zM418 484h1v1h-1zM418 513h1v1h-1zM418 542h1v1h-1zM418 571h1v1h-1zM418 601h1v1h-1zM418 630h1v1h-1zM420 396h1v1h-1zM420 425h1v1h-1zM420 454h1v1h-1zM420 484h1v1h-1zM420 513h1v1h-1zM420 542h1v1h-1zM420 571h1v1h-1zM420 601h1v1h-1zM420 630h1v1h-1zM421 368h1v1h-1zM421 370h1v1h-1zM421 372h1v1h-1zM421 374h1v1h-1zM421 376h1v1h-1zM421 378h1v1h-1zM421 380h1v1h-1zM421 382h1v1h-1zM421 384h1v1h-1zM421 386h1v1h-1zM421 388h1v1h-1zM421 390h1v1h-1zM421 392h1v1h-1zM421 394h1v1h-1zM421 396h1v1h-1zM421 398h1v1h-1zM421 400h1v1h-1zM421 402h1v1h-1zM421 404h1v1h-1zM421 406h1v1h-1zM421 408h1v1h-1zM421 410h1v1h-1zM421 412h1v1h-1zM421 414h1v1h-1zM421 416h1v1h-1zM421 418h1v1h-1zM421 420h1v1h-1zM421 422h1v1h-1zM421 424h1v1h-1zM421 426h1v1h-1zM421 428h1v1h-1zM421 430h1v1h-1zM421 432h1v1h-1zM421 434h1v1h-1zM421 436h1v1h-1zM421 438h1v1h-1zM421 440h1v1h-1zM421 442h1v1h-1zM421 444h1v1h-1zM421 446h1v1h-1zM421 448h1v1h-1zM421 450h1v1h-1zM421 452h1v1h-1zM421 454h1v1h-1zM421 456h1v1h-1zM421 458h1v1h-1zM421 460h1v1h-1zM421 462h1v1h-1zM421 464h1v1h-1zM421 466h1v1h-1zM421 468h1v1h-1zM421 470h1v1h-1zM421 472h1v1h-1zM421 474h1v1h-1zM421 476h1v1h-1zM421 478h1v1h-1zM421 480h1v1h-1zM421 482h1v1h-1zM421 484h1v1h-1zM421 486h1v1h-1zM421 488h1v1h-1zM421 490h1v1h-1zM421 492h1v1h-1zM421 494h1v1h-1zM421 496h1v1h-1zM421 498h1v1h-1zM421 500h1v1h-1zM421 502h1v1h-1zM421 504h1v1h-1zM421 506h1v1h-1zM421 508h1v1h-1zM421 510h1v1h-1zM421 512h1v1h-1zM421 514h1v1h-1zM421 516h1v1h-1zM421 518h1v1h-1zM421 520h1v1h-1zM421 522h1v1h-1zM421 524h1v1h-1zM421 526h1v1h-1zM421 528h1v1h-1zM421 530h1v1h-1zM421 532h1v1h-1zM421 534h1v1h-1zM421 536h1v1h-1zM421 538h1v1h-1zM421 540h1v1h-1zM421 542h1v1h-1zM421 544h1v1h-1zM421 546h1v1h-1zM421 548h1v1h-1zM421 550h1v1h-1zM421 552h1v1h-1zM421 554h1v1h-1zM421 556h1v1h-1zM421 558h1v1h-1zM421 560h1v1h-1zM421 562h1v1h-1zM421 564h1v1h-1zM421 566h1v1h-1zM421 568h1v1h-1zM421 570h1v1h-1zM421 572h1v1h-1zM421 574h1v1h-1zM421 576h1v1h-1zM421 578h1v1h-1zM421 580h1v1h-1zM421 582h1v1h-1zM421 584h1v1h-1zM421 586h1v1h-1zM421 588h1v1h-1zM421 590h1v1h-1zM421 592h1v1h-1zM421 594h1v1h-1zM421 596h1v1h-1zM421 598h1v1h-1zM421 600h1v1h-1zM421 602h1v1h-1zM421 604h1v1h-1zM421 606h1v1h-1zM421 608h1v1h-1zM421 610h1v1h-1zM421 612h1v1h-1zM421 614h1v1h-1zM421 616h1v1h-1zM421 618h1v1h-1zM421 620h1v1h-1zM421 622h1v1h-1zM421 624h1v1h-1zM421 626h1v1h-1zM421 628h1v1h-1zM421 630h1v1h-1zM421 632h1v1h-1zM421 634h1v1h-1zM421 636h1v1h-1zM421 638h1v1h-1zM421 640h1v1h-1zM421 642h1v1h-1zM421 644h1v1h-1zM421 646h1v1h-1zM421 648h1v1h-1zM421 650h1v1h-1zM421 652h1v1h-1zM421 654h1v1h-1zM421 656h1v1h-1zM421 658h1v1h-1zM422 396h1v1h-1zM422 425h1v1h-1zM422 454h1v1h-1zM422 484h1v1h-1zM422 513h1v1h-1zM422 542h1v1h-1zM422 571h1v1h-1zM422 601h1v1h-1zM422 630h1v1h-1zM424 396h1v1h-1zM424 425h1v1h-1zM424 454h1v1h-1zM424 484h1v1h-1zM424 513h1v1h-1zM424 542h1v1h-1zM424 571h1v1h-1zM424 601h1v1h-1zM424 630h1v1h-1zM426 396h1v1h-1zM426 425h1v1h-1zM426 454h1v1h-1zM426 484h1v1h-1zM426 513h1v1h-1zM426 542h1v1h-1zM426 571h1v1h-1zM426 601h1v1h-1zM426 630h1v1h-1zM428 396h1v1h-1zM428 425h1v1h-1zM428 454h1v1h-1zM428 484h1v1h-1zM428 513h1v1h-1zM428 542h1v1h-1zM428 571h1v1h-1zM428 601h1v1h-1zM428 630h1v1h-1zM430 396h1v1h-1zM430 425h1v1h-1zM430 454h1v1h-1zM430 484h1v1h-1zM430 513h1v1h-1zM430 542h1v1h-1zM430 571h1v1h-1zM430 601h1v1h-1zM430 630h1v1h-1zM432 396h1v1h-1zM432 425h1v1h-1zM432 454h1v1h-1zM432 484h1v1h-1zM432 513h1v1h-1zM432 542h1v1h-1zM432 571h1v1h-1zM432 601h1v1h-1zM432 630h1v1h-1zM434 396h1v1h-1zM434 425h1v1h-1zM434 454h1v1h-1zM434 484h1v1h-1zM434 513h1v1h-1zM434 542h1v1h-1zM434 571h1v1h-1zM434 601h1v1h-1zM434 630h1v1h-1zM436 396h1v1h-1zM436 425h1v1h-1zM436 454h1v1h-1zM436 484h1v1h-1zM436 513h1v1h-1zM436 542h1v1h-1zM436 571h1v1h-1zM436 601h1v1h-1zM436 630h1v1h-1zM438 396h1v1h-1zM438 425h1v1h-1zM438 454h1v1h-1zM438 484h1v1h-1zM438 513h1v1h-1zM438 542h1v1h-1zM438 571h1v1h-1zM438 601h1v1h-1zM438 630h1v1h-1zM440 396h1v1h-1zM440 425h1v1h-1zM440 454h1v1h-1zM440 484h1v1h-1zM440 513h1v1h-1zM440 542h1v1h-1zM440 571h1v1h-1zM440 601h1v1h-1zM440 630h1v1h-1zM442 396h1v1h-1zM442 425h1v1h-1zM442 454h1v1h-1zM442 484h1v1h-1zM442 513h1v1h-1zM442 542h1v1h-1zM442 571h1v1h-1zM442 601h1v1h-1zM442 630h1v1h-1zM444 396h1v1h-1zM444 425h1v1h-1zM444 454h1v1h-1zM444 484h1v1h-1zM444 513h1v1h-1zM444 542h1v1h-1zM444 571h1v1h-1zM444 601h1v1h-1zM444 630h1v1h-1zM446 396h1v1h-1zM446 425h1v1h-1zM446 454h1v1h-1zM446 484h1v1h-1zM446 513h1v1h-1zM446 542h1v1h-1zM446 571h1v1h-1zM446 601h1v1h-1zM446 630h1v1h-1zM448 396h1v1h-1zM448 425h1v1h-1zM448 454h1v1h-1zM448 484h1v1h-1zM448 513h1v1h-1zM448 542h1v1h-1zM448 571h1v1h-1zM448 601h1v1h-1zM448 630h1v1h-1zM450 396h1v1h-1zM450 425h1v1h-1zM450 454h1v1h-1zM450 484h1v1h-1zM450 513h1v1h-1zM450 542h1v1h-1zM450 571h1v1h-1zM450 601h1v1h-1zM450 630h1v1h-1zM452 396h1v1h-1zM452 425h1v1h-1zM452 454h1v1h-1zM452 484h1v1h-1zM452 513h1v1h-1zM452 542h1v1h-1zM452 571h1v1h-1zM452 601h1v1h-1zM452 630h1v1h-1zM454 396h1v1h-1zM454 425h1v1h-1zM454 454h1v1h-1zM454 484h1v1h-1zM454 513h1v1h-1zM454 542h1v1h-1zM454 571h1v1h-1zM454 601h1v1h-1zM454 630h1v1h-1zM456 396h1v1h-1zM456 425h1v1h-1zM456 454h1v1h-1zM456 484h1v1h-1zM456 513h1v1h-1zM456 542h1v1h-1zM456 571h1v1h-1zM456 601h1v1h-1zM456 630h1v1h-1zM458 396h1v1h-1zM458 425h1v1h-1zM458 454h1v1h-1zM458 484h1v1h-1zM458 513h1v1h-1zM458 542h1v1h-1zM458 571h1v1h-1zM458 601h1v1h-1zM458 630h1v1h-1zM460 396h1v1h-1zM460 425h1v1h-1zM460 454h1v1h-1zM460 484h1v1h-1zM460 513h1v1h-1zM460 542h1v1h-1zM460 571h1v1h-1zM460 601h1v1h-1zM460 630h1v1h-1zM462 396h1v1h-1zM462 425h1v1h-1zM462 454h1v1h-1zM462 484h1v1h-1zM462 513h1v1h-1zM462 542h1v1h-1zM462 571h1v1h-1zM462 601h1v1h-1zM462 630h1v1h-1zM464 396h1v1h-1zM464 425h1v1h-1zM464 454h1v1h-1zM464 484h1v1h-1zM464 513h1v1h-1zM464 542h1v1h-1zM464 571h1v1h-1zM464 601h1v1h-1zM464 630h1v1h-1zM466 396h1v1h-1zM466 425h1v1h-1zM466 454h1v1h-1zM466 484h1v1h-1zM466 513h1v1h-1zM466 542h1v1h-1zM466 571h1v1h-1zM466 601h1v1h-1zM466 630h1v1h-1zM468 396h1v1h-1zM468 425h1v1h-1zM468 454h1v1h-1zM468 484h1v1h-1zM468 513h1v1h-1zM468 542h1v1h-1zM468 571h1v1h-1zM468 601h1v1h-1zM468 630h1v1h-1zM470 396h1v1h-1zM470 425h1v1h-1zM470 454h1v1h-1zM470 484h1v1h-1zM470 513h1v1h-1zM470 542h1v1h-1zM470 571h1v1h-1zM470 601h1v1h-1zM470 630h1v1h-1zM472 396h1v1h-1zM472 425h1v1h-1zM472 454h1v1h-1zM472 484h1v1h-1zM472 513h1v1h-1zM472 542h1v1h-1zM472 571h1v1h-1zM472 601h1v1h-1zM472 630h1v1h-1zM474 396h1v1h-1zM474 425h1v1h-1zM474 454h1v1h-1zM474 484h1v1h-1zM474 513h1v1h-1zM474 542h1v1h-1zM474 571h1v1h-1zM474 601h1v1h-1zM474 630h1v1h-1zM476 396h1v1h-1zM476 425h1v1h-1zM476 454h1v1h-1zM476 484h1v1h-1zM476 513h1v1h-1zM476 542h1v1h-1zM476 571h1v1h-1zM476 601h1v1h-1zM476 630h1v1h-1zM478 396h1v1h-1zM478 425h1v1h-1zM478 454h1v1h-1zM478 484h1v1h-1zM478 513h1v1h-1zM478 542h1v1h-1zM478 571h1v1h-1zM478 601h1v1h-1zM478 630h1v1h-1zM480 396h1v1h-1zM480 425h1v1h-1zM480 454h1v1h-1zM480 484h1v1h-1zM480 513h1v1h-1zM480 542h1v1h-1zM480 571h1v1h-1zM480 601h1v1h-1zM480 630h1v1h-1zM482 396h1v1h-1zM482 425h1v1h-1zM482 454h1v1h-1zM482 484h1v1h-1zM482 513h1v1h-1zM482 542h1v1h-1zM482 571h1v1h-1zM482 601h1v1h-1zM482 630h1v1h-1zM484 396h1v1h-1zM484 425h1v1h-1zM484 454h1v1h-1zM484 484h1v1h-1zM484 513h1v1h-1zM484 542h1v1h-1zM484 571h1v1h-1zM484 601h1v1h-1zM484 630h1v1h-1zM486 396h1v1h-1zM486 425h1v1h-1zM486 454h1v1h-1zM486 484h1v1h-1zM486 513h1v1h-1zM486 542h1v1h-1zM486 571h1v1h-1zM486 601h1v1h-1zM486 630h1v1h-1zM488 396h1v1h-1zM488 425h1v1h-1zM488 454h1v1h-1zM488 484h1v1h-1zM488 513h1v1h-1zM488 542h1v1h-1zM488 571h1v1h-1zM488 601h1v1h-1zM488 630h1v1h-1zM490 396h1v1h-1zM490 425h1v1h-1zM490 454h1v1h-1zM490 484h1v1h-1zM490 513h1v1h-1zM490 542h1v1h-1zM490 571h1v1h-1zM490 601h1v1h-1zM490 630h1v1h-1zM492 396h1v1h-1zM492 425h1v1h-1zM492 454h1v1h-1zM492 484h1v1h-1zM492 513h1v1h-1zM492 542h1v1h-1zM492 571h1v1h-1zM492 601h1v1h-1zM492 630h1v1h-1zM494 396h1v1h-1zM494 425h1v1h-1zM494 454h1v1h-1zM494 484h1v1h-1zM494 513h1v1h-1zM494 542h1v1h-1zM494 571h1v1h-1zM494 601h1v1h-1zM494 630h1v1h-1zM496 396h1v1h-1zM496 425h1v1h-1zM496 454h1v1h-1zM496 484h1v1h-1zM496 513h1v1h-1zM496 542h1v1h-1zM496 571h1v1h-1zM496 601h1v1h-1zM496 630h1v1h-1zM498 396h1v1h-1zM498 425h1v1h-1zM498 454h1v1h-1zM498 484h1v1h-1zM498 513h1v1h-1zM498 542h1v1h-1zM498 571h1v1h-1zM498 601h1v1h-1zM498 630h1v1h-1zM500 396h1v1h-1zM500 425h1v1h-1zM500 454h1v1h-1zM500 484h1v1h-1zM500 513h1v1h-1zM500 542h1v1h-1zM500 571h1v1h-1zM500 601h1v1h-1zM500 630h1v1h-1zM502 396h1v1h-1zM502 425h1v1h-1zM502 454h1v1h-1zM502 484h1v1h-1zM502 513h1v1h-1zM502 542h1v1h-1zM502 571h1v1h-1zM502 601h1v1h-1zM502 630h1v1h-1zM504 396h1v1h-1zM504 425h1v1h-1zM504 454h1v1h-1zM504 484h1v1h-1zM504 513h1v1h-1zM504 542h1v1h-1zM504 571h1v1h-1zM504 601h1v1h-1zM504 630h1v1h-1zM506 396h1v1h-1zM506 425h1v1h-1zM506 454h1v1h-1zM506 484h1v1h-1zM506 513h1v1h-1zM506 542h1v1h-1zM506 571h1v1h-1zM506 601h1v1h-1zM506 630h1v1h-1zM508 396h1v1h-1zM508 425h1v1h-1zM508 454h1v1h-1zM508 484h1v1h-1zM508 513h1v1h-1zM508 542h1v1h-1zM508 571h1v1h-1zM508 601h1v1h-1zM508 630h1v1h-1zM510 396h1v1h-1zM510 425h1v1h-1zM510 454h1v1h-1zM510 484h1v1h-1zM510 513h1v1h-1zM510 542h1v1h-1zM510 571h1v1h-1zM510 601h1v1h-1zM510 630h1v1h-1zM512 396h1v1h-1zM512 425h1v1h-1zM512 454h1v1h-1zM512 484h1v1h-1zM512 513h1v1h-1zM512 542h1v1h-1zM512 571h1v1h-1zM512 601h1v1h-1zM512 630h1v1h-1zM514 396h1v1h-1zM514 425h1v1h-1zM514 454h1v1h-1zM514 484h1v1h-1zM514 513h1v1h-1zM514 542h1v1h-1zM514 571h1v1h-1zM514 601h1v1h-1zM514 630h1v1h-1zM516 396h1v1h-1zM516 425h1v1h-1zM516 454h1v1h-1zM516 484h1v1h-1zM516 513h1v1h-1zM516 542h1v1h-1zM516 571h1v1h-1zM516 601h1v1h-1zM516 630h1v1h-1zM518 396h1v1h-1zM518 425h1v1h-1zM518 454h1v1h-1zM518 484h1v1h-1zM518 513h1v1h-1zM518 542h1v1h-1zM518 571h1v1h-1zM518 601h1v1h-1zM518 630h1v1h-1zM519 368h1v1h-1zM519 370h1v1h-1zM519 372h1v1h-1zM519 374h1v1h-1zM519 376h1v1h-1zM519 378h1v1h-1zM519 380h1v1h-1zM519 382h1v1h-1zM519 384h1v1h-1zM519 386h1v1h-1zM519 388h1v1h-1zM519 390h1v1h-1zM519 392h1v1h-1zM519 394h1v1h-1zM519 396h1v1h-1zM519 398h1v1h-1zM519 400h1v1h-1zM519 402h1v1h-1zM519 404h1v1h-1zM519 406h1v1h-1zM519 408h1v1h-1zM519 410h1v1h-1zM519 412h1v1h-1zM519 414h1v1h-1zM519 416h1v1h-1zM519 418h1v1h-1zM519 420h1v1h-1zM519 422h1v1h-1zM519 424h1v1h-1zM519 426h1v1h-1zM519 428h1v1h-1zM519 430h1v1h-1zM519 432h1v1h-1zM519 434h1v1h-1zM519 436h1v1h-1zM519 438h1v1h-1zM519 440h1v1h-1zM519 442h1v1h-1zM519 444h1v1h-1zM519 446h1v1h-1zM519 448h1v1h-1zM519 450h1v1h-1zM519 452h1v1h-1zM519 454h1v1h-1zM519 456h1v1h-1zM519 458h1v1h-1zM519 460h1v1h-1zM519 462h1v1h-1zM519 464h1v1h-1zM519 466h1v1h-1zM519 468h1v1h-1zM519 470h1v1h-1zM519 472h1v1h-1zM519 474h1v1h-1zM519 476h1v1h-1zM519 478h1v1h-1zM519 480h1v1h-1zM519 482h1v1h-1zM519 484h1v1h-1zM519 486h1v1h-1zM519 488h1v1h-1zM519 490h1v1h-1zM519 492h1v1h-1zM519 494h1v1h-1zM519 496h1v1h-1zM519 498h1v1h-1zM519 500h1v1h-1zM519 502h1v1h-1zM519 504h1v1h-1zM519 506h1v1h-1zM519 508h1v1h-1zM519 510h1v1h-1zM519 512h1v1h-1zM519 514h1v1h-1zM519 516h1v1h-1zM519 518h1v1h-1zM519 520h1v1h-1zM519 522h1v1h-1zM519 524h1v1h-1zM519 526h1v1h-1zM519 528h1v1h-1zM519 530h1v1h-1zM519 532h1v1h-1zM519 534h1v1h-1zM519 536h1v1h-1zM519 538h1v1h-1zM519 540h1v1h-1zM519 542h1v1h-1zM519 544h1v1h-1zM519 546h1v1h-1zM519 548h1v1h-1zM519 550h1v1h-1zM519 552h1v1h-1zM519 554h1v1h-1zM519 556h1v1h-1zM519 558h1v1h-1zM519 560h1v1h-1zM519 562h1v1h-1zM519 564h1v1h-1zM519 566h1v1h-1zM519 568h1v1h-1zM519 570h1v1h-1zM519 572h1v1h-1zM519 574h1v1h-1zM519 576h1v1h-1zM519 578h1v1h-1zM519 580h1v1h-1zM519 582h1v1h-1zM519 584h1v1h-1zM519 586h1v1h-1zM519 588h1v1h-1zM519 590h1v1h-1zM519 592h1v1h-1zM519 594h1v1h-1zM519 596h1v1h-1zM519 598h1v1h-1zM519 600h1v1h-1zM519 602h1v1h-1zM519 604h1v1h-1zM519 606h1v1h-1zM519 608h1v1h-1zM519 610h1v1h-1zM519 612h1v1h-1zM519 614h1v1h-1zM519 616h1v1h-1zM519 618h1v1h-1zM519 620h1v1h-1zM519 622h1v1h-1zM519 624h1v1h-1zM519 626h1v1h-1zM519 628h1v1h-1zM519 630h1v1h-1zM519 632h1v1h-1zM519 634h1v1h-1zM519 636h1v1h-1zM519 638h1v1h-1zM519 640h1v1h-1zM519 642h1v1h-1zM519 644h1v1h-1zM519 646h1v1h-1zM519 648h1v1h-1zM519 650h1v1h-1zM519 652h1v1h-1zM519 654h1v1h-1zM519 656h1v1h-1zM519 658h1v1h-1zM520 396h1v1h-1zM520 425h1v1h-1zM520 454h1v1h-1zM520 484h1v1h-1zM520 513h1v1h-1zM520 542h1v1h-1zM520 571h1v1h-1zM520 601h1v1h-1zM520 630h1v1h-1zM522 396h1v1h-1zM522 425h1v1h-1zM522 454h1v1h-1zM522 484h1v1h-1zM522 513h1v1h-1zM522 542h1v1h-1zM522 571h1v1h-1zM522 601h1v1h-1zM522 630h1v1h-1zM524 396h1v1h-1zM524 425h1v1h-1zM524 454h1v1h-1zM524 484h1v1h-1zM524 513h1v1h-1zM524 542h1v1h-1zM524 571h1v1h-1zM524 601h1v1h-1zM524 630h1v1h-1zM526 396h1v1h-1zM526 425h1v1h-1zM526 454h1v1h-1zM526 484h1v1h-1zM526 513h1v1h-1zM526 542h1v1h-1zM526 571h1v1h-1zM526 601h1v1h-1zM526 630h1v1h-1zM528 396h1v1h-1zM528 425h1v1h-1zM528 454h1v1h-1zM528 484h1v1h-1zM528 513h1v1h-1zM528 542h1v1h-1zM528 571h1v1h-1zM528 601h1v1h-1zM528 630h1v1h-1zM530 396h1v1h-1zM530 425h1v1h-1zM530 454h1v1h-1zM530 484h1v1h-1zM530 513h1v1h-1zM530 542h1v1h-1zM530 571h1v1h-1zM530 601h1v1h-1zM530 630h1v1h-1zM532 396h1v1h-1zM532 425h1v1h-1zM532 454h1v1h-1zM532 484h1v1h-1zM532 513h1v1h-1zM532 542h1v1h-1zM532 571h1v1h-1zM532 601h1v1h-1zM532 630h1v1h-1zM534 396h1v1h-1zM534 425h1v1h-1zM534 454h1v1h-1zM534 484h1v1h-1zM534 513h1v1h-1zM534 542h1v1h-1zM534 571h1v1h-1zM534 601h1v1h-1zM534 630h1v1h-1zM536 396h1v1h-1zM536 425h1v1h-1zM536 454h1v1h-1zM536 484h1v1h-1zM536 513h1v1h-1zM536 542h1v1h-1zM536 571h1v1h-1zM536 601h1v1h-1zM536 630h1v1h-1zM538 396h1v1h-1zM538 425h1v1h-1zM538 454h1v1h-1zM538 484h1v1h-1zM538 513h1v1h-1zM538 542h1v1h-1zM538 571h1v1h-1zM538 601h1v1h-1zM538 630h1v1h-1zM540 396h1v1h-1zM540 425h1v1h-1zM540 454h1v1h-1zM540 484h1v1h-1zM540 513h1v1h-1zM540 542h1v1h-1zM540 571h1v1h-1zM540 601h1v1h-1zM540 630h1v1h-1zM542 396h1v1h-1zM542 425h1v1h-1zM542 454h1v1h-1zM542 484h1v1h-1zM542 513h1v1h-1zM542 542h1v1h-1zM542 571h1v1h-1zM542 601h1v1h-1zM542 630h1v1h-1zM544 396h1v1h-1zM544 425h1v1h-1zM544 454h1v1h-1zM544 484h1v1h-1zM544 513h1v1h-1zM544 542h1v1h-1zM544 571h1v1h-1zM544 601h1v1h-1zM544 630h1v1h-1zM546 396h1v1h-1zM546 425h1v1h-1zM546 454h1v1h-1zM546 484h1v1h-1zM546 513h1v1h-1zM546 542h1v1h-1zM546 571h1v1h-1zM546 601h1v1h-1zM546 630h1v1h-1zM548 396h1v1h-1zM548 425h1v1h-1zM548 454h1v1h-1zM548 484h1v1h-1zM548 513h1v1h-1zM548 542h1v1h-1zM548 571h1v1h-1zM548 601h1v1h-1zM548 630h1v1h-1zM550 396h1v1h-1zM550 425h1v1h-1zM550 454h1v1h-1zM550 484h1v1h-1zM550 513h1v1h-1zM550 542h1v1h-1zM550 571h1v1h-1zM550 601h1v1h-1zM550 630h1v1h-1zM552 396h1v1h-1zM552 425h1v1h-1zM552 454h1v1h-1zM552 484h1v1h-1zM552 513h1v1h-1zM552 542h1v1h-1zM552 571h1v1h-1zM552 601h1v1h-1zM552 630h1v1h-1zM554 396h1v1h-1zM554 425h1v1h-1zM554 454h1v1h-1zM554 484h1v1h-1zM554 513h1v1h-1zM554 542h1v1h-1zM554 571h1v1h-1zM554 601h1v1h-1zM554 630h1v1h-1zM556 396h1v1h-1zM556 425h1v1h-1zM556 454h1v1h-1zM556 484h1v1h-1zM556 513h1v1h-1zM556 542h1v1h-1zM556 571h1v1h-1zM556 601h1v1h-1zM556 630h1v1h-1zM558 396h1v1h-1zM558 425h1v1h-1zM558 454h1v1h-1zM558 484h1v1h-1zM558 513h1v1h-1zM558 542h1v1h-1zM558 571h1v1h-1zM558 601h1v1h-1zM558 630h1v1h-1zM560 396h1v1h-1zM560 425h1v1h-1zM560 454h1v1h-1zM560 484h1v1h-1zM560 513h1v1h-1zM560 542h1v1h-1zM560 571h1v1h-1zM560 601h1v1h-1zM560 630h1v1h-1zM562 396h1v1h-1zM562 425h1v1h-1zM562 454h1v1h-1zM562 484h1v1h-1zM562 513h1v1h-1zM562 542h1v1h-1zM562 571h1v1h-1zM562 601h1v1h-1zM562 630h1v1h-1zM564 396h1v1h-1zM564 425h1v1h-1zM564 454h1v1h-1zM564 484h1v1h-1zM564 513h1v1h-1zM564 542h1v1h-1zM564 571h1v1h-1zM564 601h1v1h-1zM564 630h1v1h-1zM566 396h1v1h-1zM566 425h1v1h-1zM566 454h1v1h-1zM566 484h1v1h-1zM566 513h1v1h-1zM566 542h1v1h-1zM566 571h1v1h-1zM566 601h1v1h-1zM566 630h1v1h-1zM568 396h1v1h-1zM568 425h1v1h-1zM568 454h1v1h-1zM568 484h1v1h-1zM568 513h1v1h-1zM568 542h1v1h-1zM568 571h1v1h-1zM568 601h1v1h-1zM568 630h1v1h-1zM570 396h1v1h-1zM570 425h1v1h-1zM570 454h1v1h-1zM570 484h1v1h-1zM570 513h1v1h-1zM570 542h1v1h-1zM570 571h1v1h-1zM570 601h1v1h-1zM570 630h1v1h-1zM572 396h1v1h-1zM572 425h1v1h-1zM572 454h1v1h-1zM572 484h1v1h-1zM572 513h1v1h-1zM572 542h1v1h-1zM572 571h1v1h-1zM572 601h1v1h-1zM572 630h1v1h-1zM574 396h1v1h-1zM574 425h1v1h-1zM574 454h1v1h-1zM574 484h1v1h-1zM574 513h1v1h-1zM574 542h1v1h-1zM574 571h1v1h-1zM574 601h1v1h-1zM574 630h1v1h-1zM576 396h1v1h-1zM576 425h1v1h-1zM576 454h1v1h-1zM576 484h1v1h-1zM576 513h1v1h-1zM576 542h1v1h-1zM576 571h1v1h-1zM576 601h1v1h-1zM576 630h1v1h-1zM578 396h1v1h-1zM578 425h1v1h-1zM578 454h1v1h-1zM578 484h1v1h-1zM578 513h1v1h-1zM578 542h1v1h-1zM578 571h1v1h-1zM578 601h1v1h-1zM578 630h1v1h-1zM580 396h1v1h-1zM580 425h1v1h-1zM580 454h1v1h-1zM580 484h1v1h-1zM580 513h1v1h-1zM580 542h1v1h-1zM580 571h1v1h-1zM580 601h1v1h-1zM580 630h1v1h-1zM582 396h1v1h-1zM582 425h1v1h-1zM582 454h1v1h-1zM582 484h1v1h-1zM582 513h1v1h-1zM582 542h1v1h-1zM582 571h1v1h-1zM582 601h1v1h-1zM582 630h1v1h-1zM584 396h1v1h-1zM584 425h1v1h-1zM584 454h1v1h-1zM584 484h1v1h-1zM584 513h1v1h-1zM584 542h1v1h-1zM584 571h1v1h-1zM584 601h1v1h-1zM584 630h1v1h-1zM586 396h1v1h-1zM586 425h1v1h-1zM586 454h1v1h-1zM586 484h1v1h-1zM586 513h1v1h-1zM586 542h1v1h-1zM586 571h1v1h-1zM586 601h1v1h-1zM586 630h1v1h-1zM588 396h1v1h-1zM588 425h1v1h-1zM588 454h1v1h-1zM588 484h1v1h-1zM588 513h1v1h-1zM588 542h1v1h-1zM588 571h1v1h-1zM588 601h1v1h-1zM588 630h1v1h-1zM590 396h1v1h-1zM590 425h1v1h-1zM590 454h1v1h-1zM590 484h1v1h-1zM590 513h1v1h-1zM590 542h1v1h-1zM590 571h1v1h-1zM590 601h1v1h-1zM590 630h1v1h-1zM592 396h1v1h-1zM592 425h1v1h-1zM592 454h1v1h-1zM592 484h1v1h-1zM592 513h1v1h-1zM592 542h1v1h-1zM592 571h1v1h-1zM592 601h1v1h-1zM592 630h1v1h-1zM594 396h1v1h-1zM594 425h1v1h-1zM594 454h1v1h-1zM594 484h1v1h-1zM594 513h1v1h-1zM594 542h1v1h-1zM594 571h1v1h-1zM594 601h1v1h-1zM594 630h1v1h-1zM596 396h1v1h-1zM596 425h1v1h-1zM596 454h1v1h-1zM596 484h1v1h-1zM596 513h1v1h-1zM596 542h1v1h-1zM596 571h1v1h-1zM596 601h1v1h-1zM596 630h1v1h-1zM598 396h1v1h-1zM598 425h1v1h-1zM598 454h1v1h-1zM598 484h1v1h-1zM598 513h1v1h-1zM598 542h1v1h-1zM598 571h1v1h-1zM598 601h1v1h-1zM598 630h1v1h-1zM600 396h1v1h-1zM600 425h1v1h-1zM600 454h1v1h-1zM600 484h1v1h-1zM600 513h1v1h-1zM600 542h1v1h-1zM600 571h1v1h-1zM600 601h1v1h-1zM600 630h1v1h-1zM602 396h1v1h-1zM602 425h1v1h-1zM602 454h1v1h-1zM602 484h1v1h-1zM602 513h1v1h-1zM602 542h1v1h-1zM602 571h1v1h-1zM602 601h1v1h-1zM602 630h1v1h-1zM604 396h1v1h-1zM604 425h1v1h-1zM604 454h1v1h-1zM604 484h1v1h-1zM604 513h1v1h-1zM604 542h1v1h-1zM604 571h1v1h-1zM604 601h1v1h-1zM604 630h1v1h-1zM606 396h1v1h-1zM606 425h1v1h-1zM606 454h1v1h-1zM606 484h1v1h-1zM606 513h1v1h-1zM606 542h1v1h-1zM606 571h1v1h-1zM606 601h1v1h-1zM606 630h1v1h-1zM608 396h1v1h-1zM608 425h1v1h-1zM608 454h1v1h-1zM608 484h1v1h-1zM608 513h1v1h-1zM608 542h1v1h-1zM608 571h1v1h-1zM608 601h1v1h-1zM608 630h1v1h-1zM610 396h1v1h-1zM610 425h1v1h-1zM610 454h1v1h-1zM610 484h1v1h-1zM610 513h1v1h-1zM610 542h1v1h-1zM610 571h1v1h-1zM610 601h1v1h-1zM610 630h1v1h-1zM612 396h1v1h-1zM612 425h1v1h-1zM612 454h1v1h-1zM612 484h1v1h-1zM612 513h1v1h-1zM612 542h1v1h-1zM612 571h1v1h-1zM612 601h1v1h-1zM612 630h1v1h-1zM614 396h1v1h-1zM614 425h1v1h-1zM614 454h1v1h-1zM614 484h1v1h-1zM614 513h1v1h-1zM614 542h1v1h-1zM614 571h1v1h-1zM614 601h1v1h-1zM614 630h1v1h-1zM616 396h1v1h-1zM616 425h1v1h-1zM616 454h1v1h-1zM616 484h1v1h-1zM616 513h1v1h-1zM616 542h1v1h-1zM616 571h1v1h-1zM616 601h1v1h-1zM616 630h1v1h-1zM617 368h1v1h-1zM617 370h1v1h-1zM617 372h1v1h-1zM617 374h1v1h-1zM617 376h1v1h-1zM617 378h1v1h-1zM617 380h1v1h-1zM617 382h1v1h-1zM617 384h1v1h-1zM617 386h1v1h-1zM617 388h1v1h-1zM617 390h1v1h-1zM617 392h1v1h-1zM617 394h1v1h-1zM617 396h1v1h-1zM617 398h1v1h-1zM617 400h1v1h-1zM617 402h1v1h-1zM617 404h1v1h-1zM617 406h1v1h-1zM617 408h1v1h-1zM617 410h1v1h-1zM617 412h1v1h-1zM617 414h1v1h-1zM617 416h1v1h-1zM617 418h1v1h-1zM617 420h1v1h-1zM617 422h1v1h-1zM617 424h1v1h-1zM617 426h1v1h-1zM617 428h1v1h-1zM617 430h1v1h-1zM617 432h1v1h-1zM617 434h1v1h-1zM617 436h1v1h-1zM617 438h1v1h-1zM617 440h1v1h-1zM617 442h1v1h-1zM617 444h1v1h-1zM617 446h1v1h-1zM617 448h1v1h-1zM617 450h1v1h-1zM617 452h1v1h-1zM617 454h1v1h-1zM617 456h1v1h-1zM617 458h1v1h-1zM617 460h1v1h-1zM617 462h1v1h-1zM617 464h1v1h-1zM617 466h1v1h-1zM617 468h1v1h-1zM617 470h1v1h-1zM617 472h1v1h-1zM617 474h1v1h-1zM617 476h1v1h-1zM617 478h1v1h-1zM617 480h1v1h-1zM617 482h1v1h-1zM617 484h1v1h-1zM617 486h1v1h-1zM617 488h1v1h-1zM617 490h1v1h-1zM617 492h1v1h-1zM617 494h1v1h-1zM617 496h1v1h-1zM617 498h1v1h-1zM617 500h1v1h-1zM617 502h1v1h-1zM617 504h1v1h-1zM617 506h1v1h-1zM617 508h1v1h-1zM617 510h1v1h-1zM617 512h1v1h-1zM617 514h1v1h-1zM617 516h1v1h-1zM617 518h1v1h-1zM617 520h1v1h-1zM617 522h1v1h-1zM617 524h1v1h-1zM617 526h1v1h-1zM617 528h1v1h-1zM617 530h1v1h-1zM617 532h1v1h-1zM617 534h1v1h-1zM617 536h1v1h-1zM617 538h1v1h-1zM617 540h1v1h-1zM617 542h1v1h-1zM617 544h1v1h-1zM617 546h1v1h-1zM617 548h1v1h-1zM617 550h1v1h-1zM617 552h1v1h-1zM617 554h1v1h-1zM617 556h1v1h-1zM617 558h1v1h-1zM617 560h1v1h-1zM617 562h1v1h-1zM617 564h1v1h-1zM617 566h1v1h-1zM617 568h1v1h-1zM617 570h1v1h-1zM617 572h1v1h-1zM617 574h1v1h-1zM617 576h1v1h-1zM617 578h1v1h-1zM617 580h1v1h-1zM617 582h1v1h-1zM617 584h1v1h-1zM617 586h1v1h-1zM617 588h1v1h-1zM617 590h1v1h-1zM617 592h1v1h-1zM617 594h1v1h-1zM617 596h1v1h-1zM617 598h1v1h-1zM617 600h1v1h-1zM617 602h1v1h-1zM617 604h1v1h-1zM617 606h1v1h-1zM617 608h1v1h-1zM617 610h1v1h-1zM617 612h1v1h-1zM617 614h1v1h-1zM617 616h1v1h-1zM617 618h1v1h-1zM617 620h1v1h-1zM617 622h1v1h-1zM617 624h1v1h-1zM617 626h1v1h-1zM617 628h1v1h-1zM617 630h1v1h-1zM617 632h1v1h-1zM617 634h1v1h-1zM617 636h1v1h-1zM617 638h1v1h-1zM617 640h1v1h-1zM617 642h1v1h-1zM617 644h1v1h-1zM617 646h1v1h-1zM617 648h1v1h-1zM617 650h1v1h-1zM617 652h1v1h-1zM617 654h1v1h-1zM617 656h1v1h-1zM617 658h1v1h-1zM618 396h1v1h-1zM618 425h1v1h-1zM618 454h1v1h-1zM618 484h1v1h-1zM618 513h1v1h-1zM618 542h1v1h-1zM618 571h1v1h-1zM618 601h1v1h-1zM618 630h1v1h-1zM620 396h1v1h-1zM620 425h1v1h-1zM620 454h1v1h-1zM620 484h1v1h-1zM620 513h1v1h-1zM620 542h1v1h-1zM620 571h1v1h-1zM620 601h1v1h-1zM620 630h1v1h-1zM622 396h1v1h-1zM622 425h1v1h-1zM622 454h1v1h-1zM622 484h1v1h-1zM622 513h1v1h-1zM622 542h1v1h-1zM622 571h1v1h-1zM622 601h1v1h-1zM622 630h1v1h-1zM624 396h1v1h-1zM624 425h1v1h-1zM624 454h1v1h-1zM624 484h1v1h-1zM624 513h1v1h-1zM624 542h1v1h-1zM624 571h1v1h-1zM624 601h1v1h-1zM624 630h1v1h-1zM626 396h1v1h-1zM626 425h1v1h-1zM626 454h1v1h-1zM626 484h1v1h-1zM626 513h1v1h-1zM626 542h1v1h-1zM626 571h1v1h-1zM626 601h1v1h-1zM626 630h1v1h-1zM628 396h1v1h-1zM628 425h1v1h-1zM628 454h1v1h-1zM628 484h1v1h-1zM628 513h1v1h-1zM628 542h1v1h-1zM628 571h1v1h-1zM628 601h1v1h-1zM628 630h1v1h-1zM630 396h1v1h-1zM630 425h1v1h-1zM630 454h1v1h-1zM630 484h1v1h-1zM630 513h1v1h-1zM630 542h1v1h-1zM630 571h1v1h-1zM630 601h1v1h-1zM630 630h1v1h-1zM632 396h1v1h-1zM632 425h1v1h-1zM632 454h1v1h-1zM632 484h1v1h-1zM632 513h1v1h-1zM632 542h1v1h-1zM632 571h1v1h-1zM632 601h1v1h-1zM632 630h1v1h-1zM634 396h1v1h-1zM634 425h1v1h-1zM634 454h1v1h-1zM634 484h1v1h-1zM634 513h1v1h-1zM634 542h1v1h-1zM634 571h1v1h-1zM634 601h1v1h-1zM634 630h1v1h-1zM636 396h1v1h-1zM636 425h1v1h-1zM636 454h1v1h-1zM636 484h1v1h-1zM636 513h1v1h-1zM636 542h1v1h-1zM636 571h1v1h-1zM636 601h1v1h-1zM636 630h1v1h-1zM638 396h1v1h-1zM638 425h1v1h-1zM638 454h1v1h-1zM638 484h1v1h-1zM638 513h1v1h-1zM638 542h1v1h-1zM638 571h1v1h-1zM638 601h1v1h-1zM638 630h1v1h-1zM640 396h1v1h-1zM640 425h1v1h-1zM640 454h1v1h-1zM640 484h1v1h-1zM640 513h1v1h-1zM640 542h1v1h-1zM640 571h1v1h-1zM640 601h1v1h-1zM640 630h1v1h-1zM642 396h1v1h-1zM642 425h1v1h-1zM642 454h1v1h-1zM642 484h1v1h-1zM642 513h1v1h-1zM642 542h1v1h-1zM642 571h1v1h-1zM642 601h1v1h-1zM642 630h1v1h-1zM644 396h1v1h-1zM644 425h1v1h-1zM644 454h1v1h-1zM644 484h1v1h-1zM644 513h1v1h-1zM644 542h1v1h-1zM644 571h1v1h-1zM644 601h1v1h-1zM644 630h1v1h-1zM646 396h1v1h-1zM646 425h1v1h-1zM646 454h1v1h-1zM646 484h1v1h-1zM646 513h1v1h-1zM646 542h1v1h-1zM646 571h1v1h-1zM646 601h1v1h-1zM646 630h1v1h-1zM648 396h1v1h-1zM648 425h1v1h-1zM648 454h1v1h-1zM648 484h1v1h-1zM648 513h1v1h-1zM648 542h1v1h-1zM648 571h1v1h-1zM648 601h1v1h-1zM648 630h1v1h-1zM650 396h1v1h-1zM650 425h1v1h-1zM650 454h1v1h-1zM650 484h1v1h-1zM650 513h1v1h-1zM650 542h1v1h-1zM650 571h1v1h-1zM650 601h1v1h-1zM650 630h1v1h-1zM652 396h1v1h-1zM652 425h1v1h-1zM652 454h1v1h-1zM652 484h1v1h-1zM652 513h1v1h-1zM652 542h1v1h-1zM652 571h1v1h-1zM652 601h1v1h-1zM652 630h1v1h-1zM654 396h1v1h-1zM654 425h1v1h-1zM654 454h1v1h-1zM654 484h1v1h-1zM654 513h1v1h-1zM654 542h1v1h-1zM654 571h1v1h-1zM654 601h1v1h-1zM654 630h1v1h-1zM656 396h1v1h-1zM656 425h1v1h-1zM656 454h1v1h-1zM656 484h1v1h-1zM656 513h1v1h-1zM656 542h1v1h-1zM656 571h1v1h-1zM656 601h1v1h-1zM656 630h1v1h-1zM658 396h1v1h-1zM658 425h1v1h-1zM658 454h1v1h-1zM658 484h1v1h-1zM658 513h1v1h-1zM658 542h1v1h-1zM658 571h1v1h-1zM658 601h1v1h-1zM658 630h1v1h-1zM660 396h1v1h-1zM660 425h1v1h-1zM660 454h1v1h-1zM660 484h1v1h-1zM660 513h1v1h-1zM660 542h1v1h-1zM660 571h1v1h-1zM660 601h1v1h-1zM660 630h1v1h-1zM662 396h1v1h-1zM662 425h1v1h-1zM662 454h1v1h-1zM662 484h1v1h-1zM662 513h1v1h-1zM662 542h1v1h-1zM662 571h1v1h-1zM662 601h1v1h-1zM662 630h1v1h-1zM664 396h1v1h-1zM664 425h1v1h-1zM664 454h1v1h-1zM664 484h1v1h-1zM664 513h1v1h-1zM664 542h1v1h-1zM664 571h1v1h-1zM664 601h1v1h-1zM664 630h1v1h-1zM666 396h1v1h-1zM666 425h1v1h-1zM666 454h1v1h-1zM666 484h1v1h-1zM666 513h1v1h-1zM666 542h1v1h-1zM666 571h1v1h-1zM666 601h1v1h-1zM666 630h1v1h-1zM668 396h1v1h-1zM668 425h1v1h-1zM668 454h1v1h-1zM668 484h1v1h-1zM668 513h1v1h-1zM668 542h1v1h-1zM668 571h1v1h-1zM668 601h1v1h-1zM668 630h1v1h-1zM670 396h1v1h-1zM670 425h1v1h-1zM670 454h1v1h-1zM670 484h1v1h-1zM670 513h1v1h-1zM670 542h1v1h-1zM670 571h1v1h-1zM670 601h1v1h-1zM670 630h1v1h-1zM672 396h1v1h-1zM672 425h1v1h-1zM672 454h1v1h-1zM672 484h1v1h-1zM672 513h1v1h-1zM672 542h1v1h-1zM672 571h1v1h-1zM672 601h1v1h-1zM672 630h1v1h-1zM674 396h1v1h-1zM674 425h1v1h-1zM674 454h1v1h-1zM674 484h1v1h-1zM674 513h1v1h-1zM674 542h1v1h-1zM674 571h1v1h-1zM674 601h1v1h-1zM674 630h1v1h-1zM676 396h1v1h-1zM676 425h1v1h-1zM676 454h1v1h-1zM676 484h1v1h-1zM676 513h1v1h-1zM676 542h1v1h-1zM676 571h1v1h-1zM676 601h1v1h-1zM676 630h1v1h-1zM678 396h1v1h-1zM678 425h1v1h-1zM678 454h1v1h-1zM678 484h1v1h-1zM678 513h1v1h-1zM678 542h1v1h-1zM678 571h1v1h-1zM678 601h1v1h-1zM678 630h1v1h-1zM680 396h1v1h-1zM680 425h1v1h-1zM680 454h1v1h-1zM680 484h1v1h-1zM680 513h1v1h-1zM680 542h1v1h-1zM680 571h1v1h-1zM680 601h1v1h-1zM680 630h1v1h-1zM682 396h1v1h-1zM682 425h1v1h-1zM682 454h1v1h-1zM682 484h1v1h-1zM682 513h1v1h-1zM682 542h1v1h-1zM682 571h1v1h-1zM682 601h1v1h-1zM682 630h1v1h-1zM684 396h1v1h-1zM684 425h1v1h-1zM684 454h1v1h-1zM684 484h1v1h-1zM684 513h1v1h-1zM684 542h1v1h-1zM684 571h1v1h-1zM684 601h1v1h-1zM684 630h1v1h-1zM686 396h1v1h-1zM686 425h1v1h-1zM686 454h1v1h-1zM686 484h1v1h-1zM686 513h1v1h-1zM686 542h1v1h-1zM686 571h1v1h-1zM686 601h1v1h-1zM686 630h1v1h-1zM688 396h1v1h-1zM688 425h1v1h-1zM688 454h1v1h-1zM688 484h1v1h-1zM688 513h1v1h-1zM688 542h1v1h-1zM688 571h1v1h-1zM688 601h1v1h-1zM688 630h1v1h-1zM690 396h1v1h-1zM690 425h1v1h-1zM690 454h1v1h-1zM690 484h1v1h-1zM690 513h1v1h-1zM690 542h1v1h-1zM690 571h1v1h-1zM690 601h1v1h-1zM690 630h1v1h-1zM692 396h1v1h-1zM692 425h1v1h-1zM692 454h1v1h-1zM692 484h1v1h-1zM692 513h1v1h-1zM692 542h1v1h-1zM692 571h1v1h-1zM692 601h1v1h-1zM692 630h1v1h-1zM694 396h1v1h-1zM694 425h1v1h-1zM694 454h1v1h-1zM694 484h1v1h-1zM694 513h1v1h-1zM694 542h1v1h-1zM694 571h1v1h-1zM694 601h1v1h-1zM694 630h1v1h-1zM696 396h1v1h-1zM696 425h1v1h-1zM696 454h1v1h-1zM696 484h1v1h-1zM696 513h1v1h-1zM696 542h1v1h-1zM696 571h1v1h-1zM696 601h1v1h-1zM696 630h1v1h-1zM698 396h1v1h-1zM698 425h1v1h-1zM698 454h1v1h-1zM698 484h1v1h-1zM698 513h1v1h-1zM698 542h1v1h-1zM698 571h1v1h-1zM698 601h1v1h-1zM698 630h1v1h-1zM700 396h1v1h-1zM700 425h1v1h-1zM700 454h1v1h-1zM700 484h1v1h-1zM700 513h1v1h-1zM700 542h1v1h-1zM700 571h1v1h-1zM700 601h1v1h-1zM700 630h1v1h-1zM702 396h1v1h-1zM702 425h1v1h-1zM702 454h1v1h-1zM702 484h1v1h-1zM702 513h1v1h-1zM702 542h1v1h-1zM702 571h1v1h-1zM702 601h1v1h-1zM702 630h1v1h-1zM704 396h1v1h-1zM704 425h1v1h-1zM704 454h1v1h-1zM704 484h1v1h-1zM704 513h1v1h-1zM704 542h1v1h-1zM704 571h1v1h-1zM704 601h1v1h-1zM704 630h1v1h-1zM706 396h1v1h-1zM706 425h1v1h-1zM706 454h1v1h-1zM706 484h1v1h-1zM706 513h1v1h-1zM706 542h1v1h-1zM706 571h1v1h-1zM706 601h1v1h-1zM706 630h1v1h-1zM708 396h1v1h-1zM708 425h1v1h-1zM708 454h1v1h-1zM708 484h1v1h-1zM708 513h1v1h-1zM708 542h1v1h-1zM708 571h1v1h-1zM708 601h1v1h-1zM708 630h1v1h-1zM710 396h1v1h-1zM710 425h1v1h-1zM710 454h1v1h-1zM710 484h1v1h-1zM710 513h1v1h-1zM710 542h1v1h-1zM710 571h1v1h-1zM710 601h1v1h-1zM710 630h1v1h-1zM712 396h1v1h-1zM712 425h1v1h-1zM712 454h1v1h-1zM712 484h1v1h-1zM712 513h1v1h-1zM712 542h1v1h-1zM712 571h1v1h-1zM712 601h1v1h-1zM712 630h1v1h-1zM714 396h1v1h-1zM714 425h1v1h-1zM714 454h1v1h-1zM714 484h1v1h-1zM714 513h1v1h-1zM714 542h1v1h-1zM714 571h1v1h-1zM714 601h1v1h-1zM714 630h1v1h-1zM715 368h1v1h-1zM715 370h1v1h-1zM715 372h1v1h-1zM715 374h1v1h-1zM715 376h1v1h-1zM715 378h1v1h-1zM715 380h1v1h-1zM715 382h1v1h-1zM715 384h1v1h-1zM715 386h1v1h-1zM715 388h1v1h-1zM715 390h1v1h-1zM715 392h1v1h-1zM715 394h1v1h-1zM715 396h1v1h-1zM715 398h1v1h-1zM715 400h1v1h-1zM715 402h1v1h-1zM715 404h1v1h-1zM715 406h1v1h-1zM715 408h1v1h-1zM715 410h1v1h-1zM715 412h1v1h-1zM715 414h1v1h-1zM715 416h1v1h-1zM715 418h1v1h-1zM715 420h1v1h-1zM715 422h1v1h-1zM715 424h1v1h-1zM715 426h1v1h-1zM715 428h1v1h-1zM715 430h1v1h-1zM715 432h1v1h-1zM715 434h1v1h-1zM715 436h1v1h-1zM715 438h1v1h-1zM715 440h1v1h-1zM715 442h1v1h-1zM715 444h1v1h-1zM715 446h1v1h-1zM715 448h1v1h-1zM715 450h1v1h-1zM715 452h1v1h-1zM715 454h1v1h-1zM715 456h1v1h-1zM715 458h1v1h-1zM715 460h1v1h-1zM715 462h1v1h-1zM715 464h1v1h-1zM715 466h1v1h-1zM715 468h1v1h-1zM715 470h1v1h-1zM715 472h1v1h-1zM715 474h1v1h-1zM715 476h1v1h-1zM715 478h1v1h-1zM715 480h1v1h-1zM715 482h1v1h-1zM715 484h1v1h-1zM715 486h1v1h-1zM715 488h1v1h-1zM715 490h1v1h-1zM715 492h1v1h-1zM715 494h1v1h-1zM715 496h1v1h-1zM715 498h1v1h-1zM715 500h1v1h-1zM715 502h1v1h-1zM715 504h1v1h-1zM715 506h1v1h-1zM715 508h1v1h-1zM715 510h1v1h-1zM715 512h1v1h-1zM715 514h1v1h-1zM715 516h1v1h-1zM715 518h1v1h-1zM715 520h1v1h-1zM715 522h1v1h-1zM715 524h1v1h-1zM715 526h1v1h-1zM715 528h1v1h-1zM715 530h1v1h-1zM715 532h1v1h-1zM715 534h1v1h-1zM715 536h1v1h-1zM715 538h1v1h-1zM715 540h1v1h-1zM715 542h1v1h-1zM715 544h1v1h-1zM715 546h1v1h-1zM715 548h1v1h-1zM715 550h1v1h-1zM715 552h1v1h-1zM715 554h1v1h-1zM715 556h1v1h-1zM715 558h1v1h-1zM715 560h1v1h-1zM715 562h1v1h-1zM715 564h1v1h-1zM715 566h1v1h-1zM715 568h1v1h-1zM715 570h1v1h-1zM715 572h1v1h-1zM715 574h1v1h-1zM715 576h1v1h-1zM715 578h1v1h-1zM715 580h1v1h-1zM715 582h1v1h-1zM715 584h1v1h-1zM715 586h1v1h-1zM715 588h1v1h-1zM715 590h1v1h-1zM715 592h1v1h-1zM715 594h1v1h-1zM715 596h1v1h-1zM715 598h1v1h-1zM715 600h1v1h-1zM715 602h1v1h-1zM715 604h1v1h-1zM715 606h1v1h-1zM715 608h1v1h-1zM715 610h1v1h-1zM715 612h1v1h-1zM715 614h1v1h-1zM715 616h1v1h-1zM715 618h1v1h-1zM715 620h1v1h-1zM715 622h1v1h-1zM715 624h1v1h-1zM715 626h1v1h-1zM715 628h1v1h-1zM715 630h1v1h-1zM715 632h1v1h-1zM715 634h1v1h-1zM715 636h1v1h-1zM715 638h1v1h-1zM715 640h1v1h-1zM715 642h1v1h-1zM715 644h1v1h-1zM715 646h1v1h-1zM715 648h1v1h-1zM715 650h1v1h-1zM715 652h1v1h-1zM715 654h1v1h-1zM715 656h1v1h-1zM715 658h1v1h-1zM716 396h1v1h-1zM716 425h1v1h-1zM716 454h1v1h-1zM716 484h1v1h-1zM716 513h1v1h-1zM716 542h1v1h-1zM716 571h1v1h-1zM716 601h1v1h-1zM716 630h1v1h-1zM718 396h1v1h-1zM718 425h1v1h-1zM718 454h1v1h-1zM718 484h1v1h-1zM718 513h1v1h-1zM718 542h1v1h-1zM718 571h1v1h-1zM718 601h1v1h-1zM718 630h1v1h-1zM720 396h1v1h-1zM720 425h1v1h-1zM720 454h1v1h-1zM720 484h1v1h-1zM720 513h1v1h-1zM720 542h1v1h-1zM720 571h1v1h-1zM720 601h1v1h-1zM720 630h1v1h-1zM722 396h1v1h-1zM722 425h1v1h-1zM722 454h1v1h-1zM722 484h1v1h-1zM722 513h1v1h-1zM722 542h1v1h-1zM722 571h1v1h-1zM722 601h1v1h-1zM722 630h1v1h-1zM724 396h1v1h-1zM724 425h1v1h-1zM724 454h1v1h-1zM724 484h1v1h-1zM724 513h1v1h-1zM724 542h1v1h-1zM724 571h1v1h-1zM724 601h1v1h-1zM724 630h1v1h-1zM726 396h1v1h-1zM726 425h1v1h-1zM726 454h1v1h-1zM726 484h1v1h-1zM726 513h1v1h-1zM726 542h1v1h-1zM726 571h1v1h-1zM726 601h1v1h-1zM726 630h1v1h-1zM728 396h1v1h-1zM728 425h1v1h-1zM728 454h1v1h-1zM728 484h1v1h-1zM728 513h1v1h-1zM728 542h1v1h-1zM728 571h1v1h-1zM728 601h1v1h-1zM728 630h1v1h-1zM730 396h1v1h-1zM730 425h1v1h-1zM730 454h1v1h-1zM730 484h1v1h-1zM730 513h1v1h-1zM730 542h1v1h-1zM730 571h1v1h-1zM730 601h1v1h-1zM730 630h1v1h-1zM732 396h1v1h-1zM732 425h1v1h-1zM732 454h1v1h-1zM732 484h1v1h-1zM732 513h1v1h-1zM732 542h1v1h-1zM732 571h1v1h-1zM732 601h1v1h-1zM732 630h1v1h-1zM734 396h1v1h-1zM734 425h1v1h-1zM734 454h1v1h-1zM734 484h1v1h-1zM734 513h1v1h-1zM734 542h1v1h-1zM734 571h1v1h-1zM734 601h1v1h-1zM734 630h1v1h-1zM736 396h1v1h-1zM736 425h1v1h-1zM736 454h1v1h-1zM736 484h1v1h-1zM736 513h1v1h-1zM736 542h1v1h-1zM736 571h1v1h-1zM736 601h1v1h-1zM736 630h1v1h-1zM738 396h1v1h-1zM738 425h1v1h-1zM738 454h1v1h-1zM738 484h1v1h-1zM738 513h1v1h-1zM738 542h1v1h-1zM738 571h1v1h-1zM738 601h1v1h-1zM738 630h1v1h-1zM740 396h1v1h-1zM740 425h1v1h-1zM740 454h1v1h-1zM740 484h1v1h-1zM740 513h1v1h-1zM740 542h1v1h-1zM740 571h1v1h-1zM740 601h1v1h-1zM740 630h1v1h-1zM742 396h1v1h-1zM742 425h1v1h-1zM742 454h1v1h-1zM742 484h1v1h-1zM742 513h1v1h-1zM742 542h1v1h-1zM742 571h1v1h-1zM742 601h1v1h-1zM742 630h1v1h-1zM744 396h1v1h-1zM744 425h1v1h-1zM744 454h1v1h-1zM744 484h1v1h-1zM744 513h1v1h-1zM744 542h1v1h-1zM744 571h1v1h-1zM744 601h1v1h-1zM744 630h1v1h-1zM746 396h1v1h-1zM746 425h1v1h-1zM746 454h1v1h-1zM746 484h1v1h-1zM746 513h1v1h-1zM746 542h1v1h-1zM746 571h1v1h-1zM746 601h1v1h-1zM746 630h1v1h-1zM748 396h1v1h-1zM748 425h1v1h-1zM748 454h1v1h-1zM748 484h1v1h-1zM748 513h1v1h-1zM748 542h1v1h-1zM748 571h1v1h-1zM748 601h1v1h-1zM748 630h1v1h-1zM750 396h1v1h-1zM750 425h1v1h-1zM750 454h1v1h-1zM750 484h1v1h-1zM750 513h1v1h-1zM750 542h1v1h-1zM750 571h1v1h-1zM750 601h1v1h-1zM750 630h1v1h-1zM752 396h1v1h-1zM752 425h1v1h-1zM752 454h1v1h-1zM752 484h1v1h-1zM752 513h1v1h-1zM752 542h1v1h-1zM752 571h1v1h-1zM752 601h1v1h-1zM752 630h1v1h-1zM754 396h1v1h-1zM754 425h1v1h-1zM754 454h1v1h-1zM754 484h1v1h-1zM754 513h1v1h-1zM754 542h1v1h-1zM754 571h1v1h-1zM754 601h1v1h-1zM754 630h1v1h-1zM756 396h1v1h-1zM756 425h1v1h-1zM756 454h1v1h-1zM756 484h1v1h-1zM756 513h1v1h-1zM756 542h1v1h-1zM756 571h1v1h-1zM756 601h1v1h-1zM756 630h1v1h-1zM758 396h1v1h-1zM758 425h1v1h-1zM758 454h1v1h-1zM758 484h1v1h-1zM758 513h1v1h-1zM758 542h1v1h-1zM758 571h1v1h-1zM758 601h1v1h-1zM758 630h1v1h-1zM760 396h1v1h-1zM760 425h1v1h-1zM760 454h1v1h-1zM760 484h1v1h-1zM760 513h1v1h-1zM760 542h1v1h-1zM760 571h1v1h-1zM760 601h1v1h-1zM760 630h1v1h-1zM762 396h1v1h-1zM762 425h1v1h-1zM762 454h1v1h-1zM762 484h1v1h-1zM762 513h1v1h-1zM762 542h1v1h-1zM762 571h1v1h-1zM762 601h1v1h-1zM762 630h1v1h-1zM764 396h1v1h-1zM764 425h1v1h-1zM764 454h1v1h-1zM764 484h1v1h-1zM764 513h1v1h-1zM764 542h1v1h-1zM764 571h1v1h-1zM764 601h1v1h-1zM764 630h1v1h-1zM766 396h1v1h-1zM766 425h1v1h-1zM766 454h1v1h-1zM766 484h1v1h-1zM766 513h1v1h-1zM766 542h1v1h-1zM766 571h1v1h-1zM766 601h1v1h-1zM766 630h1v1h-1zM768 396h1v1h-1zM768 425h1v1h-1zM768 454h1v1h-1zM768 484h1v1h-1zM768 513h1v1h-1zM768 542h1v1h-1zM768 571h1v1h-1zM768 601h1v1h-1zM768 630h1v1h-1zM770 396h1v1h-1zM770 425h1v1h-1zM770 454h1v1h-1zM770 484h1v1h-1zM770 513h1v1h-1zM770 542h1v1h-1zM770 571h1v1h-1zM770 601h1v1h-1zM770 630h1v1h-1zM772 396h1v1h-1zM772 425h1v1h-1zM772 454h1v1h-1zM772 484h1v1h-1zM772 513h1v1h-1zM772 542h1v1h-1zM772 571h1v1h-1zM772 601h1v1h-1zM772 630h1v1h-1zM774 396h1v1h-1zM774 425h1v1h-1zM774 454h1v1h-1zM774 484h1v1h-1zM774 513h1v1h-1zM774 542h1v1h-1zM774 571h1v1h-1zM774 601h1v1h-1zM774 630h1v1h-1zM776 396h1v1h-1zM776 425h1v1h-1zM776 454h1v1h-1zM776 484h1v1h-1zM776 513h1v1h-1zM776 542h1v1h-1zM776 571h1v1h-1zM776 601h1v1h-1zM776 630h1v1h-1zM778 396h1v1h-1zM778 425h1v1h-1zM778 454h1v1h-1zM778 484h1v1h-1zM778 513h1v1h-1zM778 542h1v1h-1zM778 571h1v1h-1zM778 601h1v1h-1zM778 630h1v1h-1zM780 396h1v1h-1zM780 425h1v1h-1zM780 454h1v1h-1zM780 484h1v1h-1zM780 513h1v1h-1zM780 542h1v1h-1zM780 571h1v1h-1zM780 601h1v1h-1zM780 630h1v1h-1zM782 396h1v1h-1zM782 425h1v1h-1zM782 454h1v1h-1zM782 484h1v1h-1zM782 513h1v1h-1zM782 542h1v1h-1zM782 571h1v1h-1zM782 601h1v1h-1zM782 630h1v1h-1zM784 396h1v1h-1zM784 425h1v1h-1zM784 454h1v1h-1zM784 484h1v1h-1zM784 513h1v1h-1zM784 542h1v1h-1zM784 571h1v1h-1zM784 601h1v1h-1zM784 630h1v1h-1zM786 396h1v1h-1zM786 425h1v1h-1zM786 454h1v1h-1zM786 484h1v1h-1zM786 513h1v1h-1zM786 542h1v1h-1zM786 571h1v1h-1zM786 601h1v1h-1zM786 630h1v1h-1zM788 396h1v1h-1zM788 425h1v1h-1zM788 454h1v1h-1zM788 484h1v1h-1zM788 513h1v1h-1zM788 542h1v1h-1zM788 571h1v1h-1zM788 601h1v1h-1zM788 630h1v1h-1zM790 396h1v1h-1zM790 425h1v1h-1zM790 454h1v1h-1zM790 484h1v1h-1zM790 513h1v1h-1zM790 542h1v1h-1zM790 571h1v1h-1zM790 601h1v1h-1zM790 630h1v1h-1zM792 396h1v1h-1zM792 425h1v1h-1zM792 454h1v1h-1zM792 484h1v1h-1zM792 513h1v1h-1zM792 542h1v1h-1zM792 571h1v1h-1zM792 601h1v1h-1zM792 630h1v1h-1zM794 396h1v1h-1zM794 425h1v1h-1zM794 454h1v1h-1zM794 484h1v1h-1zM794 513h1v1h-1zM794 542h1v1h-1zM794 571h1v1h-1zM794 601h1v1h-1zM794 630h1v1h-1zM796 396h1v1h-1zM796 425h1v1h-1zM796 454h1v1h-1zM796 484h1v1h-1zM796 513h1v1h-1zM796 542h1v1h-1zM796 571h1v1h-1zM796 601h1v1h-1zM796 630h1v1h-1zM798 396h1v1h-1zM798 425h1v1h-1zM798 454h1v1h-1zM798 484h1v1h-1zM798 513h1v1h-1zM798 542h1v1h-1zM798 571h1v1h-1zM798 601h1v1h-1zM798 630h1v1h-1zM800 396h1v1h-1zM800 425h1v1h-1zM800 454h1v1h-1zM800 484h1v1h-1zM800 513h1v1h-1zM800 542h1v1h-1zM800 571h1v1h-1zM800 601h1v1h-1zM800 630h1v1h-1zM802 396h1v1h-1zM802 425h1v1h-1zM802 454h1v1h-1zM802 484h1v1h-1zM802 513h1v1h-1zM802 542h1v1h-1zM802 571h1v1h-1zM802 601h1v1h-1zM802 630h1v1h-1zM804 396h1v1h-1zM804 425h1v1h-1zM804 454h1v1h-1zM804 484h1v1h-1zM804 513h1v1h-1zM804 542h1v1h-1zM804 571h1v1h-1zM804 601h1v1h-1zM804 630h1v1h-1zM806 396h1v1h-1zM806 425h1v1h-1zM806 454h1v1h-1zM806 484h1v1h-1zM806 513h1v1h-1zM806 542h1v1h-1zM806 571h1v1h-1zM806 601h1v1h-1zM806 630h1v1h-1zM808 396h1v1h-1zM808 425h1v1h-1zM808 454h1v1h-1zM808 484h1v1h-1zM808 513h1v1h-1zM808 542h1v1h-1zM808 571h1v1h-1zM808 601h1v1h-1zM808 630h1v1h-1zM810 396h1v1h-1zM810 425h1v1h-1zM810 454h1v1h-1zM810 484h1v1h-1zM810 513h1v1h-1zM810 542h1v1h-1zM810 571h1v1h-1zM810 601h1v1h-1zM810 630h1v1h-1zM812 396h1v1h-1zM812 425h1v1h-1zM812 454h1v1h-1zM812 484h1v1h-1zM812 513h1v1h-1zM812 542h1v1h-1zM812 571h1v1h-1zM812 601h1v1h-1zM812 630h1v1h-1zM813 368h1v1h-1zM813 370h1v1h-1zM813 372h1v1h-1zM813 374h1v1h-1zM813 376h1v1h-1zM813 378h1v1h-1zM813 380h1v1h-1zM813 382h1v1h-1zM813 384h1v1h-1zM813 386h1v1h-1zM813 388h1v1h-1zM813 390h1v1h-1zM813 392h1v1h-1zM813 394h1v1h-1zM813 396h1v1h-1zM813 398h1v1h-1zM813 400h1v1h-1zM813 402h1v1h-1zM813 404h1v1h-1zM813 406h1v1h-1zM813 408h1v1h-1zM813 410h1v1h-1zM813 412h1v1h-1zM813 414h1v1h-1zM813 416h1v1h-1zM813 418h1v1h-1zM813 420h1v1h-1zM813 422h1v1h-1zM813 424h1v1h-1zM813 426h1v1h-1zM813 428h1v1h-1zM813 430h1v1h-1zM813 432h1v1h-1zM813 434h1v1h-1zM813 436h1v1h-1zM813 438h1v1h-1zM813 440h1v1h-1zM813 442h1v1h-1zM813 444h1v1h-1zM813 446h1v1h-1zM813 448h1v1h-1zM813 450h1v1h-1zM813 452h1v1h-1zM813 454h1v1h-1zM813 456h1v1h-1zM813 458h1v1h-1zM813 460h1v1h-1zM813 462h1v1h-1zM813 464h1v1h-1zM813 466h1v1h-1zM813 468h1v1h-1zM813 470h1v1h-1zM813 472h1v1h-1zM813 474h1v1h-1zM813 476h1v1h-1zM813 478h1v1h-1zM813 480h1v1h-1zM813 482h1v1h-1zM813 484h1v1h-1zM813 486h1v1h-1zM813 488h1v1h-1zM813 490h1v1h-1zM813 492h1v1h-1zM813 494h1v1h-1zM813 496h1v1h-1zM813 498h1v1h-1zM813 500h1v1h-1zM813 502h1v1h-1zM813 504h1v1h-1zM813 506h1v1h-1zM813 508h1v1h-1zM813 510h1v1h-1zM813 512h1v1h-1zM813 514h1v1h-1zM813 516h1v1h-1zM813 518h1v1h-1zM813 520h1v1h-1zM813 522h1v1h-1zM813 524h1v1h-1zM813 526h1v1h-1zM813 528h1v1h-1zM813 530h1v1h-1zM813 532h1v1h-1zM813 534h1v1h-1zM813 536h1v1h-1zM813 538h1v1h-1zM813 540h1v1h-1zM813 542h1v1h-1zM813 544h1v1h-1zM813 546h1v1h-1zM813 548h1v1h-1zM813 550h1v1h-1zM813 552h1v1h-1zM813 554h1v1h-1zM813 556h1v1h-1zM813 558h1v1h-1zM813 560h1v1h-1zM813 562h1v1h-1zM813 564h1v1h-1zM813 566h1v1h-1zM813 568h1v1h-1zM813 570h1v1h-1zM813 572h1v1h-1zM813 574h1v1h-1zM813 576h1v1h-1zM813 578h1v1h-1zM813 580h1v1h-1zM813 582h1v1h-1zM813 584h1v1h-1zM813 586h1v1h-1zM813 588h1v1h-1zM813 590h1v1h-1zM813 592h1v1h-1zM813 594h1v1h-1zM813 596h1v1h-1zM813 598h1v1h-1zM813 600h1v1h-1zM813 602h1v1h-1zM813 604h1v1h-1zM813 606h1v1h-1zM813 608h1v1h-1zM813 610h1v1h-1zM813 612h1v1h-1zM813 614h1v1h-1zM813 616h1v1h-1zM813 618h1v1h-1zM813 620h1v1h-1zM813 622h1v1h-1zM813 624h1v1h-1zM813 626h1v1h-1zM813 628h1v1h-1zM813 630h1v1h-1zM813 632h1v1h-1zM813 634h1v1h-1zM813 636h1v1h-1zM813 638h1v1h-1zM813 640h1v1h-1zM813 642h1v1h-1zM813 644h1v1h-1zM813 646h1v1h-1zM813 648h1v1h-1zM813 650h1v1h-1zM813 652h1v1h-1zM813 654h1v1h-1zM813 656h1v1h-1zM813 658h1v1h-1zM814 396h1v1h-1zM814 425h1v1h-1zM814 454h1v1h-1zM814 484h1v1h-1zM814 513h1v1h-1zM814 542h1v1h-1zM814 571h1v1h-1zM814 601h1v1h-1zM814 630h1v1h-1zM816 396h1v1h-1zM816 425h1v1h-1zM816 454h1v1h-1zM816 484h1v1h-1zM816 513h1v1h-1zM816 542h1v1h-1zM816 571h1v1h-1zM816 601h1v1h-1zM816 630h1v1h-1zM818 396h1v1h-1zM818 425h1v1h-1zM818 454h1v1h-1zM818 484h1v1h-1zM818 513h1v1h-1zM818 542h1v1h-1zM818 571h1v1h-1zM818 601h1v1h-1zM818 630h1v1h-1zM820 396h1v1h-1zM820 425h1v1h-1zM820 454h1v1h-1zM820 484h1v1h-1zM820 513h1v1h-1zM820 542h1v1h-1zM820 571h1v1h-1zM820 601h1v1h-1zM820 630h1v1h-1zM822 396h1v1h-1zM822 425h1v1h-1zM822 454h1v1h-1zM822 484h1v1h-1zM822 513h1v1h-1zM822 542h1v1h-1zM822 571h1v1h-1zM822 601h1v1h-1zM822 630h1v1h-1zM824 396h1v1h-1zM824 425h1v1h-1zM824 454h1v1h-1zM824 484h1v1h-1zM824 513h1v1h-1zM824 542h1v1h-1zM824 571h1v1h-1zM824 601h1v1h-1zM824 630h1v1h-1zM826 396h1v1h-1zM826 425h1v1h-1zM826 454h1v1h-1zM826 484h1v1h-1zM826 513h1v1h-1zM826 542h1v1h-1zM826 571h1v1h-1zM826 601h1v1h-1zM826 630h1v1h-1zM828 396h1v1h-1zM828 425h1v1h-1zM828 454h1v1h-1zM828 484h1v1h-1zM828 513h1v1h-1zM828 542h1v1h-1zM828 571h1v1h-1zM828 601h1v1h-1zM828 630h1v1h-1zM830 396h1v1h-1zM830 425h1v1h-1zM830 454h1v1h-1zM830 484h1v1h-1zM830 513h1v1h-1zM830 542h1v1h-1zM830 571h1v1h-1zM830 601h1v1h-1zM830 630h1v1h-1zM832 396h1v1h-1zM832 425h1v1h-1zM832 454h1v1h-1zM832 484h1v1h-1zM832 513h1v1h-1zM832 542h1v1h-1zM832 571h1v1h-1zM832 601h1v1h-1zM832 630h1v1h-1zM834 396h1v1h-1zM834 425h1v1h-1zM834 454h1v1h-1zM834 484h1v1h-1zM834 513h1v1h-1zM834 542h1v1h-1zM834 571h1v1h-1zM834 601h1v1h-1zM834 630h1v1h-1zM836 396h1v1h-1zM836 425h1v1h-1zM836 454h1v1h-1zM836 484h1v1h-1zM836 513h1v1h-1zM836 542h1v1h-1zM836 571h1v1h-1zM836 601h1v1h-1zM836 630h1v1h-1zM838 396h1v1h-1zM838 425h1v1h-1zM838 454h1v1h-1zM838 484h1v1h-1zM838 513h1v1h-1zM838 542h1v1h-1zM838 571h1v1h-1zM838 601h1v1h-1zM838 630h1v1h-1zM840 396h1v1h-1zM840 425h1v1h-1zM840 454h1v1h-1zM840 484h1v1h-1zM840 513h1v1h-1zM840 542h1v1h-1zM840 571h1v1h-1zM840 601h1v1h-1zM840 630h1v1h-1zM842 396h1v1h-1zM842 425h1v1h-1zM842 454h1v1h-1zM842 484h1v1h-1zM842 513h1v1h-1zM842 542h1v1h-1zM842 571h1v1h-1zM842 601h1v1h-1zM842 630h1v1h-1zM844 396h1v1h-1zM844 425h1v1h-1zM844 454h1v1h-1zM844 484h1v1h-1zM844 513h1v1h-1zM844 542h1v1h-1zM844 571h1v1h-1zM844 601h1v1h-1zM844 630h1v1h-1zM846 396h1v1h-1zM846 425h1v1h-1zM846 454h1v1h-1zM846 484h1v1h-1zM846 513h1v1h-1zM846 542h1v1h-1zM846 571h1v1h-1zM846 601h1v1h-1zM846 630h1v1h-1zM848 396h1v1h-1zM848 425h1v1h-1zM848 454h1v1h-1zM848 484h1v1h-1zM848 513h1v1h-1zM848 542h1v1h-1zM848 571h1v1h-1zM848 601h1v1h-1zM848 630h1v1h-1zM850 396h1v1h-1zM850 425h1v1h-1zM850 454h1v1h-1zM850 484h1v1h-1zM850 513h1v1h-1zM850 542h1v1h-1zM850 571h1v1h-1zM850 601h1v1h-1zM850 630h1v1h-1zM852 396h1v1h-1zM852 425h1v1h-1zM852 454h1v1h-1zM852 484h1v1h-1zM852 513h1v1h-1zM852 542h1v1h-1zM852 571h1v1h-1zM852 601h1v1h-1zM852 630h1v1h-1zM854 396h1v1h-1zM854 425h1v1h-1zM854 454h1v1h-1zM854 484h1v1h-1zM854 513h1v1h-1zM854 542h1v1h-1zM854 571h1v1h-1zM854 601h1v1h-1zM854 630h1v1h-1zM856 396h1v1h-1zM856 425h1v1h-1zM856 454h1v1h-1zM856 484h1v1h-1zM856 513h1v1h-1zM856 542h1v1h-1zM856 571h1v1h-1zM856 601h1v1h-1zM856 630h1v1h-1zM858 396h1v1h-1zM858 425h1v1h-1zM858 454h1v1h-1zM858 484h1v1h-1zM858 513h1v1h-1zM858 542h1v1h-1zM858 571h1v1h-1zM858 601h1v1h-1zM858 630h1v1h-1zM860 396h1v1h-1zM860 425h1v1h-1zM860 454h1v1h-1zM860 484h1v1h-1zM860 513h1v1h-1zM860 542h1v1h-1zM860 571h1v1h-1zM860 601h1v1h-1zM860 630h1v1h-1zM862 396h1v1h-1zM862 425h1v1h-1zM862 454h1v1h-1zM862 484h1v1h-1zM862 513h1v1h-1zM862 542h1v1h-1zM862 571h1v1h-1zM862 601h1v1h-1zM862 630h1v1h-1zM864 396h1v1h-1zM864 425h1v1h-1zM864 454h1v1h-1zM864 484h1v1h-1zM864 513h1v1h-1zM864 542h1v1h-1zM864 571h1v1h-1zM864 601h1v1h-1zM864 630h1v1h-1zM866 396h1v1h-1zM866 425h1v1h-1zM866 454h1v1h-1zM866 484h1v1h-1zM866 513h1v1h-1zM866 542h1v1h-1zM866 571h1v1h-1zM866 601h1v1h-1zM866 630h1v1h-1zM868 396h1v1h-1zM868 425h1v1h-1zM868 454h1v1h-1zM868 484h1v1h-1zM868 513h1v1h-1zM868 542h1v1h-1zM868 571h1v1h-1zM868 601h1v1h-1zM868 630h1v1h-1zM870 396h1v1h-1zM870 425h1v1h-1zM870 454h1v1h-1zM870 484h1v1h-1zM870 513h1v1h-1zM870 542h1v1h-1zM870 571h1v1h-1zM870 601h1v1h-1zM870 630h1v1h-1zM872 396h1v1h-1zM872 425h1v1h-1zM872 454h1v1h-1zM872 484h1v1h-1zM872 513h1v1h-1zM872 542h1v1h-1zM872 571h1v1h-1zM872 601h1v1h-1zM872 630h1v1h-1zM874 396h1v1h-1zM874 425h1v1h-1zM874 454h1v1h-1zM874 484h1v1h-1zM874 513h1v1h-1zM874 542h1v1h-1zM874 571h1v1h-1zM874 601h1v1h-1zM874 630h1v1h-1zM876 396h1v1h-1zM876 425h1v1h-1zM876 454h1v1h-1zM876 484h1v1h-1zM876 513h1v1h-1zM876 542h1v1h-1zM876 571h1v1h-1zM876 601h1v1h-1zM876 630h1v1h-1zM878 396h1v1h-1zM878 425h1v1h-1zM878 454h1v1h-1zM878 484h1v1h-1zM878 513h1v1h-1zM878 542h1v1h-1zM878 571h1v1h-1zM878 601h1v1h-1zM878 630h1v1h-1zM880 396h1v1h-1zM880 425h1v1h-1zM880 454h1v1h-1zM880 484h1v1h-1zM880 513h1v1h-1zM880 542h1v1h-1zM880 571h1v1h-1zM880 601h1v1h-1zM880 630h1v1h-1zM882 396h1v1h-1zM882 425h1v1h-1zM882 454h1v1h-1zM882 484h1v1h-1zM882 513h1v1h-1zM882 542h1v1h-1zM882 571h1v1h-1zM882 601h1v1h-1zM882 630h1v1h-1zM884 396h1v1h-1zM884 425h1v1h-1zM884 454h1v1h-1zM884 484h1v1h-1zM884 513h1v1h-1zM884 542h1v1h-1zM884 571h1v1h-1zM884 601h1v1h-1zM884 630h1v1h-1zM886 396h1v1h-1zM886 425h1v1h-1zM886 454h1v1h-1zM886 484h1v1h-1zM886 513h1v1h-1zM886 542h1v1h-1zM886 571h1v1h-1zM886 601h1v1h-1zM886 630h1v1h-1zM888 396h1v1h-1zM888 425h1v1h-1zM888 454h1v1h-1zM888 484h1v1h-1zM888 513h1v1h-1zM888 542h1v1h-1zM888 571h1v1h-1zM888 601h1v1h-1zM888 630h1v1h-1zM890 396h1v1h-1zM890 425h1v1h-1zM890 454h1v1h-1zM890 484h1v1h-1zM890 513h1v1h-1zM890 542h1v1h-1zM890 571h1v1h-1zM890 601h1v1h-1zM890 630h1v1h-1zM892 396h1v1h-1zM892 425h1v1h-1zM892 454h1v1h-1zM892 484h1v1h-1zM892 513h1v1h-1zM892 542h1v1h-1zM892 571h1v1h-1zM892 601h1v1h-1zM892 630h1v1h-1zM894 396h1v1h-1zM894 425h1v1h-1zM894 454h1v1h-1zM894 484h1v1h-1zM894 513h1v1h-1zM894 542h1v1h-1zM894 571h1v1h-1zM894 601h1v1h-1zM894 630h1v1h-1zM896 396h1v1h-1zM896 425h1v1h-1zM896 454h1v1h-1zM896 484h1v1h-1zM896 513h1v1h-1zM896 542h1v1h-1zM896 571h1v1h-1zM896 601h1v1h-1zM896 630h1v1h-1zM898 396h1v1h-1zM898 425h1v1h-1zM898 454h1v1h-1zM898 484h1v1h-1zM898 513h1v1h-1zM898 542h1v1h-1zM898 571h1v1h-1zM898 601h1v1h-1zM898 630h1v1h-1zM900 396h1v1h-1zM900 425h1v1h-1zM900 454h1v1h-1zM900 484h1v1h-1zM900 513h1v1h-1zM900 542h1v1h-1zM900 571h1v1h-1zM900 601h1v1h-1zM900 630h1v1h-1zM902 396h1v1h-1zM902 425h1v1h-1zM902 454h1v1h-1zM902 484h1v1h-1zM902 513h1v1h-1zM902 542h1v1h-1zM902 571h1v1h-1zM902 601h1v1h-1zM902 630h1v1h-1zM904 396h1v1h-1zM904 425h1v1h-1zM904 454h1v1h-1zM904 484h1v1h-1zM904 513h1v1h-1zM904 542h1v1h-1zM904 571h1v1h-1zM904 601h1v1h-1zM904 630h1v1h-1zM906 396h1v1h-1zM906 425h1v1h-1zM906 454h1v1h-1zM906 484h1v1h-1zM906 513h1v1h-1zM906 542h1v1h-1zM906 571h1v1h-1zM906 601h1v1h-1zM906 630h1v1h-1zM908 396h1v1h-1zM908 425h1v1h-1zM908 454h1v1h-1zM908 484h1v1h-1zM908 513h1v1h-1zM908 542h1v1h-1zM908 571h1v1h-1zM908 601h1v1h-1zM908 630h1v1h-1zM910 396h1v1h-1zM910 425h1v1h-1zM910 454h1v1h-1zM910 484h1v1h-1zM910 513h1v1h-1zM910 542h1v1h-1zM910 571h1v1h-1zM910 601h1v1h-1zM910 630h1v1h-1zM911 368h1v1h-1zM911 370h1v1h-1zM911 372h1v1h-1zM911 374h1v1h-1zM911 376h1v1h-1zM911 378h1v1h-1zM911 380h1v1h-1zM911 382h1v1h-1zM911 384h1v1h-1zM911 386h1v1h-1zM911 388h1v1h-1zM911 390h1v1h-1zM911 392h1v1h-1zM911 394h1v1h-1zM911 396h1v1h-1zM911 398h1v1h-1zM911 400h1v1h-1zM911 402h1v1h-1zM911 404h1v1h-1zM911 406h1v1h-1zM911 408h1v1h-1zM911 410h1v1h-1zM911 412h1v1h-1zM911 414h1v1h-1zM911 416h1v1h-1zM911 418h1v1h-1zM911 420h1v1h-1zM911 422h1v1h-1zM911 424h1v1h-1zM911 426h1v1h-1zM911 428h1v1h-1zM911 430h1v1h-1zM911 432h1v1h-1zM911 434h1v1h-1zM911 436h1v1h-1zM911 438h1v1h-1zM911 440h1v1h-1zM911 442h1v1h-1zM911 444h1v1h-1zM911 446h1v1h-1zM911 448h1v1h-1zM911 450h1v1h-1zM911 452h1v1h-1zM911 454h1v1h-1zM911 456h1v1h-1zM911 458h1v1h-1zM911 460h1v1h-1zM911 462h1v1h-1zM911 464h1v1h-1zM911 466h1v1h-1zM911 468h1v1h-1zM911 470h1v1h-1zM911 472h1v1h-1zM911 474h1v1h-1zM911 476h1v1h-1zM911 478h1v1h-1zM911 480h1v1h-1zM911 482h1v1h-1zM911 484h1v1h-1zM911 486h1v1h-1zM911 488h1v1h-1zM911 490h1v1h-1zM911 492h1v1h-1zM911 494h1v1h-1zM911 496h1v1h-1zM911 498h1v1h-1zM911 500h1v1h-1zM911 502h1v1h-1zM911 504h1v1h-1zM911 506h1v1h-1zM911 508h1v1h-1zM911 510h1v1h-1zM911 512h1v1h-1zM911 514h1v1h-1zM911 516h1v1h-1zM911 518h1v1h-1zM911 520h1v1h-1zM911 522h1v1h-1zM911 524h1v1h-1zM911 526h1v1h-1zM911 528h1v1h-1zM911 530h1v1h-1zM911 532h1v1h-1zM911 534h1v1h-1zM911 536h1v1h-1zM911 538h1v1h-1zM911 540h1v1h-1zM911 542h1v1h-1zM911 544h1v1h-1zM911 546h1v1h-1zM911 548h1v1h-1zM911 550h1v1h-1zM911 552h1v1h-1zM911 554h1v1h-1zM911 556h1v1h-1zM911 558h1v1h-1zM911 560h1v1h-1zM911 562h1v1h-1zM911 564h1v1h-1zM911 566h1v1h-1zM911 568h1v1h-1zM911 570h1v1h-1zM911 572h1v1h-1zM911 574h1v1h-1zM911 576h1v1h-1zM911 578h1v1h-1zM911 580h1v1h-1zM911 582h1v1h-1zM911 584h1v1h-1zM911 586h1v1h-1zM911 588h1v1h-1zM911 590h1v1h-1zM911 592h1v1h-1zM911 594h1v1h-1zM911 596h1v1h-1zM911 598h1v1h-1zM911 600h1v1h-1zM911 602h1v1h-1zM911 604h1v1h-1zM911 606h1v1h-1zM911 608h1v1h-1zM911 610h1v1h-1zM911 612h1v1h-1zM911 614h1v1h-1zM911 616h1v1h-1zM911 618h1v1h-1zM911 620h1v1h-1zM911 622h1v1h-1zM911 624h1v1h-1zM911 626h1v1h-1zM911 628h1v1h-1zM911 630h1v1h-1zM911 632h1v1h-1zM911 634h1v1h-1zM911 636h1v1h-1zM911 638h1v1h-1zM911 640h1v1h-1zM911 642h1v1h-1zM911 644h1v1h-1zM911 646h1v1h-1zM911 648h1v1h-1zM911 650h1v1h-1zM911 652h1v1h-1zM911 654h1v1h-1zM911 656h1v1h-1zM911 658h1v1h-1zM912 396h1v1h-1zM912 425h1v1h-1zM912 454h1v1h-1zM912 484h1v1h-1zM912 513h1v1h-1zM912 542h1v1h-1zM912 571h1v1h-1zM912 601h1v1h-1zM912 630h1v1h-1zM914 396h1v1h-1zM914 425h1v1h-1zM914 454h1v1h-1zM914 484h1v1h-1zM914 513h1v1h-1zM914 542h1v1h-1zM914 571h1v1h-1zM914 601h1v1h-1zM914 630h1v1h-1zM916 396h1v1h-1zM916 425h1v1h-1zM916 454h1v1h-1zM916 484h1v1h-1zM916 513h1v1h-1zM916 542h1v1h-1zM916 571h1v1h-1zM916 601h1v1h-1zM916 630h1v1h-1zM918 396h1v1h-1zM918 425h1v1h-1zM918 454h1v1h-1zM918 484h1v1h-1zM918 513h1v1h-1zM918 542h1v1h-1zM918 571h1v1h-1zM918 601h1v1h-1zM918 630h1v1h-1zM920 396h1v1h-1zM920 425h1v1h-1zM920 454h1v1h-1zM920 484h1v1h-1zM920 513h1v1h-1zM920 542h1v1h-1zM920 571h1v1h-1zM920 601h1v1h-1zM920 630h1v1h-1zM922 396h1v1h-1zM922 425h1v1h-1zM922 454h1v1h-1zM922 484h1v1h-1zM922 513h1v1h-1zM922 542h1v1h-1zM922 571h1v1h-1zM922 601h1v1h-1zM922 630h1v1h-1zM924 396h1v1h-1zM924 425h1v1h-1zM924 454h1v1h-1zM924 484h1v1h-1zM924 513h1v1h-1zM924 542h1v1h-1zM924 571h1v1h-1zM924 601h1v1h-1zM924 630h1v1h-1zM926 396h1v1h-1zM926 425h1v1h-1zM926 454h1v1h-1zM926 484h1v1h-1zM926 513h1v1h-1zM926 542h1v1h-1zM926 571h1v1h-1zM926 601h1v1h-1zM926 630h1v1h-1zM928 396h1v1h-1zM928 425h1v1h-1zM928 454h1v1h-1zM928 484h1v1h-1zM928 513h1v1h-1zM928 542h1v1h-1zM928 571h1v1h-1zM928 601h1v1h-1zM928 630h1v1h-1zM930 396h1v1h-1zM930 425h1v1h-1zM930 454h1v1h-1zM930 484h1v1h-1zM930 513h1v1h-1zM930 542h1v1h-1zM930 571h1v1h-1zM930 601h1v1h-1zM930 630h1v1h-1zM932 396h1v1h-1zM932 425h1v1h-1zM932 454h1v1h-1zM932 484h1v1h-1zM932 513h1v1h-1zM932 542h1v1h-1zM932 571h1v1h-1zM932 601h1v1h-1zM932 630h1v1h-1zM934 396h1v1h-1zM934 425h1v1h-1zM934 454h1v1h-1zM934 484h1v1h-1zM934 513h1v1h-1zM934 542h1v1h-1zM934 571h1v1h-1zM934 601h1v1h-1zM934 630h1v1h-1zM936 396h1v1h-1zM936 425h1v1h-1zM936 454h1v1h-1zM936 484h1v1h-1zM936 513h1v1h-1zM936 542h1v1h-1zM936 571h1v1h-1zM936 601h1v1h-1zM936 630h1v1h-1zM938 396h1v1h-1zM938 425h1v1h-1zM938 454h1v1h-1zM938 484h1v1h-1zM938 513h1v1h-1zM938 542h1v1h-1zM938 571h1v1h-1zM938 601h1v1h-1zM938 630h1v1h-1zM940 396h1v1h-1zM940 425h1v1h-1zM940 454h1v1h-1zM940 484h1v1h-1zM940 513h1v1h-1zM940 542h1v1h-1zM940 571h1v1h-1zM940 601h1v1h-1zM940 630h1v1h-1zM942 396h1v1h-1zM942 425h1v1h-1zM942 454h1v1h-1zM942 484h1v1h-1zM942 513h1v1h-1zM942 542h1v1h-1zM942 571h1v1h-1zM942 601h1v1h-1zM942 630h1v1h-1zM944 396h1v1h-1zM944 425h1v1h-1zM944 454h1v1h-1zM944 484h1v1h-1zM944 513h1v1h-1zM944 542h1v1h-1zM944 571h1v1h-1zM944 601h1v1h-1zM944 630h1v1h-1zM946 396h1v1h-1zM946 425h1v1h-1zM946 454h1v1h-1zM946 484h1v1h-1zM946 513h1v1h-1zM946 542h1v1h-1zM946 571h1v1h-1zM946 601h1v1h-1zM946 630h1v1h-1zM948 396h1v1h-1zM948 425h1v1h-1zM948 454h1v1h-1zM948 484h1v1h-1zM948 513h1v1h-1zM948 542h1v1h-1zM948 571h1v1h-1zM948 601h1v1h-1zM948 630h1v1h-1zM950 396h1v1h-1zM950 425h1v1h-1zM950 454h1v1h-1zM950 484h1v1h-1zM950 513h1v1h-1zM950 542h1v1h-1zM950 571h1v1h-1zM950 601h1v1h-1zM950 630h1v1h-1zM952 396h1v1h-1zM952 425h1v1h-1zM952 454h1v1h-1zM952 484h1v1h-1zM952 513h1v1h-1zM952 542h1v1h-1zM952 571h1v1h-1zM952 601h1v1h-1zM952 630h1v1h-1zM954 396h1v1h-1zM954 425h1v1h-1zM954 454h1v1h-1zM954 484h1v1h-1zM954 513h1v1h-1zM954 542h1v1h-1zM954 571h1v1h-1zM954 601h1v1h-1zM954 630h1v1h-1zM956 396h1v1h-1zM956 425h1v1h-1zM956 454h1v1h-1zM956 484h1v1h-1zM956 513h1v1h-1zM956 542h1v1h-1zM956 571h1v1h-1zM956 601h1v1h-1zM956 630h1v1h-1zM958 396h1v1h-1zM958 425h1v1h-1zM958 454h1v1h-1zM958 484h1v1h-1zM958 513h1v1h-1zM958 542h1v1h-1zM958 571h1v1h-1zM958 601h1v1h-1zM958 630h1v1h-1zM960 396h1v1h-1zM960 425h1v1h-1zM960 454h1v1h-1zM960 484h1v1h-1zM960 513h1v1h-1zM960 542h1v1h-1zM960 571h1v1h-1zM960 601h1v1h-1zM960 630h1v1h-1zM962 396h1v1h-1zM962 425h1v1h-1zM962 454h1v1h-1zM962 484h1v1h-1zM962 513h1v1h-1zM962 542h1v1h-1zM962 571h1v1h-1zM962 601h1v1h-1zM962 630h1v1h-1zM964 396h1v1h-1zM964 425h1v1h-1zM964 454h1v1h-1zM964 484h1v1h-1zM964 513h1v1h-1zM964 542h1v1h-1zM964 571h1v1h-1zM964 601h1v1h-1zM964 630h1v1h-1zM966 396h1v1h-1zM966 425h1v1h-1zM966 454h1v1h-1zM966 484h1v1h-1zM966 513h1v1h-1zM966 542h1v1h-1zM966 571h1v1h-1zM966 601h1v1h-1zM966 630h1v1h-1zM968 396h1v1h-1zM968 425h1v1h-1zM968 454h1v1h-1zM968 484h1v1h-1zM968 513h1v1h-1zM968 542h1v1h-1zM968 571h1v1h-1zM968 601h1v1h-1zM968 630h1v1h-1zM970 396h1v1h-1zM970 425h1v1h-1zM970 454h1v1h-1zM970 484h1v1h-1zM970 513h1v1h-1zM970 542h1v1h-1zM970 571h1v1h-1zM970 601h1v1h-1zM970 630h1v1h-1zM972 396h1v1h-1zM972 425h1v1h-1zM972 454h1v1h-1zM972 484h1v1h-1zM972 513h1v1h-1zM972 542h1v1h-1zM972 571h1v1h-1zM972 601h1v1h-1zM972 630h1v1h-1zM974 396h1v1h-1zM974 425h1v1h-1zM974 454h1v1h-1zM974 484h1v1h-1zM974 513h1v1h-1zM974 542h1v1h-1zM974 571h1v1h-1zM974 601h1v1h-1zM974 630h1v1h-1zM976 396h1v1h-1zM976 425h1v1h-1zM976 454h1v1h-1zM976 484h1v1h-1zM976 513h1v1h-1zM976 542h1v1h-1zM976 571h1v1h-1zM976 601h1v1h-1zM976 630h1v1h-1zM978 396h1v1h-1zM978 425h1v1h-1zM978 454h1v1h-1zM978 484h1v1h-1zM978 513h1v1h-1zM978 542h1v1h-1zM978 571h1v1h-1zM978 601h1v1h-1zM978 630h1v1h-1zM980 396h1v1h-1zM980 425h1v1h-1zM980 454h1v1h-1zM980 484h1v1h-1zM980 513h1v1h-1zM980 542h1v1h-1zM980 571h1v1h-1zM980 601h1v1h-1zM980 630h1v1h-1zM982 396h1v1h-1zM982 425h1v1h-1zM982 454h1v1h-1zM982 484h1v1h-1zM982 513h1v1h-1zM982 542h1v1h-1zM982 571h1v1h-1zM982 601h1v1h-1zM982 630h1v1h-1zM984 396h1v1h-1zM984 425h1v1h-1zM984 454h1v1h-1zM984 484h1v1h-1zM984 513h1v1h-1zM984 542h1v1h-1zM984 571h1v1h-1zM984 601h1v1h-1zM984 630h1v1h-1zM986 396h1v1h-1zM986 425h1v1h-1zM986 454h1v1h-1zM986 484h1v1h-1zM986 513h1v1h-1zM986 542h1v1h-1zM986 571h1v1h-1zM986 601h1v1h-1zM986 630h1v1h-1zM988 396h1v1h-1zM988 425h1v1h-1zM988 454h1v1h-1zM988 484h1v1h-1zM988 513h1v1h-1zM988 542h1v1h-1zM988 571h1v1h-1zM988 601h1v1h-1zM988 630h1v1h-1zM990 396h1v1h-1zM990 425h1v1h-1zM990 454h1v1h-1zM990 484h1v1h-1zM990 513h1v1h-1zM990 542h1v1h-1zM990 571h1v1h-1zM990 601h1v1h-1zM990 630h1v1h-1zM992 396h1v1h-1zM992 425h1v1h-1zM992 454h1v1h-1zM992 484h1v1h-1zM992 513h1v1h-1zM992 542h1v1h-1zM992 571h1v1h-1zM992 601h1v1h-1zM992 630h1v1h-1zM994 396h1v1h-1zM994 425h1v1h-1zM994 454h1v1h-1zM994 484h1v1h-1zM994 513h1v1h-1zM994 542h1v1h-1zM994 571h1v1h-1zM994 601h1v1h-1zM994 630h1v1h-1zM996 396h1v1h-1zM996 425h1v1h-1zM996 454h1v1h-1zM996 484h1v1h-1zM996 513h1v1h-1zM996 542h1v1h-1zM996 571h1v1h-1zM996 601h1v1h-1zM996 630h1v1h-1zM998 396h1v1h-1zM998 425h1v1h-1zM998 454h1v1h-1zM998 484h1v1h-1zM998 513h1v1h-1zM998 542h1v1h-1zM998 571h1v1h-1zM998 601h1v1h-1zM998 630h1v1h-1zM1000 396h1v1h-1zM1000 425h1v1h-1zM1000 454h1v1h-1zM1000 484h1v1h-1zM1000 513h1v1h-1zM1000 542h1v1h-1zM1000 571h1v1h-1zM1000 601h1v1h-1zM1000 630h1v1h-1zM1002 396h1v1h-1zM1002 425h1v1h-1zM1002 454h1v1h-1zM1002 484h1v1h-1zM1002 513h1v1h-1zM1002 542h1v1h-1zM1002 571h1v1h-1zM1002 601h1v1h-1zM1002 630h1v1h-1zM1004 396h1v1h-1zM1004 425h1v1h-1zM1004 454h1v1h-1zM1004 484h1v1h-1zM1004 513h1v1h-1zM1004 542h1v1h-1zM1004 571h1v1h-1zM1004 601h1v1h-1zM1004 630h1v1h-1zM1006 396h1v1h-1zM1006 425h1v1h-1zM1006 454h1v1h-1zM1006 484h1v1h-1zM1006 513h1v1h-1zM1006 542h1v1h-1zM1006 571h1v1h-1zM1006 601h1v1h-1zM1006 630h1v1h-1zM1008 396h1v1h-1zM1008 425h1v1h-1zM1008 454h1v1h-1zM1008 484h1v1h-1zM1008 513h1v1h-1zM1008 542h1v1h-1zM1008 571h1v1h-1zM1008 601h1v1h-1zM1008 630h1v1h-1z" fill="#f0f0f0"/>
<path d="M34.5 369 L41 369 L37.7 378.5 Z" fill="none" stroke="#eee" stroke-width="1.4"/>
<path d="M41.9 366.9 L58.3 366.9 L50.3 383.7 Z" fill="#f22424"/>
<text x="50.30" y="377.00" font-size="11" fill="#fff" text-anchor="middle" font-weight="bold">R</text>
<text x="57.40" y="379.00" font-size="11.5" fill="#e8432a" textLength="41.20" lengthAdjust="spacing">505kHz</text>
<text x="57.40" y="391.40" font-size="11.5" fill="#e8432a" textLength="60.20" lengthAdjust="spacing">32.3 dBµA</text>
<text x="119.50" y="391.40" font-size="11.5" fill="#eee" textLength="15.00" lengthAdjust="spacing">µA</text>
<path d="M146.7 368.5 L154.2 368.5 L150.4 377.5 Z" fill="none" stroke="#eee" stroke-width="1.3"/>
<text x="154.40" y="378.70" font-size="11.5" fill="#eee" textLength="54.80" lengthAdjust="spacing">1.015MHz</text>
<text x="154.40" y="391.00" font-size="11.5" fill="#eee" textLength="59.00" lengthAdjust="spacing">29.7 dBµA</text>
<path d="M245.7 368.5 L253.2 368.5 L249.4 377.5 Z" fill="none" stroke="#eee" stroke-width="1.3"/>
<text x="253.40" y="378.70" font-size="11.5" fill="#eee" textLength="54.40" lengthAdjust="spacing">1.520MHz</text>
<text x="253.30" y="391.00" font-size="11.5" fill="#eee" textLength="59.30" lengthAdjust="spacing">9.68 dBµA</text>
<path d="M344.7 368.5 L352.2 368.5 L348.4 377.5 Z" fill="none" stroke="#eee" stroke-width="1.3"/>
<text x="352.40" y="378.70" font-size="11.5" fill="#eee" textLength="55.20" lengthAdjust="spacing">2.030MHz</text>
<text x="353.80" y="391.00" font-size="11.5" fill="#eee" textLength="65.50" lengthAdjust="spacing">−3.23 dBµA</text>
<path d="M641.5 368.5 L649.0 368.5 L645.2 377.5 Z" fill="none" stroke="#eee" stroke-width="1.3"/>
<text x="649.20" y="378.70" font-size="11.5" fill="#eee" textLength="56.60" lengthAdjust="spacing">3.550MHz</text>
<text x="651.30" y="391.00" font-size="11.5" fill="#eee" textLength="66.30" lengthAdjust="spacing">−9.39 dBµA</text>
<path d="M742.0 368.5 L749.5 368.5 L745.8 377.5 Z" fill="none" stroke="#eee" stroke-width="1.3"/>
<text x="749.70" y="378.70" font-size="11.5" fill="#eee" textLength="56.60" lengthAdjust="spacing">4.060MHz</text>
<text x="752.00" y="391.00" font-size="11.5" fill="#eee" textLength="66.00" lengthAdjust="spacing">−11.9 dBµA</text>
<path d="M840.9 368.5 L848.4 368.5 L844.6 377.5 Z" fill="none" stroke="#eee" stroke-width="1.3"/>
<text x="848.60" y="378.70" font-size="11.5" fill="#eee" textLength="56.60" lengthAdjust="spacing">4.565MHz</text>
<text x="850.60" y="391.00" font-size="11.5" fill="#eee" textLength="66.30" lengthAdjust="spacing">−10.2 dBµA</text>
<path d="M425.6 466.5 L207 403.9" stroke="#fff" stroke-width="3" fill="none"/>
<path d="M198.7 401.5 L213.5 399.8 L209.8 411.5 Z" fill="#fff"/>
<path d="M645.2 467.2 L843 399.2" stroke="#fff" stroke-width="3" fill="none"/>
<path d="M851 396.2 L837.2 395.8 L842 405.2 Z" fill="#fff"/>
<text x="432.30" y="477.70" font-size="24" fill="#fff" textLength="199.90" lengthAdjust="spacing" stroke="#fff" stroke-width="0.4">Automatic markers</text>
<path d="M9 359.2 L20 359.2 L27.5 366.5 L20 373.9 L9 373.9 Z" fill="#111" stroke="#f5a01e" stroke-width="1"/>
<text x="9.80" y="372.60" font-size="14.5" fill="#f5a01e" textLength="11.50" lengthAdjust="spacingAndGlyphs" font-weight="bold">RF</text>
<rect x="9" y="373.9" width="12" height="10.8" fill="#f5a01e"/>
<text x="10.80" y="383.60" font-size="11.5" fill="#111" textLength="8.60" lengthAdjust="spacingAndGlyphs" font-weight="bold">N</text>
<rect x="28.50" y="661.50" width="388.00" height="20.00" rx="7" ry="7" fill="#0d0d0d" stroke="#e0e0e0" stroke-width="1.2"/>
<rect x="33.8" y="664.8" width="24.6" height="14.8" rx="7.4" fill="#f5a01e"/>
<text x="38.60" y="677.80" font-size="14.5" fill="#111" textLength="17.80" lengthAdjust="spacingAndGlyphs" font-weight="bold">RF</text>
<text x="68.80" y="677.00" font-size="16" fill="#f5a01e" textLength="117.50" lengthAdjust="spacing" stroke="#f5a01e" stroke-width="0.3">Ref: 48.0 dBµA</text>
<text x="224.00" y="677.00" font-size="16" fill="#f5a01e" textLength="141.00" lengthAdjust="spacing" stroke="#f5a01e" stroke-width="0.3">Scale: 10.0 dB/div</text>
<rect x="426.00" y="661.50" width="185.50" height="20.00" rx="7" ry="7" fill="#0d0d0d" stroke="#e0e0e0" stroke-width="1.2"/>
<text x="431.80" y="676.60" font-size="15.5" fill="#f5a01e" textLength="22.50" lengthAdjust="spacing" stroke="#f5a01e" stroke-width="0.3">CF:</text>
<text x="465.50" y="676.60" font-size="15.5" fill="#f5a01e" textLength="128.00" lengthAdjust="spacing" stroke="#f5a01e" stroke-width="0.3">2.90000000MHz</text>
<rect x="621.50" y="661.50" width="211.30" height="37.00" rx="7" ry="7" fill="#0d0d0d" stroke="#e0e0e0" stroke-width="1.2"/>
<text x="626.50" y="676.60" font-size="15.5" fill="#f5a01e" textLength="43.00" lengthAdjust="spacing" stroke="#f5a01e" stroke-width="0.3">Span:</text>
<text x="689.70" y="676.60" font-size="15.5" fill="#f5a01e" textLength="97.60" lengthAdjust="spacing" stroke="#f5a01e" stroke-width="0.3">5.00000MHz</text>
<text x="626.50" y="694.50" font-size="15.5" fill="#f5a01e" textLength="38.70" lengthAdjust="spacing" stroke="#f5a01e" stroke-width="0.3">RBW:</text>
<text x="689.70" y="694.50" font-size="15.5" fill="#f5a01e" textLength="64.20" lengthAdjust="spacing" stroke="#f5a01e" stroke-width="0.3">5.00kHz</text>
<rect x="842.00" y="661.50" width="167.00" height="37.00" rx="7" ry="7" fill="#0d0d0d" stroke="#e0e0e0" stroke-width="1.2"/>
<rect x="872.1" y="664.0" width="24.8" height="16" rx="8" fill="#52c3cd"/>
<text x="884.50" y="677.00" font-size="15" fill="#111" text-anchor="middle" font-weight="bold">2</text>
<path d="M910.3 676.6 h3.3 l3.4 -10 h3.9" fill="none" stroke="#fff" stroke-width="1.8"/>
<text x="954.70" y="676.80" font-size="15" fill="#fff" textLength="49.40" lengthAdjust="spacing" stroke="#fff" stroke-width="0.3">2.50 V</text>
<rect x="899.80" y="720.50" width="109.20" height="35.00" rx="7" ry="7" fill="#0d0d0d" stroke="#e0e0e0" stroke-width="1.2"/>
<text x="905.90" y="735.70" font-size="14.5" fill="#fff" textLength="97.70" lengthAdjust="spacing" stroke="#fff" stroke-width="0.3">26 Jun 2011</text>
<text x="905.90" y="751.30" font-size="14.8" fill="#fff" textLength="68.00" lengthAdjust="spacing" stroke="#fff" stroke-width="0.3">16:40:55</text>
</svg>
</body></html>
